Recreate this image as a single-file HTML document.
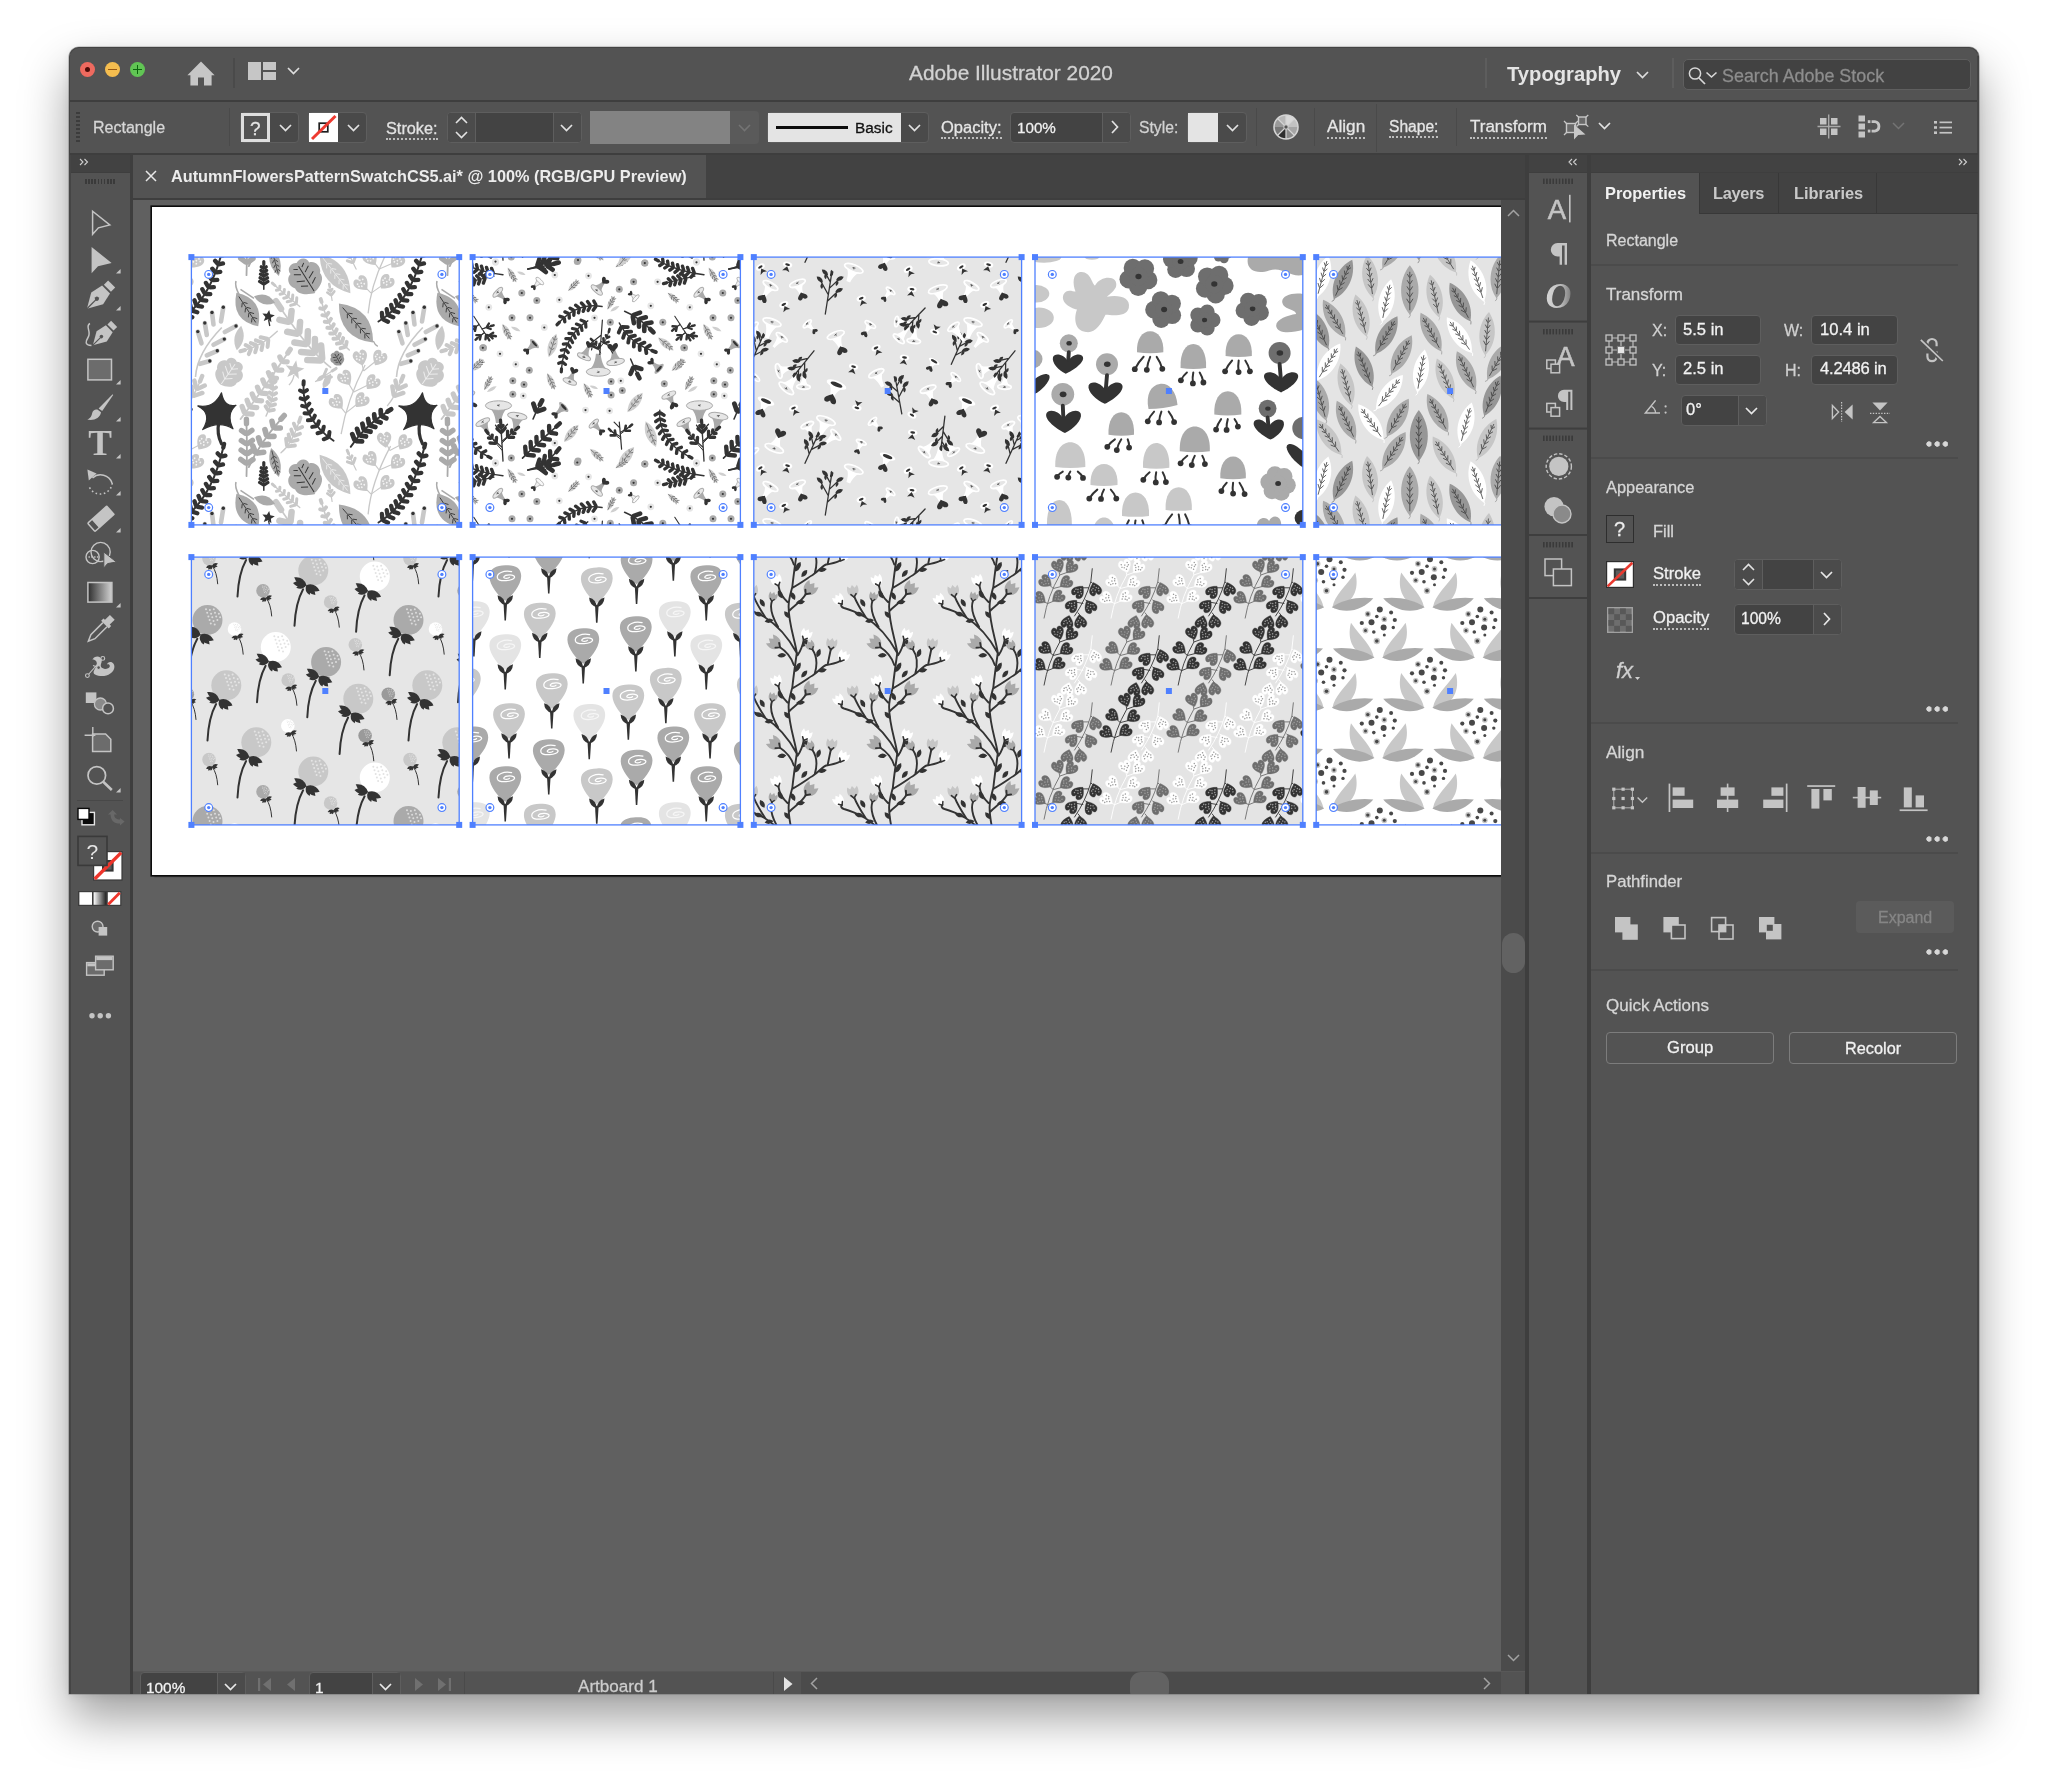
<!DOCTYPE html>
<html lang="en"><head><meta charset="utf-8"><title>Adobe Illustrator 2020</title>
<style>
*{box-sizing:border-box;margin:0;padding:0}
html,body{width:2048px;height:1786px;background:#fff;overflow:hidden}
body{position:relative;font-family:"Liberation Sans",Arial,sans-serif;color:#dcdcdc;font-size:16px}
.a{position:absolute}
.t{position:absolute;white-space:nowrap;line-height:1;will-change:transform}
#win{left:69px;top:47px;width:1910px;height:1647px;background:#535353;border-radius:10px 10px 0 0;border:1.6px solid #434343;border-bottom:0;
 box-shadow:0 0 0 .6px rgba(0,0,0,.3),0 24px 48px rgba(0,0,0,.38),0 2px 8px rgba(0,0,0,.08)}
.t{-webkit-text-stroke:.28px currentColor}
.t[style*="font-weight:700"]{-webkit-text-stroke:0}
.dk{background:#3e3e3e}
.f{position:absolute;background:#434343;border:1px solid #5e5e5e;border-radius:4px}
.dv{position:absolute;width:1px;background:#5e5e5e}
.u{border-bottom:2px dotted #bdbdbd;padding-bottom:1px}
.hl{position:absolute;height:2px;background:#4b4b4b}
svg{position:absolute;overflow:visible;will-change:transform}
.more{width:22px;height:6px;background:radial-gradient(circle at 3px 3px,#d8d8d8 0 2.4px,transparent 3px) 0 0/8.2px 6px repeat-x}
</style></head><body>
<div class="a" id="win"></div>
<!-- title bar -->
<div class="a" style="left:80px;top:62px;width:15px;height:15px;border-radius:50%;background:#ee6a5f"></div>
<div class="a" style="left:85px;top:67px;width:5px;height:5px;border-radius:50%;background:#4c0b07"></div>
<div class="a" style="left:105px;top:62px;width:15px;height:15px;border-radius:50%;background:#f5bd4f"></div>
<div class="a" style="left:108px;top:68.6px;width:9px;height:1.6px;background:#985712"></div>
<div class="a" style="left:130px;top:62px;width:15px;height:15px;border-radius:50%;background:#61c554"></div>
<div class="a" style="left:133px;top:68.7px;width:9px;height:1.6px;background:#0b650d"></div>
<div class="a" style="left:136.7px;top:65px;width:1.6px;height:9px;background:#0b650d"></div>
<svg style="left:187px;top:61px" width="28" height="26" viewBox="0 0 28 26"><path d="M14 0.6 L27.6 14.2 H24.6 V24.6 H17 V16.4 H11 V24.6 H3.4 V14.2 H0.4 Z" fill="#c6c6c6"/></svg>
<div class="a" style="left:233px;top:58px;width:2px;height:30px;background:#4a4a4a"></div>
<svg style="left:248px;top:62px" width="28" height="18" viewBox="0 0 28 18"><rect x="0" y="0" width="13" height="18" fill="#c6c6c6"/><rect x="15" y="0" width="13" height="8" fill="#c6c6c6"/><rect x="15" y="10" width="13" height="8" fill="#c6c6c6"/></svg>
<svg style="left:287px;top:67px" width="13" height="8" viewBox="0 0 13 8"><path d="M1 1 L6.5 6.5 L12 1" fill="none" stroke="#dedede" stroke-width="1.7"/></svg>
<div class="t" style="left:909px;top:62.5px;font-size:20.85px;color:#d2d2d2">Adobe Illustrator 2020</div>
<div class="a" style="left:1485px;top:58px;width:2px;height:30px;background:#5d5d5d"></div>
<div class="t" style="left:1507px;top:63.5px;font-size:20.2px;font-weight:700;color:#e4e4e4">Typography</div>
<svg style="left:1636px;top:71px" width="13" height="8" viewBox="0 0 13 8"><path d="M1 1 L6.5 6.5 L12 1" fill="none" stroke="#dedede" stroke-width="1.7"/></svg>
<div class="a" style="left:1672px;top:58px;width:2px;height:30px;background:#5d5d5d"></div>
<div class="a" style="left:1683px;top:59px;width:288px;height:31px;background:#424242;border:1.5px solid #5f5f5f;border-radius:5px"></div>
<svg style="left:1688px;top:66px" width="32" height="20" viewBox="0 0 32 20"><circle cx="7" cy="7.5" r="5.6" fill="none" stroke="#d8d8d8" stroke-width="1.5"/><path d="M11 12 L17 18" stroke="#d8d8d8" stroke-width="1.7"/><path d="M18.5 6.5 L23.5 11 L28.5 6.5" fill="none" stroke="#d8d8d8" stroke-width="1.6"/></svg>
<div class="t" style="left:1722px;top:67.6px;font-size:17.9px;color:#8d8d8d">Search Adobe Stock</div>
<div class="a dk" style="left:70px;top:100px;width:1908px;height:2px"></div>
<div class="a" style="left:1976.5px;top:56px;width:2.5px;height:1638px;background:#444"></div>
<!-- control bar -->
<div class="a" style="left:76px;top:112px;width:3.5px;height:31px;background:repeating-linear-gradient(#3c3c3c 0 2px,transparent 2px 4px)"></div>
<div class="t" style="left:93px;top:120px;font-size:16px;color:#d6d6d6">Rectangle</div>
<div class="dv" style="left:229px;top:108px;height:38px;background:#4a4a4a"></div>
<!-- fill -->
<div class="f" style="left:240px;top:112px;width:59px;height:31px;background:#494949"></div>
<div class="a" style="left:241px;top:113px;width:29px;height:29px;background:#535353;border:3px solid #dedede"></div>
<div class="t" style="left:250px;top:119px;font-size:19px;color:#e6e6e6">?</div>
<svg style="left:279px;top:124px" width="13" height="8" viewBox="0 0 13 8"><path d="M1 1 L6.5 6.5 L12 1" fill="none" stroke="#e2e2e2" stroke-width="1.7"/></svg>
<!-- stroke -->
<div class="f" style="left:308px;top:112px;width:59px;height:31px;background:#494949"></div>
<svg style="left:309px;top:113px" width="29" height="29" viewBox="0 0 29 29"><rect width="29" height="29" fill="#fff"/><rect x="10.2" y="10.2" width="8.6" height="8.6" fill="none" stroke="#1e1e1e" stroke-width="1.7"/><path d="M3 26 L26.5 3" stroke="#ee3a30" stroke-width="3"/></svg>
<svg style="left:347px;top:124px" width="13" height="8" viewBox="0 0 13 8"><path d="M1 1 L6.5 6.5 L12 1" fill="none" stroke="#e2e2e2" stroke-width="1.7"/></svg>
<div class="t" style="left:386px;top:119.5px;font-size:16.3px;color:#e2e2e2"><span class="u">Stroke:</span></div>
<div class="f" style="left:447px;top:112px;width:135px;height:31px;background:#434343"></div>
<div class="a" style="left:448px;top:113px;width:27px;height:29px;background:#4b4b4b;border-radius:3px 0 0 3px"></div>
<div class="a" style="left:554px;top:113px;width:27px;height:29px;background:#4b4b4b;border-radius:0 3px 3px 0"></div>
<div class="dv" style="left:475px;top:113px;height:29px"></div><div class="dv" style="left:553px;top:113px;height:29px"></div>
<svg style="left:455px;top:116px" width="13" height="23" viewBox="0 0 13 23"><path d="M1 7 L6.5 1.5 L12 7 M1 16 L6.5 21.5 L12 16" fill="none" stroke="#e2e2e2" stroke-width="1.6"/></svg>
<svg style="left:560px;top:124px" width="13" height="8" viewBox="0 0 13 8"><path d="M1 1 L6.5 6.5 L12 1" fill="none" stroke="#e2e2e2" stroke-width="1.7"/></svg>
<!-- variable width profile (disabled) -->
<div class="a" style="left:590px;top:111px;width:169px;height:33px;background:#5a5a5a;border-radius:4px"></div>
<div class="a" style="left:590px;top:111px;width:140px;height:33px;background:#838383"></div>
<svg style="left:738px;top:124px" width="13" height="8" viewBox="0 0 13 8"><path d="M1 1 L6.5 6.5 L12 1" fill="none" stroke="#747474" stroke-width="1.6"/></svg>
<!-- brush -->
<div class="f" style="left:767px;top:112px;width:162px;height:31px;background:#4a4a4a"></div>
<div class="a" style="left:768px;top:113px;width:133px;height:29px;background:#e4e4e4"></div>
<div class="a" style="left:776px;top:126px;width:72px;height:3.4px;background:#0c0c0c"></div>
<div class="t" style="left:855px;top:120px;font-size:15.4px;color:#111">Basic</div>
<svg style="left:908px;top:124px" width="13" height="8" viewBox="0 0 13 8"><path d="M1 1 L6.5 6.5 L12 1" fill="none" stroke="#e2e2e2" stroke-width="1.7"/></svg>
<div class="t" style="left:941px;top:118.5px;font-size:16.5px;color:#e6e6e6"><span class="u">Opacity:</span></div>
<div class="f" style="left:1010px;top:112px;width:121px;height:31px"></div>
<div class="a" style="left:1103px;top:113px;width:27px;height:29px;background:#4b4b4b;border-radius:0 3px 3px 0"></div>
<div class="dv" style="left:1102px;top:113px;height:29px"></div>
<div class="t" style="left:1017px;top:119.5px;font-size:15.2px;color:#f0f0f0">100%</div>
<svg style="left:1111px;top:120px" width="8" height="14" viewBox="0 0 8 14"><path d="M1 1 L6.5 7 L1 13" fill="none" stroke="#e2e2e2" stroke-width="1.7"/></svg>
<div class="t" style="left:1138.5px;top:120px;font-size:15.7px;color:#d2d2d2">Style:</div>
<div class="f" style="left:1187px;top:112px;width:60px;height:31px;background:#4a4a4a"></div>
<div class="a" style="left:1188px;top:113px;width:30px;height:29px;background:#e4e4e4"></div>
<svg style="left:1226px;top:124px" width="13" height="8" viewBox="0 0 13 8"><path d="M1 1 L6.5 6.5 L12 1" fill="none" stroke="#e2e2e2" stroke-width="1.7"/></svg>
<div class="dv" style="left:1256px;top:108px;height:38px;background:#4a4a4a"></div>
<!-- recolor wheel -->
<svg style="left:1273px;top:114px" width="26" height="26" viewBox="-13 -13 26 26">
<circle r="12" fill="#8e8e8e"/>
<path d="M0 0 L0 -12 A12 12 0 0 1 8.5 -8.5 Z" fill="#d9d9d9"/><path d="M0 0 L8.5 -8.5 A12 12 0 0 1 12 0 Z" fill="#c2c2c2"/>
<path d="M0 0 L12 0 A12 12 0 0 1 8.5 8.5 Z" fill="#a5a5a5"/><path d="M0 0 L8.5 8.5 A12 12 0 0 1 0 12 Z" fill="#8a8a8a"/>
<path d="M0 0 L0 12 A12 12 0 0 1 -8.5 8.5 Z" fill="#2d2d2d"/><path d="M0 0 L-8.5 8.5 A12 12 0 0 1 -12 0 Z" fill="#777"/>
<path d="M0 0 L-12 0 A12 12 0 0 1 -8.5 -8.5 Z" fill="#9a9a9a"/><path d="M0 0 L-8.5 -8.5 A12 12 0 0 1 0 -12 Z" fill="#b8b8b8"/>
<g stroke="#d4d4d4" stroke-width="1.2"><path d="M0 0L0 -12M0 0L8.5 -8.5M0 0L8.5 8.5M0 0L-8.5 8.5M0 0L0 12M0 0L-8.5 -8.5"/></g>
<circle r="12" fill="none" stroke="#d4d4d4" stroke-width="1.6"/><circle r="2.2" fill="#555" stroke="#d4d4d4" stroke-width="1"/></svg>
<div class="dv" style="left:1314px;top:108px;height:38px;background:#4a4a4a"></div>
<div class="t" style="left:1327px;top:117.5px;font-size:17.2px;color:#e6e6e6"><span class="u">Align</span></div>
<div class="dv" style="left:1376px;top:104px;height:48px;background:#4a4a4a"></div>
<div class="t" style="left:1389px;top:118.5px;font-size:15.6px;color:#e6e6e6"><span class="u">Shape:</span></div>
<div class="dv" style="left:1456px;top:108px;height:38px;background:#4a4a4a"></div>
<div class="t" style="left:1469.5px;top:117.5px;font-size:17px;color:#e6e6e6"><span class="u">Transform</span></div>
<svg style="left:1563px;top:114px" width="27" height="27" viewBox="0 0 27 27"><rect x="3.5" y="9.5" width="9" height="9" fill="#6a6a6a" stroke="#c8c8c8" stroke-width="1.4"/><path d="M1 7 L3.5 9.5 M1 21 L3.5 18.5 M15 7 L12.5 9.5" stroke="#c8c8c8" stroke-width="1.3"/><rect x="15.5" y="3" width="7.5" height="7.5" fill="#6a6a6a" stroke="#c8c8c8" stroke-width="1.4"/><path d="M13.3 1 L15.5 3 M25.3 1 L23 3 M25.3 12.6 L23 10.5 M13.5 12.5 L15.5 10.5" stroke="#c8c8c8" stroke-width="1.2"/><path d="M11 10.5 L11 25.5 L15.2 21 L22.5 20.6 Z" fill="#c8c8c8"/></svg>
<svg style="left:1598px;top:122px" width="13" height="8" viewBox="0 0 13 8"><path d="M1 1 L6.5 6.5 L12 1" fill="none" stroke="#e2e2e2" stroke-width="1.7"/></svg>
<!-- right icons -->
<svg style="left:1817px;top:114px" width="24" height="25" viewBox="0 0 24 25"><g fill="#c4c4c4"><rect x="3" y="4" width="6.5" height="6.5"/><rect x="14" y="4" width="6.5" height="6.5"/><rect x="3" y="14.5" width="6.5" height="6.5"/><rect x="14" y="14.5" width="6.5" height="6.5"/></g><path d="M11.7 0.5 V24.5 M0.5 12.5 H23.5" stroke="#a9a9a9" stroke-width="1.4"/></svg>
<svg style="left:1858px;top:115px" width="24" height="24" viewBox="0 0 24 24"><g fill="#c4c4c4"><rect x="0.5" y="0.5" width="6.5" height="6"/><rect x="0.5" y="8.5" width="6.5" height="6"/><rect x="0.5" y="16.5" width="6.5" height="6"/><rect x="9.8" y="5.2" width="2.6" height="2.9"/><rect x="9.8" y="14.6" width="2.6" height="2.9"/></g><path d="M13.6 6.6 H16.8 A4.8 4.8 0 0 1 16.8 16.1 H13.6" fill="none" stroke="#c4c4c4" stroke-width="2.9"/></svg>
<svg style="left:1892px;top:122px" width="13" height="8" viewBox="0 0 13 8"><path d="M1 1 L6.5 6.5 L12 1" fill="none" stroke="#747474" stroke-width="1.5"/></svg>
<svg style="left:1934px;top:120px" width="18" height="15" viewBox="0 0 18 15"><g fill="#c4c4c4"><rect x="0" y="1" width="3" height="2.6"/><rect x="0" y="6.2" width="3" height="2.6"/><rect x="0" y="11.4" width="3" height="2.6"/><rect x="5.5" y="1.5" width="12.5" height="1.7"/><rect x="5.5" y="6.7" width="12.5" height="1.7"/><rect x="5.5" y="11.9" width="12.5" height="1.7"/></g></svg>
<div class="a dk" style="left:70px;top:153px;width:1908px;height:2px"></div>
<!-- document tab strip -->
<div class="a" style="left:133px;top:155px;width:1393px;height:43px;background:#424242"></div>
<div class="a" style="left:133px;top:155px;width:573px;height:43px;background:#535353"></div>
<div class="a dk" style="left:133px;top:198px;width:1393px;height:2px"></div>
<svg style="left:145px;top:170px" width="12" height="12" viewBox="0 0 12 12"><path d="M1 1 L11 11 M11 1 L1 11" stroke="#e8e8e8" stroke-width="1.5"/></svg>
<div class="t" style="left:171px;top:168px;font-size:16.27px;font-weight:700;color:#ececec">AutumnFlowersPatternSwatchCS5.ai* @ 100% (RGB/GPU Preview)</div>
<!-- canvas -->
<div class="a" id="canvas" style="left:133px;top:200px;width:1368px;height:1472px;background:#606060;overflow:hidden">
 <div class="a" style="left:18.6px;top:6.8px;width:1400px;height:668px;background:#fff;box-shadow:0 0 0 1.6px #0c0c0c,1.5px 2px 1.5px rgba(0,0,0,.4)"></div>
</div>
<!-- v scrollbar -->
<div class="a" style="left:1501px;top:200px;width:24px;height:1472px;background:#4b4b4b"></div>
<svg style="left:1507px;top:209px" width="13" height="8" viewBox="0 0 13 8"><path d="M1 7 L6.5 1.5 L12 7" fill="none" stroke="#a2a2a2" stroke-width="1.5"/></svg>
<svg style="left:1507px;top:1654px" width="13" height="8" viewBox="0 0 13 8"><path d="M1 1 L6.5 6.5 L12 1" fill="none" stroke="#a2a2a2" stroke-width="1.5"/></svg>
<div class="a" style="left:1502px;top:933px;width:23px;height:40px;border-radius:11.5px;background:#626262"></div>
<!-- status bar -->
<div class="a" style="left:133px;top:1671px;width:1393px;height:23px;background:#535353;overflow:hidden">
 <div class="a" style="left:0;top:0;width:1393px;height:1px;background:#585858"></div>
 <div class="f" style="left:7px;top:1px;width:106px;height:30px;background:#434343"></div>
 <div class="a" style="left:85px;top:2px;width:27px;height:28px;background:#4b4b4b"></div><div class="dv" style="left:84px;top:2px;height:28px"></div>
 <div class="t" style="left:12.5px;top:9px;font-size:15.4px;color:#f2f2f2">100%</div>
 <svg style="left:91px;top:12px" width="13" height="8" viewBox="0 0 13 8"><path d="M1 1 L6.5 6.5 L12 1" fill="none" stroke="#e8e8e8" stroke-width="1.7"/></svg>
 <svg style="left:125px;top:7px" width="14" height="13" viewBox="0 0 14 13"><rect x="0" y="0" width="2.2" height="13" fill="#707070"/><path d="M13 0 L13 13 L5 6.5 Z" fill="#707070"/></svg>
 <svg style="left:153px;top:7px" width="10" height="13" viewBox="0 0 10 13"><path d="M9 0 L9 13 L1 6.5 Z" fill="#707070"/></svg>
 <div class="f" style="left:176px;top:1px;width:92px;height:30px;background:#434343"></div>
 <div class="a" style="left:240px;top:2px;width:27px;height:28px;background:#4b4b4b"></div><div class="dv" style="left:239px;top:2px;height:28px"></div>
 <div class="t" style="left:182px;top:9px;font-size:15.4px;color:#f2f2f2">1</div>
 <svg style="left:246px;top:12px" width="13" height="8" viewBox="0 0 13 8"><path d="M1 1 L6.5 6.5 L12 1" fill="none" stroke="#e8e8e8" stroke-width="1.7"/></svg>
 <svg style="left:281px;top:7px" width="10" height="13" viewBox="0 0 10 13"><path d="M1 0 L1 13 L9 6.5 Z" fill="#707070"/></svg>
 <svg style="left:304px;top:7px" width="14" height="13" viewBox="0 0 14 13"><rect x="11.8" y="0" width="2.2" height="13" fill="#707070"/><path d="M1 0 L1 13 L9 6.5 Z" fill="#707070"/></svg>
 <div class="dv" style="left:331px;top:1px;height:22px;background:#4a4a4a"></div>
 <div class="t" style="left:444.5px;top:7px;font-size:17.1px;color:#cdcdcd">Artboard 1</div>
 <div class="dv" style="left:640px;top:1px;height:22px;background:#4a4a4a"></div>
 <svg style="left:650px;top:6px" width="10" height="14" viewBox="0 0 10 14"><path d="M1 0 L1 14 L9.5 7 Z" fill="#e4e4e4"/></svg>
 <!-- h scrollbar -->
 <div class="a" style="left:668px;top:1px;width:700px;height:22px;background:#4b4b4b"></div>
 <svg style="left:677px;top:6px" width="8" height="13" viewBox="0 0 8 13"><path d="M7 1 L1.5 6.5 L7 12" fill="none" stroke="#a2a2a2" stroke-width="1.5"/></svg>
 <div class="a" style="left:997px;top:1px;width:39px;height:30px;border-radius:11px;background:#626262"></div>
 <svg style="left:1350px;top:6px" width="8" height="13" viewBox="0 0 8 13"><path d="M1 1 L6.5 6.5 L1 12" fill="none" stroke="#a2a2a2" stroke-width="1.5"/></svg>
</div>
<!-- vertical separators -->
<div class="a dk" style="left:130px;top:155px;width:3px;height:1539px"></div>
<div class="a dk" style="left:1525px;top:155px;width:4px;height:1539px"></div>
<div class="a dk" style="left:1587px;top:155px;width:4px;height:1539px"></div>
<!-- left toolbar -->
<div class="a" style="left:70px;top:155px;width:60px;height:17px;background:#424242"></div>
<div class="a" style="left:70px;top:172px;width:60px;height:1px;background:#3e3e3e"></div>
<div class="a" style="left:69px;top:155px;width:2px;height:1539px;background:#454545"></div>
<svg style="left:79px;top:158px" width="10" height="8" viewBox="0 0 10 8"><path d="M1 1 L4 4 L1 7 M5.5 1 L8.5 4 L5.5 7" fill="none" stroke="#cfcfcf" stroke-width="1.1"/></svg>
<div class="a" style="left:84.5px;top:178.5px;width:30px;height:5.5px;background:repeating-linear-gradient(90deg,#3a3a3a 0 1.6px,transparent 1.6px 3.15px)"></div>
<svg style="left:70px;top:200px" width="60" height="830" viewBox="70 200 60 830">
<defs>
<linearGradient id="tg" x1="0" x2="1" y1="0" y2="0"><stop offset="0" stop-color="#2e2e2e"/><stop offset="1" stop-color="#d2d2d2"/></linearGradient>
<path id="fly" d="M4.6 0 V4.6 H0 Z" fill="#c4c4c4"/>
<g id="nib"><rect x="-5" y="-17.5" width="10" height="6" fill="#c4c4c4"/><path d="M-5.6 -9.5 H5.6 L8.4 3 L0 17.5 L-8.4 3 Z" fill="#c4c4c4"/><path d="M0 17.5 V5" stroke="#535353" stroke-width="1.3"/><circle cx="0" cy="3.4" r="2.1" fill="#535353"/></g>
</defs>
<g fill="#c4c4c4" stroke="none">
<!-- selection -->
<path d="M92.6 211.2 V234.2 L98.4 227.8 L109.8 224.9 Z" fill="none" stroke="#c4c4c4" stroke-width="1.5" stroke-linejoin="miter"/>
<!-- direct selection -->
<path d="M91.6 247 V273.2 L98 266.3 L111.6 262.9 Z"/>
<use href="#fly" x="116" y="269"/>
<!-- pen -->
<use href="#nib" transform="translate(99.3 296.3) rotate(45)"/>
<use href="#fly" x="116" y="306"/>
<!-- curvature -->
<use href="#nib" transform="translate(103.5 334.5) rotate(45) scale(.86)"/>
<path d="M90 323.5 C84.5 326 92 331.5 88 337.5 C85.5 341.5 84.5 345.3 91.5 345.6" fill="none" stroke="#c4c4c4" stroke-width="1.5"/>
<!-- rectangle -->
<rect x="87.9" y="359.3" width="23.6" height="20.6" fill="#6c6c6c" stroke="#c4c4c4" stroke-width="1.5"/>
<use href="#fly" x="116" y="380"/>
<!-- paintbrush -->
<path d="M112.6 394.2 L113.2 395 L102.2 411 L98.6 408.6 Z"/>
<path d="M97.4 409.6 L101 412.2 C100.2 418 94 421 87.2 419.6 C91 418 91.6 415.6 92.2 413 C92.8 410.6 95 409 97.4 409.6 Z"/>
<use href="#fly" x="116" y="417"/>
<!-- type -->
<text x="100" y="455.2" text-anchor="middle" font-family="Liberation Serif,serif" font-weight="700" font-size="35.5">T</text>
<use href="#fly" x="116" y="454"/>
<!-- rotate -->
<path d="M92.5 478 A12 12 0 0 1 112 483" fill="none" stroke="#c4c4c4" stroke-width="1.6"/>
<path d="M112.2 483 A12 12 0 0 1 88.6 485" fill="none" stroke="#c4c4c4" stroke-width="1.6" stroke-dasharray="1.6 2.6"/>
<path d="M87.4 469.5 L96.6 473.4 L88.8 480.6 Z"/>
<use href="#fly" x="116" y="491"/>
<!-- eraser -->
<g transform="translate(100 517) rotate(-42)"><rect x="-8" y="-4.4" width="21" height="12.6" rx="1"/><rect x="-13.4" y="-3.6" width="6.6" height="11" rx="1" fill="none" stroke="#c4c4c4" stroke-width="1.5"/></g>
<use href="#fly" x="116" y="528"/>
<!-- shape builder -->
<circle cx="92.6" cy="557" r="6.6" fill="none" stroke="#c4c4c4" stroke-width="1.4"/>
<circle cx="100.6" cy="552" r="9.6" fill="none" stroke="#c4c4c4" stroke-width="1.4"/>
<path d="M88.5 557 H99" stroke="#c4c4c4" stroke-width="1.3" stroke-dasharray="1.4 1.4" fill="none"/>
<path d="M103.8 552 V568 L107.6 563.6 L116.4 562 Z" stroke="#535353" stroke-width="1"/>
<!-- gradient -->
<rect x="87.9" y="582.5" width="24" height="19.6" fill="url(#tg)" stroke="#c4c4c4" stroke-width="1.5"/>
<use href="#fly" x="116" y="603"/>
<!-- eyedropper -->
<g transform="translate(100 629.6) rotate(45)"><path d="M-3.4 -17.4 H3.4 V-9.4 H-3.4 Z"/><rect x="-5.4" y="-10.4" width="10.8" height="3.4"/><path d="M-2.9 -7 V10 L0 16.5 L2.9 10 V-7" fill="none" stroke="#c4c4c4" stroke-width="1.5"/></g>
<!-- puppet warp -->
<path d="M94 657.5 C100 654.5 103.4 659.4 101 664 C99.6 667.6 104 670.6 108.6 668 C111 666.6 109.5 663 107 664.6 C107.6 660.6 114.6 661 114.4 667 C114 674.6 102.6 678.6 95 674.4 C91.6 672.4 95.4 668.6 96.6 665.4 C97.6 661.6 95.6 659.4 92.4 659.4 Z"/>
<path d="M87.5 675.5 L102.6 658.6 M93 665.6 L108 671" stroke="#c4c4c4" stroke-width="1.1" fill="none"/>
<g fill="#535353" stroke="#c4c4c4" stroke-width="1.1"><circle cx="87.4" cy="675.6" r="1.9"/><circle cx="102.8" cy="658.4" r="1.9"/><circle cx="98.6" cy="667.6" r="1.9"/></g>
<!-- blend -->
<rect x="85.8" y="692.4" width="10.6" height="10.6"/>
<circle cx="100.4" cy="704" r="6" fill="#8a8a8a" stroke="#c4c4c4" stroke-width="1.3"/>
<circle cx="108" cy="708.4" r="5.4" fill="#535353" stroke="#c4c4c4" stroke-width="1.5"/>
<!-- artboard -->
<path d="M92.6 734 H105.6 L110.8 739.2 V751.4 H92.6 Z" fill="#6c6c6c" stroke="#c4c4c4" stroke-width="1.5"/>
<path d="M92.8 727 V737 M84.6 735.2 H95.4" stroke="#c4c4c4" stroke-width="1.4" fill="none"/>
<!-- zoom -->
<circle cx="96.8" cy="775.4" r="8.8" fill="none" stroke="#c4c4c4" stroke-width="1.7"/>
<path d="M103.2 781.8 L111.8 790" stroke="#c4c4c4" stroke-width="2.6" fill="none"/>
<use href="#fly" x="116" y="788"/>
<!-- separator -->
<rect x="77" y="800" width="46" height="1" fill="#484848"/>
<!-- default fill/stroke -->
<rect x="82" y="812.4" width="12.4" height="12.4" fill="#0a0a0a" stroke="#e6e6e6" stroke-width="1.4"/>
<rect x="78" y="808.4" width="11" height="11" fill="#fff" stroke="#0a0a0a" stroke-width="1.4"/>
<path d="M112.6 810 L117 814.4 H114.2 C114.2 818 116.6 819.4 120 819.4 V818 L124.6 821.6 L120 825.6 V823.6 C113.6 823.6 110.6 820 110.6 814.4 H108 Z" fill="#686868"/>
<!-- stroke box (behind) -->
<rect x="93.6" y="851.6" width="28.4" height="28.4" fill="#fff" stroke="#3a3a3a" stroke-width="1.2"/>
<rect x="103" y="861" width="9.6" height="9.6" fill="#5c5c5c" stroke="#363636" stroke-width="2"/>
<path d="M94.6 879 L121.2 852.6" stroke="#ee352b" stroke-width="3.4" fill="none"/>
<!-- fill box -->
<rect x="78" y="836.4" width="29" height="29" fill="#535353" stroke="#3a3a3a" stroke-width="1.6"/>
<text x="92.4" y="859" text-anchor="middle" font-family="Liberation Sans,sans-serif" font-size="21" fill="#e6e6e6">?</text>
<!-- colour / gradient / none -->
<rect x="78" y="891" width="43.4" height="15" fill="#3c3c3c"/>
<rect x="79.4" y="892.2" width="12.6" height="12.6" fill="#fff"/>
<rect x="93.6" y="892.2" width="12.6" height="12.6" fill="url(#tg2)"/>
<rect x="107.8" y="892.2" width="12.4" height="12.6" fill="#fff"/>
<path d="M108.2 904.4 L119.8 892.8" stroke="#ee352b" stroke-width="2.8" fill="none"/>
<!-- draw mode -->
<circle cx="97.6" cy="926.6" r="5.4" fill="#6a6a6a" stroke="#c4c4c4" stroke-width="1.4"/>
<rect x="98.6" y="927" width="8.6" height="8.6"/>
<!-- screen mode -->
<rect x="86.6" y="962.6" width="17.6" height="12.6" fill="#6c6c6c" stroke="#c4c4c4" stroke-width="1.4"/>
<rect x="87.3" y="963.3" width="16.2" height="3" fill="#c4c4c4"/>
<rect x="95.6" y="956.2" width="17.6" height="13.6" fill="#6c6c6c" stroke="#c4c4c4" stroke-width="1.4"/>
<rect x="96.3" y="956.9" width="16.2" height="3.2" fill="#c4c4c4"/>
<!-- more -->
<circle cx="92" cy="1015.8" r="2.7"/><circle cx="100.2" cy="1015.8" r="2.7"/><circle cx="108.4" cy="1015.8" r="2.7"/>
</g>
<defs><linearGradient id="tg2" x1="0" x2="1" y1="0" y2="0"><stop offset="0" stop-color="#fff"/><stop offset="1" stop-color="#222"/></linearGradient></defs>
</svg>
<!-- right icon dock -->
<div class="a" style="left:1529px;top:155px;width:58px;height:17px;background:#424242"></div>
<div class="a" style="left:1529px;top:172px;width:58px;height:1px;background:#3e3e3e"></div>
<svg style="left:1568px;top:158px" width="10" height="8" viewBox="0 0 10 8"><path d="M4 1 L1 4 L4 7 M8.5 1 L5.5 4 L8.5 7" fill="none" stroke="#cfcfcf" stroke-width="1.1"/></svg>
<svg style="left:1529px;top:172px" width="58" height="440" viewBox="1529 172 58 440">
<defs><linearGradient id="og" x1="0" x2="1"><stop offset="0" stop-color="#d6d6d6"/><stop offset=".55" stop-color="#c2c2c2"/><stop offset="1" stop-color="#7a7a7a"/></linearGradient>
<pattern id="grp" width="3.15" height="6" patternUnits="userSpaceOnUse" x="1543"><rect width="1.6" height="6" fill="#3a3a3a"/></pattern></defs>
<g fill="#c4c4c4">
<rect x="1543" y="178.6" width="30" height="5.4" fill="url(#grp)"/>
<text x="1557" y="218.6" text-anchor="middle" font-family="Liberation Sans,sans-serif" font-size="27.5" stroke="#c4c4c4" stroke-width=".6">A</text>
<rect x="1569" y="194.8" width="1.6" height="27.6"/>
<path d="M1557.6 243 H1567 V264.8 H1564.6 V245.4 H1562 V264.8 H1559.6 V256.6 H1557.6 A6.8 6.8 0 0 1 1557.6 243 Z"/>
<text x="1558.6" y="308" text-anchor="middle" font-family="Liberation Serif,serif" font-style="italic" font-weight="700" font-size="36" fill="url(#og)">O</text>
<rect x="1529" y="320.6" width="58" height="2" fill="#3e3e3e"/>
<rect x="1543" y="329" width="30" height="5.4" fill="url(#grp)"/>
<text x="1565.4" y="365.6" text-anchor="middle" font-family="Liberation Sans,sans-serif" font-size="27" stroke="#c4c4c4" stroke-width=".6">A</text>
<rect x="1546.8" y="360" width="8.6" height="8.6" fill="#535353" stroke="#c4c4c4" stroke-width="1.5"/><rect x="1551" y="364.2" width="8.6" height="8.6" fill="#535353" stroke="#c4c4c4" stroke-width="1.5"/>
<path d="M1564 389.8 H1572.4 V410 H1570.4 V391.8 H1568.2 V410 H1566.2 V402 H1564 A6.1 6.1 0 0 1 1564 389.8 Z"/>
<rect x="1546.8" y="403.4" width="8.6" height="8.6" fill="#535353" stroke="#c4c4c4" stroke-width="1.5"/><rect x="1551" y="407.6" width="8.6" height="8.6" fill="#535353" stroke="#c4c4c4" stroke-width="1.5"/>
<rect x="1529" y="427.6" width="58" height="2" fill="#3e3e3e"/>
<rect x="1543" y="435.6" width="30" height="5.4" fill="url(#grp)"/>
<circle cx="1558.8" cy="466.4" r="9.6"/><circle cx="1558.8" cy="466.4" r="12.6" fill="none" stroke="#c4c4c4" stroke-width="1.4" stroke-dasharray="3.4 2"/>
<circle cx="1554" cy="506.6" r="9.6"/><circle cx="1562" cy="514" r="9" fill="#8a8a8a" stroke="#c4c4c4" stroke-width="1.4"/>
<rect x="1529" y="534" width="58" height="2" fill="#3e3e3e"/>
<rect x="1543" y="542" width="30" height="5.4" fill="url(#grp)"/>
<rect x="1545" y="559" width="16.6" height="16.6" fill="#535353" stroke="#c4c4c4" stroke-width="1.5"/><rect x="1553.4" y="569" width="18" height="16.6" fill="#535353" stroke="#c4c4c4" stroke-width="1.5"/>
<rect x="1529" y="597" width="58" height="2" fill="#3e3e3e"/>
</g></svg>
<!-- properties panel -->
<div class="a" style="left:1591px;top:155px;width:387px;height:17px;background:#424242"></div>
<div class="a" style="left:1591px;top:172px;width:387px;height:1px;background:#3e3e3e"></div>
<svg style="left:1958px;top:158px" width="10" height="8" viewBox="0 0 10 8"><path d="M1 1 L4 4 L1 7 M5.5 1 L8.5 4 L5.5 7" fill="none" stroke="#cfcfcf" stroke-width="1.1"/></svg>
<div class="a" style="left:1591px;top:173px;width:387px;height:41px;background:#424242"></div>
<div class="a" style="left:1699px;top:212.5px;width:279px;height:1.5px;background:#383838"></div>
<div class="a" style="left:1591px;top:173px;width:108px;height:42px;background:#535353"></div>
<div class="dv" style="left:1699px;top:173px;height:41px;background:#383838"></div>
<div class="dv" style="left:1778px;top:173px;height:41px;background:#383838"></div>
<div class="dv" style="left:1876px;top:173px;height:41px;background:#383838"></div>
<div class="t" style="left:1605px;top:184.5px;font-size:16.4px;font-weight:700;color:#f2f2f2">Properties</div>
<div class="t" style="left:1713px;top:184.5px;font-size:16.4px;letter-spacing:-.3px;font-weight:700;color:#c9c9c9">Layers</div>
<div class="t" style="left:1793.5px;top:184.5px;font-size:16.4px;font-weight:700;color:#c9c9c9">Libraries</div>
<div class="t" style="left:1606px;top:233px;font-size:16px;color:#d6d6d6">Rectangle</div>
<div class="hl" style="left:1591px;top:264px;width:367px"></div>
<div class="t" style="left:1606px;top:285.5px;font-size:17px;color:#d6d6d6">Transform</div>
<!-- ref point -->
<svg style="left:1605px;top:334px" width="32" height="32" viewBox="0 0 32 32"><path d="M4 4 H28 V28 H4 Z M4 16 H28 M16 4 V28" fill="none" stroke="#bdbdbd" stroke-width="1.2"/><g fill="#535353" stroke="#c4c4c4" stroke-width="1.3"><rect x="1" y="1" width="6" height="6"/><rect x="13" y="1" width="6" height="6"/><rect x="25" y="1" width="6" height="6"/><rect x="1" y="13" width="6" height="6"/><rect x="25" y="13" width="6" height="6"/><rect x="1" y="25" width="6" height="6"/><rect x="13" y="25" width="6" height="6"/><rect x="25" y="25" width="6" height="6"/></g><rect x="12.4" y="12.4" width="7.2" height="7.2" fill="#e8e8e8" stroke="#7a7a7a" stroke-width="1"/></svg>
<div class="t" style="left:1652px;top:323px;font-size:16px;color:#d0d0d0">X:</div>
<div class="f" style="left:1675px;top:315px;width:86px;height:30px"></div><div class="t" style="left:1683px;top:321.5px;font-size:16.6px;color:#f2f2f2">5.5 in</div>
<div class="t" style="left:1784px;top:323px;font-size:16px;color:#d0d0d0">W:</div>
<div class="f" style="left:1811px;top:315px;width:87px;height:30px"></div><div class="t" style="left:1819.5px;top:321.5px;font-size:16.6px;color:#f2f2f2">10.4 in</div>
<div class="t" style="left:1652px;top:363px;font-size:16px;color:#d0d0d0">Y:</div>
<div class="f" style="left:1675px;top:355px;width:86px;height:30px"></div><div class="t" style="left:1683px;top:361px;font-size:16.6px;color:#f2f2f2">2.5 in</div>
<div class="t" style="left:1785px;top:363px;font-size:16px;color:#d0d0d0">H:</div>
<div class="f" style="left:1811px;top:355px;width:87px;height:30px"></div><div class="t" style="left:1819.5px;top:361px;font-size:16.6px;color:#f2f2f2;letter-spacing:-.2px">4.2486 in</div>
<!-- chain broken -->
<svg style="left:1918px;top:336px" width="28" height="30" viewBox="0 0 28 30"><g fill="none" stroke="#c4c4c4" stroke-width="2.2"><path d="M9.4 12.8 V7.6 A4.6 4.6 0 0 1 18.6 7.6 V10.2"/><path d="M18.6 15.4 V20.6 A4.6 4.6 0 0 1 9.4 20.6 V17.6"/></g><path d="M2.8 3.8 L24.8 25" stroke="#535353" stroke-width="4.6"/><path d="M2.8 3.8 L24.8 25" stroke="#c4c4c4" stroke-width="1.7"/></svg>
<!-- angle -->
<svg style="left:1644px;top:399px" width="26" height="18" viewBox="0 0 26 18"><path d="M11.6 1.4 L1.4 14 H16" fill="none" stroke="#c4c4c4" stroke-width="1.5"/><path d="M7.4 7.4 A8 8 0 0 1 11.6 14" fill="none" stroke="#c4c4c4" stroke-width="1.2"/><circle cx="21.6" cy="7.4" r="1.1" fill="#c4c4c4"/><circle cx="21.6" cy="13.6" r="1.1" fill="#c4c4c4"/></svg>
<div class="f" style="left:1681px;top:395px;width:86px;height:31px"></div>
<div class="a" style="left:1739px;top:396px;width:27px;height:29px;background:#4b4b4b;border-radius:0 3px 3px 0"></div><div class="dv" style="left:1738px;top:396px;height:29px"></div>
<div class="t" style="left:1686px;top:401.5px;font-size:16.6px;color:#f2f2f2">0°</div>
<svg style="left:1745px;top:407px" width="13" height="8" viewBox="0 0 13 8"><path d="M1 1 L6.5 6.5 L12 1" fill="none" stroke="#e8e8e8" stroke-width="1.7"/></svg>
<!-- flips -->
<svg style="left:1831px;top:402px" width="23" height="20" viewBox="0 0 23 20"><path d="M1.4 3.6 V16.4 L7.6 10 Z" fill="none" stroke="#c4c4c4" stroke-width="1.4"/><path d="M21.6 2.4 V17.6 L13.6 10 Z" fill="#c4c4c4"/><path d="M10.6 0 V20" stroke="#c4c4c4" stroke-width="1.2" stroke-dasharray="1.4 1.4"/></svg>
<svg style="left:1870px;top:401px" width="20" height="23" viewBox="0 0 20 23"><path d="M2.4 1.4 H17.6 L10 9.4 Z" fill="#c4c4c4"/><path d="M3.6 21.6 H16.4 L10 15.4 Z" fill="none" stroke="#c4c4c4" stroke-width="1.4"/><path d="M0 12.4 H20" stroke="#c4c4c4" stroke-width="1.2" stroke-dasharray="1.4 1.4"/></svg>
<div class="a more" style="left:1926px;top:440.5px"></div>
<div class="hl" style="left:1591px;top:457px;width:367px"></div>
<div class="t" style="left:1606px;top:479px;font-size:16.4px;color:#d6d6d6">Appearance</div>
<!-- fill -->
<div class="a" style="left:1606px;top:515px;width:28px;height:28px;background:#535353;border:1.5px solid #2e2e2e"></div>
<div class="t" style="left:1614px;top:519px;font-size:20px;color:#ececec">?</div>
<div class="t" style="left:1652.5px;top:523px;font-size:16.4px;color:#d6d6d6">Fill</div>
<!-- stroke -->
<svg style="left:1606px;top:561px" width="28" height="27" viewBox="0 0 28 27"><rect x=".6" y=".6" width="26.8" height="25.8" fill="#fff" stroke="#2e2e2e" stroke-width="1.2"/><rect x="8.8" y="8.4" width="10.4" height="10.2" fill="#5c5c5c" stroke="#363636" stroke-width="2"/><path d="M1.6 25.4 L26.4 1.8" stroke="#ea3a30" stroke-width="2.6"/></svg>
<div class="t" style="left:1652.5px;top:565.5px;font-size:16.6px;color:#f0f0f0"><span class="u">Stroke</span></div>
<div class="f" style="left:1734px;top:559px;width:108px;height:31px"></div>
<div class="a" style="left:1735px;top:560px;width:27px;height:29px;background:#4b4b4b;border-radius:3px 0 0 3px"></div><div class="a" style="left:1814px;top:560px;width:27px;height:29px;background:#4b4b4b;border-radius:0 3px 3px 0"></div>
<div class="dv" style="left:1762px;top:560px;height:29px"></div><div class="dv" style="left:1813px;top:560px;height:29px"></div>
<svg style="left:1742px;top:563px" width="13" height="23" viewBox="0 0 13 23"><path d="M1 7 L6.5 1.5 L12 7 M1 16 L6.5 21.5 L12 16" fill="none" stroke="#e2e2e2" stroke-width="1.6"/></svg>
<svg style="left:1820px;top:571px" width="13" height="8" viewBox="0 0 13 8"><path d="M1 1 L6.5 6.5 L12 1" fill="none" stroke="#e8e8e8" stroke-width="1.7"/></svg>
<!-- opacity -->
<svg style="left:1607px;top:607px" width="26" height="26" viewBox="0 0 26 26"><rect x=".7" y=".7" width="24.6" height="24.6" fill="#6e6e6e" stroke="#a0a0a0" stroke-width="1.4"/><g fill="#585858"><rect x="1.4" y="1.4" width="5.8" height="5.8"/><rect x="13" y="1.4" width="5.8" height="5.8"/><rect x="7.2" y="7.2" width="5.8" height="5.8"/><rect x="18.8" y="7.2" width="5.8" height="5.8"/><rect x="1.4" y="13" width="5.8" height="5.8"/><rect x="13" y="13" width="5.8" height="5.8"/><rect x="7.2" y="18.8" width="5.8" height="5.8"/><rect x="18.8" y="18.8" width="5.8" height="5.8"/></g></svg>
<div class="t" style="left:1652.5px;top:610px;font-size:16.6px;color:#f0f0f0"><span class="u">Opacity</span></div>
<div class="f" style="left:1734px;top:604px;width:108px;height:31px"></div>
<div class="a" style="left:1814px;top:605px;width:27px;height:29px;background:#4b4b4b;border-radius:0 3px 3px 0"></div><div class="dv" style="left:1813px;top:605px;height:29px"></div>
<div class="t" style="left:1741px;top:610.5px;font-size:15.6px;color:#f2f2f2">100%</div>
<svg style="left:1823px;top:612px" width="8" height="14" viewBox="0 0 8 14"><path d="M1 1 L6.5 7 L1 13" fill="none" stroke="#e8e8e8" stroke-width="1.7"/></svg>
<div class="t" style="left:1616px;top:660px;font-size:22px;font-style:italic;color:#d0d0d0;font-family:'Liberation Sans',sans-serif">fx</div>
<svg style="left:1635px;top:677px" width="5" height="3" viewBox="0 0 5 3"><path d="M0 0 H5 L2.5 3 Z" fill="#d0d0d0"/></svg>
<div class="a more" style="left:1926px;top:705.5px"></div>
<div class="hl" style="left:1591px;top:722px;width:367px"></div>
<div class="t" style="left:1606px;top:743.5px;font-size:17.3px;color:#d6d6d6">Align</div>
<!-- align icons -->
<svg style="left:1600px;top:780px" width="340" height="36" viewBox="1600 780 340 36"><g fill="#c4c4c4">
<rect x="1613.8" y="789.2" width="18.6" height="18.6" fill="none" stroke="#b4b4b4" stroke-width="1"/>
<g><rect x="1612.2" y="787.6" width="3.2" height="3.2"/><rect x="1621.5" y="787.6" width="3.2" height="3.2"/><rect x="1630.8" y="787.6" width="3.2" height="3.2"/><rect x="1612.2" y="796.9" width="3.2" height="3.2"/><rect x="1621.5" y="796.9" width="3.2" height="3.2"/><rect x="1630.8" y="796.9" width="3.2" height="3.2"/><rect x="1612.2" y="806.2" width="3.2" height="3.2"/><rect x="1621.5" y="806.2" width="3.2" height="3.2"/><rect x="1630.8" y="806.2" width="3.2" height="3.2"/></g>
<path d="M1637.6 797.4 L1642.4 802.2 L1647.2 797.4" fill="none" stroke="#c4c4c4" stroke-width="1.4"/>
<!-- left -->
<rect x="1668.6" y="783.6" width="1.7" height="28.4"/><rect x="1672.6" y="787.4" width="12" height="8.4"/><rect x="1672.6" y="799.6" width="20.6" height="8.4"/>
<!-- hcenter -->
<rect x="1726.8" y="783.6" width="1.6" height="28.4"/><rect x="1720.6" y="787.4" width="14" height="8.4"/><rect x="1717" y="799.6" width="21.2" height="8.4"/>
<!-- right -->
<rect x="1785.8" y="783.6" width="1.7" height="28.4"/><rect x="1771.4" y="787.4" width="12" height="8.4"/><rect x="1763.2" y="799.6" width="20.2" height="8.4"/>
<!-- top -->
<rect x="1807.2" y="785.2" width="28" height="1.7"/><rect x="1811.4" y="789" width="8" height="19.6"/><rect x="1823.4" y="789" width="8.4" height="11.4"/>
<!-- vcenter -->
<rect x="1852.8" y="796.8" width="28.4" height="1.6"/><rect x="1857.6" y="787" width="8" height="20.8"/><rect x="1869.8" y="790.4" width="8" height="14.6"/>
<!-- bottom -->
<rect x="1899.6" y="809.4" width="28" height="1.7"/><rect x="1903.8" y="787.4" width="8" height="20"/><rect x="1915.6" y="795.4" width="8.4" height="12"/>
</g></svg>
<div class="a more" style="left:1926px;top:835.5px"></div>
<div class="hl" style="left:1591px;top:852px;width:367px"></div>
<div class="t" style="left:1606px;top:873.5px;font-size:16.7px;color:#d6d6d6">Pathfinder</div>
<svg style="left:1610px;top:912px" width="180" height="32" viewBox="1610 912 180 32"><g fill="#c4c4c4">
<rect x="1615" y="917" width="15.4" height="15.4"/><rect x="1622.4" y="924.4" width="15.4" height="15.4"/>
<rect x="1663.4" y="917" width="15.4" height="15.4"/><rect x="1671.4" y="925" width="13.6" height="13.6" fill="#535353" stroke="#c4c4c4" stroke-width="1.6"/>
<rect x="1711.6" y="917.6" width="14" height="14" fill="none" stroke="#c4c4c4" stroke-width="1.6"/><rect x="1719" y="925" width="14" height="14" fill="none" stroke="#c4c4c4" stroke-width="1.6"/><rect x="1719" y="925" width="6.6" height="6.6"/>
<rect x="1759" y="917" width="15.4" height="15.4"/><rect x="1766" y="924" width="15.4" height="15.4"/><rect x="1766.8" y="924.8" width="6" height="6" fill="#535353"/>
</g></svg>
<div class="a" style="left:1856px;top:901px;width:98px;height:32px;background:#5b5b5b;border-radius:4px"></div>
<div class="t" style="left:1877.5px;top:909.5px;font-size:16px;color:#868686">Expand</div>
<div class="a more" style="left:1926px;top:948.5px"></div>
<div class="hl" style="left:1591px;top:968.5px;width:367px"></div>
<div class="t" style="left:1606px;top:997px;font-size:17px;color:#d6d6d6">Quick Actions</div>
<div class="a" style="left:1606px;top:1032px;width:168px;height:32px;border:1.5px solid #7c7c7c;border-radius:4px;background:#535353"></div>
<div class="t" style="left:1666.5px;top:1040px;font-size:16.6px;color:#f2f2f2">Group</div>
<div class="a" style="left:1789px;top:1032px;width:168px;height:32px;border:1.5px solid #7c7c7c;border-radius:4px;background:#535353"></div>
<div class="t" style="left:1845px;top:1040px;font-size:16.3px;color:#f2f2f2">Recolor</div>
<!-- swatches -->
<div class="a" id="art" style="left:133px;top:200px;width:1368px;height:1472px;overflow:hidden"><div class="a" style="left:-133px;top:-200px;width:2048px;height:1786px">
<svg style="left:191.4px;top:257.1px;overflow:hidden" width="267.8" height="267.8" viewBox="0 0 267.8 267.8"><rect width="268" height="268" fill="#fff"/><g id="t1"><path d="M128.6 -3.2 Q129 28.2 159.4 36.2 Q159 4.8 128.6 -3.2 Z" fill="#c8c8c8"/><path d="M131.7 0.7 L156.3 32.3M135.7 7.5 l-0.1 3.5M137.3 6.3 l3.4 0.7M139.8 12.7 l-0.1 3.5M141.4 11.6 l3.4 0.7M143.9 18 l-0.1 3.5M145.5 16.8 l3.4 0.7M148.1 23.3 l-0.1 3.5M149.6 22.1 l3.4 0.7M152.2 28.5 l-0.1 3.5M153.7 27.3 l3.4 0.7" stroke="#e9e9e9" stroke-width="1" fill="none" stroke-linecap="round"/><path d="M139.6 110.3 Q120 96 90 51.8" stroke="#c8c8c8" stroke-width="1.6" fill="none" stroke-linecap="round"/><path d="M131.2 101.4 L130.1 88.4M129.4 103.4 L116.3 103.1M124.1 94.2 L123.9 82.1M122.2 96 L110.1 94.9M116.5 85.4 L116.9 74.2M114.5 87.1 L103.4 85.5M108.3 75.1 L109.1 64.9M106.3 76.7 L96.2 74.8M99.6 63.2 L100.6 54M97.5 64.8 L88.4 62.8M90 51.8 L85 44.3" stroke="#c8c8c8" stroke-width="6.5" fill="none" stroke-linecap="round"/><path d="M49.5 162.1 Q70.5 135.1 96.8 96" stroke="#c8c8c8" stroke-width="1.8" fill="none" stroke-linecap="round"/><path d="M55.3 156.7 L61.2 157.2M53.2 155.1 L51.1 149.5M60.2 150.2 L65.8 150.6M58.1 148.6 L56.1 143.3M65.3 143.4 L70.6 143.8M63.2 141.8 L61.2 136.9M70.5 136.2 L75.4 136.6M68.3 134.7 L66.4 130.1M75.8 128.8 L80.4 129.1M73.6 127.3 L71.8 123M81.2 121.1 L85.5 121.3M79.1 119.6 L77.4 115.6M86.8 113.1 L90.8 113.2M84.6 111.6 L83 107.9M92.5 104.7 L96.2 104.9M90.3 103.2 L88.8 99.9M96.8 96 L99.3 92.3" stroke="#c8c8c8" stroke-width="5.2" fill="none" stroke-linecap="round"/><path d="M75 159.1 Q84 142.6 81.8 120" stroke="#c8c8c8" stroke-width="1.4" fill="none" stroke-linecap="round"/><path d="M78.6 153.7 L82.9 152.8M76.9 153 L74.5 149.3M80.4 148.6 L84.1 147.4M78.6 148 L76.3 145M81.8 143.2 L84.9 141.9M79.9 142.8 L77.7 140.3M82.7 137.6 L85.2 136.2M80.8 137.3 L78.7 135.4M83.1 131.7 L85.1 130.4M81.3 131.6 L79.4 130.2M83.1 125.6 L84.6 124.5M81.2 125.7 L79.7 124.6M81.8 120 L81.5 116.8" stroke="#c8c8c8" stroke-width="3.8" fill="none" stroke-linecap="round"/><path d="M108.8 49.5 Q97.5 40.5 84 28.5" stroke="#c8c8c8" stroke-width="1.3" fill="none" stroke-linecap="round"/><path d="M105.4 45.9 L105.8 40.8M104.5 47 L99.6 48.4M101.4 42.6 L101.8 38.1M100.5 43.7 L96.2 44.8M97.3 39.1 L97.7 35.3M96.4 40.2 L92.7 41.2M93 35.4 L93.4 32.4M92.1 36.5 L89.1 37.3M88.7 31.6 L88.9 29.2M87.7 32.7 L85.4 33.3M84 28.5 L81.3 26.1" stroke="#c8c8c8" stroke-width="3" fill="none" stroke-linecap="round"/><path d="M158.3 93 Q139.6 78 130.6 45" stroke="#c8c8c8" stroke-width="1.5" fill="none" stroke-linecap="round"/><path d="M154.9 88.7 L155.7 84.8M153.5 90.2 L149.6 91.2M151.1 84.7 L152.2 81.1M149.6 86 L145.9 86.7M147.6 80.3 L148.9 76.9M146 81.5 L142.4 81.8M144.3 75.4 L145.7 72.4M142.6 76.5 L139.2 76.5M141.2 70.1 L142.8 67.3M139.5 71 L136.3 70.8M138.4 64.3 L140 61.8M136.6 65.1 L133.7 64.7M135.8 58 L137.4 55.9M133.9 58.7 L131.3 58.2M133.5 51.3 L135 49.4M131.6 51.9 L129.2 51.3M130.6 45 L129.7 42" stroke="#c8c8c8" stroke-width="3.9" fill="none" stroke-linecap="round"/><path d="M86.3 74.3 Q72 88.5 54 93" stroke="#c8c8c8" stroke-width="1.4" fill="none" stroke-linecap="round"/><path d="M76.2 81.7 L69.6 80.3M77.3 83.1 L76.6 89.9M70.7 85.3 L64.8 83.4M71.7 86.8 L70.5 93M65.1 88.2 L59.8 86M65.8 89.8 L64.2 95.3M59.2 90.6 L54.6 88.1M59.8 92.3 L57.8 97.1M54 93 L49.4 94.2" stroke="#c8c8c8" stroke-width="4" fill="none" stroke-linecap="round"/><path d="M90 195.8 Q100.5 187.6 108 165.1" stroke="#c8c8c8" stroke-width="1.4" fill="none" stroke-linecap="round"/><path d="M97.2 189.4 L104 188.5M95.9 188.5 L95 181.7M100.4 184.5 L106.6 183M99.1 183.7 L97.5 177.5M103.5 178.7 L109 176.8M102.1 178 L100.2 172.5M106.4 172.1 L111.2 170M104.9 171.5 L102.8 166.6M108 165.1 L109.6 160.5" stroke="#c8c8c8" stroke-width="3.8" fill="none" stroke-linecap="round"/><path d="M141.1 43.5 Q140.3 37.5 138.8 30" stroke="#c8c8c8" stroke-width="1.2" fill="none" stroke-linecap="round"/><path d="M140.8 37.8 L143.3 34.4M139.7 38 L136.3 35.5M140.1 33.7 L141.2 32.1M139 33.9 L137.4 32.8M138.8 30 L138.2 27.1" stroke="#c8c8c8" stroke-width="2.6" fill="none" stroke-linecap="round"/><path d="M165.1 213.1 Q161.3 205.6 157.6 196.6" stroke="#c8c8c8" stroke-width="1.2" fill="none" stroke-linecap="round"/><path d="M162.4 206 L164.1 201.2M161.2 206.5 L156.4 204.8M160.1 201 L161 198.8M159 201.5 L156.7 200.6M157.6 196.6 L156.2 193.3" stroke="#c8c8c8" stroke-width="3" fill="none" stroke-linecap="round"/><path d="M-4.5 148.6 Q3 139.6 9 124.5" stroke="#c8c8c8" stroke-width="1.4" fill="none" stroke-linecap="round"/><path d="M3.2 138.8 L11.4 135.9M1.7 137.9 L0.3 129.4M6.8 131.8 L13.8 128.6M5.3 131.1 L3.4 123.6M9 124.5 L11.2 119" stroke="#c8c8c8" stroke-width="4.4" fill="none" stroke-linecap="round"/><path d="M124.5 124.5 Q132.1 120 141.1 114" stroke="#c8c8c8" stroke-width="1.2" fill="none" stroke-linecap="round"/><path d="M133.3 119.7 L140.4 120M132.8 118.8 L135.5 112.3M141.1 114 L145.1 111.4" stroke="#c8c8c8" stroke-width="3" fill="none" stroke-linecap="round"/><path d="M4.5 120 Q6 96 30.8 70.5" stroke="#c8c8c8" stroke-width="1.6" fill="none"/><path d="M30 64.5 L32.3 50.3M22.5 67.5 L21 55.5M15.8 78 L13.8 66M33.8 75 L45 69M10.5 86.3 L6.8 74.6M22.5 87.8 L33.3 82.1M15.8 98.3 L26.3 93.8M9 106.8 L18.8 104" stroke="#c8c8c8" stroke-width="4.6" fill="none" stroke-linecap="round"/><g fill="#333"><circle cx="32.3" cy="50.3" r="1.7"/><circle cx="21" cy="55.5" r="1.7"/><circle cx="13.8" cy="66" r="1.7"/><circle cx="45" cy="69" r="1.7"/><circle cx="6.8" cy="74.6" r="1.7"/><circle cx="33.3" cy="82.1" r="1.7"/><circle cx="26.3" cy="93.8" r="1.7"/><circle cx="18.8" cy="104" r="1.7"/></g><path d="M50.2 68.7 Q39.1 79.4 45.8 93.3 Q56.9 82.6 50.2 68.7 Z" fill="#c8c8c8"/><g transform="translate(38.3 115.5) rotate(35)"><path d="M0 15 C-6 14 -13 10 -12 4 C-16 0 -14 -7 -9 -8 C-10 -13 -4 -16 0 -13 C4 -16 10 -13 9 -8 C14 -7 16 0 12 4 C13 10 6 14 0 15Z" fill="#c8c8c8"/><path d="M0 14V-10M0 8l-6-5M0 8l6-5M0 2l-7-5M0 2l7-5M0-4l-5-4M0-4l5-4" stroke="#ececec" stroke-width="1" fill="none"/></g><polygon points="105.2 103.2 106.5 110.1 113.4 111.6 107.2 115 107.9 122 102.8 117.1 96.3 119.9 99.3 113.6 94.7 108.3 101.7 109.2" fill="#c8c8c8"/><path d="M103 118 Q102 124 98 128" stroke="#c8c8c8" stroke-width="1.4" fill="none"/><path d="M132 131.5 Q142.2 127.3 140 116.5 Q129.8 120.7 132 131.5 Z" fill="#c8c8c8"/><path d="M125.1 124.4 Q132.6 124.8 134.9 117.6 Q127.4 117.2 125.1 124.4 Z" fill="#c8c8c8"/><path d="M150.1 177.1 Q156.1 142.6 174.1 108" stroke="#c8c8c8" stroke-width="1.3" fill="none"/><path d="M172.6 114 L169.6 101" stroke="#c8c8c8" stroke-width="1.1" fill="none"/><g transform="translate(169.6 101) rotate(-15)"><path d="M0 7.8 C-7 2.3 -9.7 -4.3 -4.6 -7.4 C-1.9 -8.9 0 -5.8 0 -3.9 C0 -5.8 1.9 -8.9 4.6 -7.4 C9.7 -4.3 7 2.3 0 7.8 Z" fill="#c8c8c8"/><g fill="#f4f4f4"><circle cx="-3.5" cy="-2.7" r="0.9"/><circle cx="0" cy="-1.2" r="0.9"/><circle cx="3.5" cy="-3.1" r="0.9"/><circle cx="-1.6" cy="1.6" r="0.9"/><circle cx="1.9" cy="1.2" r="0.9"/><circle cx="-3.9" cy="0" r="0.9"/><circle cx="0.8" cy="-4.3" r="0.9"/></g></g><path d="M172.6 114 L188 101.5" stroke="#c8c8c8" stroke-width="1.1" fill="none"/><g transform="translate(188 101.5) rotate(30)"><path d="M0 7.8 C-7 2.3 -9.7 -4.3 -4.6 -7.4 C-1.9 -8.9 0 -5.8 0 -3.9 C0 -5.8 1.9 -8.9 4.6 -7.4 C9.7 -4.3 7 2.3 0 7.8 Z" fill="#c8c8c8"/><g fill="#f4f4f4"><circle cx="-3.5" cy="-2.7" r="0.9"/><circle cx="0" cy="-1.2" r="0.9"/><circle cx="3.5" cy="-3.1" r="0.9"/><circle cx="-1.6" cy="1.6" r="0.9"/><circle cx="1.9" cy="1.2" r="0.9"/><circle cx="-3.9" cy="0" r="0.9"/><circle cx="0.8" cy="-4.3" r="0.9"/></g></g><path d="M162.8 135.1 L154.6 121.5" stroke="#c8c8c8" stroke-width="1.1" fill="none"/><g transform="translate(154.6 121.5) rotate(-35)"><path d="M0 7.8 C-7 2.3 -9.7 -4.3 -4.6 -7.4 C-1.9 -8.9 0 -5.8 0 -3.9 C0 -5.8 1.9 -8.9 4.6 -7.4 C9.7 -4.3 7 2.3 0 7.8 Z" fill="#c8c8c8"/><g fill="#f4f4f4"><circle cx="-3.5" cy="-2.7" r="0.9"/><circle cx="0" cy="-1.2" r="0.9"/><circle cx="3.5" cy="-3.1" r="0.9"/><circle cx="-1.6" cy="1.6" r="0.9"/><circle cx="1.9" cy="1.2" r="0.9"/><circle cx="-3.9" cy="0" r="0.9"/><circle cx="0.8" cy="-4.3" r="0.9"/></g></g><path d="M162.8 135.1 L181 126" stroke="#c8c8c8" stroke-width="1.1" fill="none"/><g transform="translate(181 126) rotate(40)"><path d="M0 7.8 C-7 2.3 -9.7 -4.3 -4.6 -7.4 C-1.9 -8.9 0 -5.8 0 -3.9 C0 -5.8 1.9 -8.9 4.6 -7.4 C9.7 -4.3 7 2.3 0 7.8 Z" fill="#c8c8c8"/><g fill="#f4f4f4"><circle cx="-3.5" cy="-2.7" r="0.9"/><circle cx="0" cy="-1.2" r="0.9"/><circle cx="3.5" cy="-3.1" r="0.9"/><circle cx="-1.6" cy="1.6" r="0.9"/><circle cx="1.9" cy="1.2" r="0.9"/><circle cx="-3.9" cy="0" r="0.9"/><circle cx="0.8" cy="-4.3" r="0.9"/></g></g><path d="M154.6 156.1 L146.3 145.6" stroke="#c8c8c8" stroke-width="1.1" fill="none"/><g transform="translate(146.3 145.6) rotate(-40)"><path d="M0 7.8 C-7 2.3 -9.7 -4.3 -4.6 -7.4 C-1.9 -8.9 0 -5.8 0 -3.9 C0 -5.8 1.9 -8.9 4.6 -7.4 C9.7 -4.3 7 2.3 0 7.8 Z" fill="#c8c8c8"/><g fill="#f4f4f4"><circle cx="-3.5" cy="-2.7" r="0.9"/><circle cx="0" cy="-1.2" r="0.9"/><circle cx="3.5" cy="-3.1" r="0.9"/><circle cx="-1.6" cy="1.6" r="0.9"/><circle cx="1.9" cy="1.2" r="0.9"/><circle cx="-3.9" cy="0" r="0.9"/><circle cx="0.8" cy="-4.3" r="0.9"/></g></g><path d="M154.6 156.1 L170 144" stroke="#c8c8c8" stroke-width="1.1" fill="none"/><g transform="translate(170 144) rotate(40)"><path d="M0 7.8 C-7 2.3 -9.7 -4.3 -4.6 -7.4 C-1.9 -8.9 0 -5.8 0 -3.9 C0 -5.8 1.9 -8.9 4.6 -7.4 C9.7 -4.3 7 2.3 0 7.8 Z" fill="#c8c8c8"/><g fill="#f4f4f4"><circle cx="-3.5" cy="-2.7" r="0.9"/><circle cx="0" cy="-1.2" r="0.9"/><circle cx="3.5" cy="-3.1" r="0.9"/><circle cx="-1.6" cy="1.6" r="0.9"/><circle cx="1.9" cy="1.2" r="0.9"/><circle cx="-3.9" cy="0" r="0.9"/><circle cx="0.8" cy="-4.3" r="0.9"/></g></g><path d="M177.1 257.4 Q180.1 225.1 199.6 189.1" stroke="#c8c8c8" stroke-width="1.3" fill="none"/><path d="M198.8 193.6 L193.6 183" stroke="#c8c8c8" stroke-width="1.1" fill="none"/><g transform="translate(193.6 183) rotate(-10)"><path d="M0 7.8 C-7 2.3 -9.7 -4.3 -4.6 -7.4 C-1.9 -8.9 0 -5.8 0 -3.9 C0 -5.8 1.9 -8.9 4.6 -7.4 C9.7 -4.3 7 2.3 0 7.8 Z" fill="#c8c8c8"/><g fill="#f4f4f4"><circle cx="-3.5" cy="-2.7" r="0.9"/><circle cx="0" cy="-1.2" r="0.9"/><circle cx="3.5" cy="-3.1" r="0.9"/><circle cx="-1.6" cy="1.6" r="0.9"/><circle cx="1.9" cy="1.2" r="0.9"/><circle cx="-3.9" cy="0" r="0.9"/><circle cx="0.8" cy="-4.3" r="0.9"/></g></g><path d="M198.8 193.6 L213 186" stroke="#c8c8c8" stroke-width="1.1" fill="none"/><g transform="translate(213 186) rotate(35)"><path d="M0 7.8 C-7 2.3 -9.7 -4.3 -4.6 -7.4 C-1.9 -8.9 0 -5.8 0 -3.9 C0 -5.8 1.9 -8.9 4.6 -7.4 C9.7 -4.3 7 2.3 0 7.8 Z" fill="#c8c8c8"/><g fill="#f4f4f4"><circle cx="-3.5" cy="-2.7" r="0.9"/><circle cx="0" cy="-1.2" r="0.9"/><circle cx="3.5" cy="-3.1" r="0.9"/><circle cx="-1.6" cy="1.6" r="0.9"/><circle cx="1.9" cy="1.2" r="0.9"/><circle cx="-3.9" cy="0" r="0.9"/><circle cx="0.8" cy="-4.3" r="0.9"/></g></g><path d="M188.3 213.1 L180 202.6" stroke="#c8c8c8" stroke-width="1.1" fill="none"/><g transform="translate(180 202.6) rotate(-35)"><path d="M0 7.8 C-7 2.3 -9.7 -4.3 -4.6 -7.4 C-1.9 -8.9 0 -5.8 0 -3.9 C0 -5.8 1.9 -8.9 4.6 -7.4 C9.7 -4.3 7 2.3 0 7.8 Z" fill="#c8c8c8"/><g fill="#f4f4f4"><circle cx="-3.5" cy="-2.7" r="0.9"/><circle cx="0" cy="-1.2" r="0.9"/><circle cx="3.5" cy="-3.1" r="0.9"/><circle cx="-1.6" cy="1.6" r="0.9"/><circle cx="1.9" cy="1.2" r="0.9"/><circle cx="-3.9" cy="0" r="0.9"/><circle cx="0.8" cy="-4.3" r="0.9"/></g></g><path d="M188.3 213.1 L205.6 205.6" stroke="#c8c8c8" stroke-width="1.1" fill="none"/><g transform="translate(205.6 205.6) rotate(40)"><path d="M0 7.8 C-7 2.3 -9.7 -4.3 -4.6 -7.4 C-1.9 -8.9 0 -5.8 0 -3.9 C0 -5.8 1.9 -8.9 4.6 -7.4 C9.7 -4.3 7 2.3 0 7.8 Z" fill="#c8c8c8"/><g fill="#f4f4f4"><circle cx="-3.5" cy="-2.7" r="0.9"/><circle cx="0" cy="-1.2" r="0.9"/><circle cx="3.5" cy="-3.1" r="0.9"/><circle cx="-1.6" cy="1.6" r="0.9"/><circle cx="1.9" cy="1.2" r="0.9"/><circle cx="-3.9" cy="0" r="0.9"/><circle cx="0.8" cy="-4.3" r="0.9"/></g></g><path d="M180.1 237.1 L171 228" stroke="#c8c8c8" stroke-width="1.1" fill="none"/><g transform="translate(171 228) rotate(-40)"><path d="M0 7.8 C-7 2.3 -9.7 -4.3 -4.6 -7.4 C-1.9 -8.9 0 -5.8 0 -3.9 C0 -5.8 1.9 -8.9 4.6 -7.4 C9.7 -4.3 7 2.3 0 7.8 Z" fill="#c8c8c8"/><g fill="#f4f4f4"><circle cx="-3.5" cy="-2.7" r="0.9"/><circle cx="0" cy="-1.2" r="0.9"/><circle cx="3.5" cy="-3.1" r="0.9"/><circle cx="-1.6" cy="1.6" r="0.9"/><circle cx="1.9" cy="1.2" r="0.9"/><circle cx="-3.9" cy="0" r="0.9"/><circle cx="0.8" cy="-4.3" r="0.9"/></g></g><path d="M180.1 237.1 L195 226.6" stroke="#c8c8c8" stroke-width="1.1" fill="none"/><g transform="translate(195 226.6) rotate(40)"><path d="M0 7.8 C-7 2.3 -9.7 -4.3 -4.6 -7.4 C-1.9 -8.9 0 -5.8 0 -3.9 C0 -5.8 1.9 -8.9 4.6 -7.4 C9.7 -4.3 7 2.3 0 7.8 Z" fill="#c8c8c8"/><g fill="#f4f4f4"><circle cx="-3.5" cy="-2.7" r="0.9"/><circle cx="0" cy="-1.2" r="0.9"/><circle cx="3.5" cy="-3.1" r="0.9"/><circle cx="-1.6" cy="1.6" r="0.9"/><circle cx="1.9" cy="1.2" r="0.9"/><circle cx="-3.9" cy="0" r="0.9"/><circle cx="0.8" cy="-4.3" r="0.9"/></g></g><path d="M45.4 35.7 Q39.5 63.4 67.2 69.3 Q73.1 41.6 45.4 35.7 Z" fill="#aaa"/><path d="M48.1 39.9 L64.5 65.1M51.2 46.4 l-0.4 3.5M52.8 45.4 l3.3 1M54.5 51.5 l-0.4 3.5M56.1 50.4 l3.3 1M57.8 56.5 l-0.4 3.5M59.4 55.5 l3.3 1M61 61.5 l-0.4 3.5M62.6 60.5 l3.3 1" stroke="#333" stroke-width="0.9" fill="none" stroke-linecap="round"/><path d="M48 37.5 Q43.5 28.5 45 24" stroke="#aaa" stroke-width="1.6" fill="none"/><path d="M63 39.3 Q70.7 51.6 84 45.7 Q76.3 33.4 63 39.3 Z" fill="#aaa"/><path d="M49.5 32.3 L63 41.3" stroke="#aaa" stroke-width="1.5"/><g transform="translate(114 19.5) rotate(-32) scale(1.22)"><path d="M0 16 C-6 14 -13 10 -12 4 C-16 0 -14 -7 -9 -8 C-10 -13 -4 -16 0 -13 C4 -16 10 -13 9 -8 C14 -7 16 0 12 4 C13 10 6 14 0 15Z" fill="#aaa"/><path d="M0 14V-10M-2 8l-5-3M2 8l5-3M-2 3l-6-3M2 3l6-3M-2-3l-5-3M2-3l5-3M-2-8l-3-2M2-8l3-2" stroke="#333" stroke-width=".8" fill="none"/></g><path d="M147.9 46.4 Q147.6 81.1 182.1 85.6 Q182.4 50.9 147.9 46.4 Z" fill="#aaa"/><path d="M151.9 50.9 L178.1 81.1M156.3 57.4 l0.1 3.5M157.7 56.2 l3.5 0.5M160.7 62.5 l0.1 3.5M162.1 61.2 l3.5 0.5M165 67.5 l0.1 3.5M166.5 66.2 l3.5 0.5M169.4 72.5 l0.1 3.5M170.9 71.3 l3.5 0.5M173.8 77.6 l0.1 3.5M175.2 76.3 l3.5 0.5" stroke="#333" stroke-width="0.9" fill="none" stroke-linecap="round"/><path d="M182.3 84 Q183.8 87.8 186.8 89.3" stroke="#aaa" stroke-width="1.3" fill="none"/><g transform="translate(146.3 101.3) rotate(-30) scale(.5)"><path d="M0 16 C-6 14 -13 10 -12 4 C-16 0 -14 -7 -9 -8 C-10 -13 -4 -16 0 -13 C4 -16 10 -13 9 -8 C14 -7 16 0 12 4 C13 10 6 14 0 15Z" fill="#999"/><path d="M0 14V-10M-2 8l-5-3M2 8l5-3M-2 3l-6-3M2 3l6-3M-2-3l-5-3M2-3l5-3" stroke="#333" stroke-width="1.4" fill="none"/></g><path d="M55.5 219.1 Q56.3 195.1 55.5 166.6" stroke="#aaa" stroke-width="1.8" fill="none" stroke-linecap="round"/><path d="M57.1 205.9 L62 202.6M54.5 205.9 L49.7 202.4M57.2 196.3 L61.7 193.2M54.6 196.3 L50.1 193.1M57.2 186.4 L61.4 183.4M54.5 186.4 L50.3 183.5M57.1 176.1 L60.9 173.4M54.4 176.2 L50.5 173.5M55.5 166.6 L55.4 162.1" stroke="#aaa" stroke-width="5.4" fill="none" stroke-linecap="round"/><path d="M57.8 210.1 Q67.5 187.6 90 162.1" stroke="#aaa" stroke-width="1.8" fill="none" stroke-linecap="round"/><path d="M66.4 196.1 L72.7 195.2M64.1 194.7 L61.8 188.9M71.6 187.9 L77.5 187.4M69.4 186.4 L67.5 180.8M77.5 179.5 L83 179.4M75.4 177.9 L73.9 172.6M84.2 170.9 L89.3 171M82.2 169.3 L81 164.3M90 162.1 L93.2 158.5" stroke="#aaa" stroke-width="5.6" fill="none" stroke-linecap="round"/><path d="M80.1 191.1 Q73.9 208.3 87.9 220.1 Q94.1 202.9 80.1 191.1 Z" fill="#aaa"/><path d="M80.9 194 L87.1 217.2M81.5 200 l-1.1 2.3M83.4 199.5 l2 1.4M82.7 204.6 l-1.1 2.3M84.6 204.1 l2 1.4M84 209.3 l-1.1 2.3M85.8 208.8 l2 1.4M85.2 213.9 l-1.1 2.3M87.1 213.4 l2 1.4" stroke="#333" stroke-width="0.8" fill="none" stroke-linecap="round"/><path d="M-13.5 64.5 Q19.5 45 32.3 -10.5" stroke="#333" stroke-width="2" fill="none" stroke-linecap="round"/><path d="M-8.5 62.6 L-4 64.7M-9.7 60.8 L-10.1 55.9M-3.1 58.5 L1.3 60.2M-4.5 56.8 L-5.3 52.1M1.9 53.9 L6.3 55.2M0.3 52.3 L-0.8 47.9M6.6 48.8 L11 49.6M4.9 47.4 L3.5 43.2M11 43.2 L15.3 43.6M9.2 41.9 L7.5 37.9M15.1 37 L19.3 37.2M13.3 35.8 L11.3 32.2M19 30.3 L22.9 30.2M17 29.3 L14.9 25.9M22.5 23.1 L26.3 22.8M20.4 22.2 L18.2 19.1M25.7 15.4 L29.3 14.8M23.6 14.6 L21.3 11.7M28.6 7.2 L32 6.4M26.5 6.5 L24.1 3.8M31.2 -1.6 L34.4 -2.4M29 -2.2 L26.7 -4.6M32.3 -10.5 L33.1 -14.1" stroke="#333" stroke-width="4.3" fill="none" stroke-linecap="round"/><path d="M72.8 32.3 Q72.8 19.5 72.8 7.5" stroke="#333" stroke-width="1.5" fill="none" stroke-linecap="round"/><path d="M73.6 26.7 L77 24.5M72 26.7 L68.5 24.5M73.6 22.7 L76.6 20.8M72 22.7 L69 20.8M73.6 18.7 L76.2 17.1M72 18.7 L69.4 17.1M73.6 14.8 L75.7 13.4M72 14.8 L69.8 13.4M73.6 10.9 L75.3 9.8M72 10.9 L70.2 9.8M72.8 7.5 L72.8 4.5" stroke="#333" stroke-width="3.2" fill="none" stroke-linecap="round"/><polygon points="78.2 52.9 79.3 57.3 83.8 58.3 79.9 60.7 80.4 65.2 76.9 62.3 72.7 64.1 74.4 59.9 71.4 56.5 75.9 56.8" fill="#333"/><path d="M77.6 63 l1.2 6" stroke="#333" stroke-width="1.3"/><path d="M30.5 135.8 Q33.2 151 45 148.3 Q34.7 156.7 42 171.8 Q28.3 163 11.7 172.6 Q21.7 156.3 6.8 148.9 Q22.8 152 30.5 135.8 Z" fill="#333" stroke="#333" stroke-width="1.2" stroke-linejoin="round"/><path d="M27.8 165.1 Q25.5 177.1 30.5 186.8" stroke="#333" stroke-width="3.2" fill="none" stroke-linecap="round"/><path d="M142.6 183.8 Q111 162.1 112.5 127.6" stroke="#333" stroke-width="1.9" fill="none" stroke-linecap="round"/><path d="M137.9 179.1 L138.5 174.9M136.6 180.7 L132.7 182.3M131.8 173.7 L132.8 169.8M130.4 175.2 L126.5 176.3M126.6 168 L127.9 164.4M125 169.3 L121.2 169.9M122.3 162 L123.9 158.7M120.5 163.1 L116.9 163.3M118.8 155.6 L120.8 152.8M117 156.5 L113.5 156.2M116.2 149 L118.4 146.5M114.3 149.6 L111.1 148.9M114.5 142 L116.8 140M112.5 142.4 L109.6 141.4M113.6 134.6 L116 133.1M111.6 134.8 L109 133.5M112.5 127.6 L112.7 124.3" stroke="#333" stroke-width="4" fill="none" stroke-linecap="round"/><path d="M159.8 189.8 Q172.6 169.6 196.6 154.6" stroke="#333" stroke-width="2" fill="none" stroke-linecap="round"/><path d="M165.3 184 L171.1 184.4M163.4 182.5 L161.3 177.2M169.6 178.7 L175 179.5M167.8 177.1 L166.1 171.9M174.4 173.6 L179.5 174.7M172.6 171.9 L171.4 166.8M179.6 168.7 L184.3 170M178 166.8 L177.1 162M185.2 164 L189.6 165.5M183.7 162.1 L183.2 157.5M191.3 159.5 L195.3 161.2M189.9 157.5 L189.7 153.2M196.6 154.6 L200.2 152.3" stroke="#333" stroke-width="4.8" fill="none" stroke-linecap="round"/></g><use href="#t1" x="-201" y="-201"/><use href="#t1" x="0" y="-201"/><use href="#t1" x="201" y="-201"/><use href="#t1" x="-201" y="0"/><use href="#t1" x="201" y="0"/><use href="#t1" x="-201" y="201"/><use href="#t1" x="0" y="201"/><use href="#t1" x="201" y="201"/></svg>
<svg style="left:472.6px;top:257.1px;overflow:hidden" width="267.8" height="267.8" viewBox="0 0 267.8 267.8"><rect width="268" height="268" fill="#fff"/><g id="t2"><path d="M34.7 10.5 Q33.6 21.1 43.3 25.5 Q44.4 14.9 34.7 10.5 Z" fill="#cfcfcf"/><path d="M35.6 12 L42.5 24M37 16.5 l-0.3 2M38.7 15.5 l1.9 0.7M38.8 19.5 l-0.3 2M40.4 18.5 l1.9 0.7M40.5 22.5 l-0.3 2M42.2 21.5 l1.9 0.7" stroke="#444" stroke-width="0.6" fill="none" stroke-linecap="round"/><path d="M44.1 14.7 Q47.4 18.7 52.5 17.7 Q49.2 13.7 44.1 14.7 Z" fill="#cfcfcf"/><path d="M95 34.1 Q104.6 32.5 106.1 22.9 Q96.5 24.5 95 34.1 Z" fill="#cfcfcf"/><path d="M96.1 33 L105 24.1M99.8 30.6 l2 -0.2M98.4 29.2 l0.2 -2M102 28.4 l2 -0.2M100.7 27 l0.2 -2M104.3 26.2 l2 -0.2M102.9 24.8 l0.2 -2" stroke="#444" stroke-width="0.6" fill="none" stroke-linecap="round"/><path d="M142.4 10.3 Q151.7 10.4 154.7 1.7 Q145.5 1.6 142.4 10.3 Z" fill="#cfcfcf"/><path d="M143.6 9.4 L153.5 2.6M147.6 7.9 l2 0.2M146.5 6.3 l0.5 -1.9M150.1 6.1 l2 0.2M148.9 4.6 l0.5 -1.9M152.5 4.4 l2 0.2M151.4 2.8 l0.5 -1.9" stroke="#444" stroke-width="0.6" fill="none" stroke-linecap="round"/><path d="M134.4 52.7 Q143.1 48.4 141.8 38.8 Q133 43.1 134.4 52.7 Z" fill="#cfcfcf"/><path d="M135.1 51.3 L141 40.2M138 48 l1.9 -0.7M136.3 47.1 l-0.4 -2M139.4 45.2 l1.9 -0.7M137.7 44.3 l-0.4 -2M140.9 42.4 l1.9 -0.7M139.2 41.5 l-0.4 -2" stroke="#444" stroke-width="0.6" fill="none" stroke-linecap="round"/><path d="M137.3 54.4 Q143.4 54.5 146.4 49.1 Q140.2 49 137.3 54.4 Z" fill="#cfcfcf"/><path d="M29.4 66.7 Q27.8 78.2 38.2 83.3 Q39.7 71.9 29.4 66.7 Z" fill="#cfcfcf"/><path d="M30.2 68.4 L37.3 81.7M31.7 73.2 l-0.4 2M33.4 72.3 l1.9 0.7M33.5 76.5 l-0.4 2M35.2 75.6 l1.9 0.7M35.2 79.8 l-0.4 2M36.9 78.9 l1.9 0.7" stroke="#444" stroke-width="0.6" fill="none" stroke-linecap="round"/><path d="M38 69.8 Q41.4 74.9 47.5 74.2 Q44.1 69.2 38 69.8 Z" fill="#cfcfcf"/><path d="M75.7 100.3 Q88 91.3 83.4 76.8 Q71.1 85.8 75.7 100.3 Z" fill="#cfcfcf"/><path d="M76.5 98 L82.6 79.1M79.3 92.5 l1.7 -1.1M77.4 91.9 l-0.7 -1.9M80.8 87.7 l1.7 -1.1M79 87.1 l-0.7 -1.9M82.3 83 l1.7 -1.1M80.5 82.4 l-0.7 -1.9" stroke="#444" stroke-width="0.6" fill="none" stroke-linecap="round"/><path d="M1.2 113.8 Q10.1 111.5 10.8 102.3 Q1.9 104.6 1.2 113.8 Z" fill="#cfcfcf"/><path d="M2.1 112.6 L9.9 103.4M5.6 110.1 l2 -0.3M4.1 108.8 l0 -2M7.5 107.8 l2 -0.3M6 106.5 l0 -2M9.4 105.5 l2 -0.3M7.9 104.2 l0 -2" stroke="#444" stroke-width="0.6" fill="none" stroke-linecap="round"/><path d="M11.1 133.3 Q20.3 128.8 18.9 118.8 Q9.8 123.3 11.1 133.3 Z" fill="#cfcfcf"/><path d="M11.9 131.9 L18.1 120.2M14.8 128.4 l1.9 -0.7M13.1 127.5 l-0.4 -2M16.4 125.5 l1.9 -0.7M14.7 124.6 l-0.4 -2M17.9 122.6 l1.9 -0.7M16.2 121.7 l-0.4 -2" stroke="#444" stroke-width="0.6" fill="none" stroke-linecap="round"/><path d="M13.9 134.9 Q20.4 135 23.6 129.2 Q17.1 129.1 13.9 134.9 Z" fill="#cfcfcf"/><path d="M74.1 116 Q71.9 127.4 82 133 Q84.2 121.7 74.1 116 Z" fill="#cfcfcf"/><path d="M74.9 117.7 L81.2 131.3M76.1 122.6 l-0.5 1.9M77.8 121.8 l1.8 0.8M77.6 126 l-0.5 1.9M79.4 125.2 l1.8 0.8M79.2 129.4 l-0.5 1.9M81 128.6 l1.8 0.8" stroke="#444" stroke-width="0.6" fill="none" stroke-linecap="round"/><path d="M110.7 125.9 Q109.3 136.5 118.8 141.2 Q120.3 130.6 110.7 125.9 Z" fill="#cfcfcf"/><path d="M111.6 127.5 L118 139.6M112.9 132 l-0.4 2M114.6 131.1 l1.9 0.7M114.5 135 l-0.4 2M116.2 134.1 l1.9 0.7M116.1 138.1 l-0.4 2M117.8 137.2 l1.9 0.7" stroke="#444" stroke-width="0.6" fill="none" stroke-linecap="round"/><path d="M116.6 128.7 Q119.9 132.8 125 131.8 Q121.7 127.7 116.6 128.7 Z" fill="#cfcfcf"/><path d="M154.4 155.3 Q169.1 151 169.7 135.8 Q155 140.1 154.4 155.3 Z" fill="#cfcfcf"/><path d="M156 153.4 L168.2 137.8M160.5 149.1 l2 -0.4M159 148 l-0.1 -2M163.5 145.2 l2 -0.4M162 144.1 l-0.1 -2M166.6 141.3 l2 -0.4M165.1 140.2 l-0.1 -2" stroke="#444" stroke-width="0.6" fill="none" stroke-linecap="round"/><path d="M185.1 80.5 Q188.1 92.6 200.6 93.5 Q197.5 81.4 185.1 80.5 Z" fill="#cfcfcf"/><path d="M186.6 81.8 L199 92.2M190 85.9 l0.3 2M191.2 84.4 l2 0M193.1 88.5 l0.3 2M194.3 87 l2 0M196.2 91.1 l0.3 2M197.4 89.6 l2 0" stroke="#444" stroke-width="0.6" fill="none" stroke-linecap="round"/><path d="M198.7 114.1 Q209.2 112.4 210.9 101.9 Q200.4 103.7 198.7 114.1 Z" fill="#cfcfcf"/><path d="M200 112.9 L209.7 103.2M203.9 110.4 l2 -0.2M202.5 109 l0.2 -2M206.3 107.9 l2 -0.2M205 106.5 l0.2 -2M208.8 105.5 l2 -0.2M207.4 104.1 l0.2 -2" stroke="#444" stroke-width="0.6" fill="none" stroke-linecap="round"/><path d="M194.6 35.7 Q196.9 44.7 206.1 45.3 Q203.8 36.4 194.6 35.7 Z" fill="#cfcfcf"/><path d="M195.7 36.7 L204.9 44.4M198.3 40.1 l0.3 2M199.5 38.6 l2 0M200.6 42 l0.3 2M201.8 40.5 l2 0M202.9 43.9 l0.3 2M204.1 42.4 l2 0" stroke="#444" stroke-width="0.6" fill="none" stroke-linecap="round"/><path d="M91.1 184.9 Q104.5 181.5 105.5 167.7 Q92.1 171.1 91.1 184.9 Z" fill="#cfcfcf"/><path d="M92.5 183.2 L104.1 169.4M96.9 179.5 l2 -0.3M95.4 178.3 l0 -2M99.8 176.1 l2 -0.3M98.3 174.8 l0 -2M102.7 172.6 l2 -0.3M101.2 171.4 l0 -2" stroke="#444" stroke-width="0.6" fill="none" stroke-linecap="round"/><path d="M172.6 164.2 Q168.6 180.8 183 189.9 Q187.1 173.3 172.6 164.2 Z" fill="#cfcfcf"/><path d="M173.7 166.8 L182 187.4M175.3 173.3 l-0.6 1.9M177.1 172.6 l1.8 0.9M177.4 178.5 l-0.6 1.9M179.1 177.8 l1.8 0.9M179.4 183.6 l-0.6 1.9M181.2 182.9 l1.8 0.9" stroke="#444" stroke-width="0.6" fill="none" stroke-linecap="round"/><path d="M116.8 191.8 Q119.3 203.1 130.8 204.4 Q128.3 193.1 116.8 191.8 Z" fill="#cfcfcf"/><path d="M118.2 193.1 L129.4 203.1M121.2 197.1 l0.3 2M122.5 195.6 l2 0.1M124 199.6 l0.3 2M125.3 198.1 l2 0.1M126.8 202.1 l0.3 2M128.1 200.6 l2 0.1" stroke="#444" stroke-width="0.6" fill="none" stroke-linecap="round"/><path d="M145 210.7 Q160.5 206.2 161.1 190 Q145.6 194.5 145 210.7 Z" fill="#cfcfcf"/><path d="M146.6 208.6 L159.5 192.1M151.3 204.2 l2 -0.4M149.8 203 l-0.1 -2M154.5 200 l2 -0.4M153 198.8 l-0.1 -2M157.8 195.9 l2 -0.4M156.2 194.7 l-0.1 -2" stroke="#444" stroke-width="0.6" fill="none" stroke-linecap="round"/><circle cx="48.8" cy="36" r="3.5" fill="#aaa"/><circle cx="48.8" cy="36" r="1.1" fill="#333"/><circle cx="63.8" cy="43.5" r="3.5" fill="#aaa"/><circle cx="63.8" cy="43.5" r="1.1" fill="#333"/><circle cx="39" cy="60.8" r="3.5" fill="#aaa"/><circle cx="39" cy="60.8" r="1.1" fill="#333"/><circle cx="57" cy="60.8" r="3.5" fill="#aaa"/><circle cx="57" cy="60.8" r="1.1" fill="#333"/><circle cx="10.5" cy="90.8" r="3.5" fill="#aaa"/><circle cx="10.5" cy="90.8" r="1.1" fill="#333"/><circle cx="56.3" cy="113.3" r="3.5" fill="#aaa"/><circle cx="56.3" cy="113.3" r="1.1" fill="#333"/><circle cx="39.8" cy="123.8" r="3.5" fill="#aaa"/><circle cx="39.8" cy="123.8" r="1.1" fill="#333"/><circle cx="51" cy="127.6" r="3.5" fill="#aaa"/><circle cx="51" cy="127.6" r="1.1" fill="#333"/><circle cx="39.8" cy="137.3" r="3.5" fill="#aaa"/><circle cx="39.8" cy="137.3" r="1.1" fill="#333"/><circle cx="104.3" cy="4.5" r="3.5" fill="#aaa"/><circle cx="104.3" cy="4.5" r="1.1" fill="#333"/><circle cx="171.8" cy="6" r="3.5" fill="#aaa"/><circle cx="171.8" cy="6" r="1.1" fill="#333"/><circle cx="160.6" cy="24.8" r="3.5" fill="#aaa"/><circle cx="160.6" cy="24.8" r="1.1" fill="#333"/><circle cx="146.3" cy="32.3" r="3.5" fill="#aaa"/><circle cx="146.3" cy="32.3" r="1.1" fill="#333"/><circle cx="189.8" cy="65.3" r="3.5" fill="#aaa"/><circle cx="189.8" cy="65.3" r="1.1" fill="#333"/><circle cx="137.3" cy="65.3" r="3.5" fill="#aaa"/><circle cx="137.3" cy="65.3" r="1.1" fill="#333"/><circle cx="210.8" cy="90.8" r="3.5" fill="#aaa"/><circle cx="210.8" cy="90.8" r="1.1" fill="#333"/><circle cx="191.3" cy="126.8" r="3.5" fill="#aaa"/><circle cx="191.3" cy="126.8" r="1.1" fill="#333"/><circle cx="138.1" cy="124.5" r="3.5" fill="#aaa"/><circle cx="138.1" cy="124.5" r="1.1" fill="#333"/><circle cx="149.3" cy="133.6" r="3.5" fill="#aaa"/><circle cx="149.3" cy="133.6" r="1.1" fill="#333"/><circle cx="138.1" cy="138.1" r="3.5" fill="#aaa"/><circle cx="138.1" cy="138.1" r="1.1" fill="#333"/><circle cx="105" cy="204.1" r="3.5" fill="#aaa"/><circle cx="105" cy="204.1" r="1.1" fill="#333"/><circle cx="171.8" cy="207.1" r="3.5" fill="#aaa"/><circle cx="171.8" cy="207.1" r="1.1" fill="#333"/><circle cx="38.3" cy="201.1" r="3.5" fill="#aaa"/><circle cx="38.3" cy="201.1" r="1.1" fill="#333"/><circle cx="81.8" cy="18" r="3.4" fill="#e6e6e6"/><circle cx="81.8" cy="18" r="1.1" fill="#333"/><circle cx="115.5" cy="18.8" r="3.4" fill="#e6e6e6"/><circle cx="115.5" cy="18.8" r="1.1" fill="#333"/><circle cx="15.8" cy="50.3" r="3.4" fill="#e6e6e6"/><circle cx="15.8" cy="50.3" r="1.1" fill="#333"/><circle cx="86.3" cy="42.8" r="3.4" fill="#e6e6e6"/><circle cx="86.3" cy="42.8" r="1.1" fill="#333"/><circle cx="71.3" cy="70.5" r="3.4" fill="#e6e6e6"/><circle cx="71.3" cy="70.5" r="1.1" fill="#333"/><circle cx="27" cy="96.8" r="3.4" fill="#e6e6e6"/><circle cx="27" cy="96.8" r="1.1" fill="#333"/><circle cx="42.8" cy="107.3" r="3.4" fill="#e6e6e6"/><circle cx="42.8" cy="107.3" r="1.1" fill="#333"/><circle cx="50.3" cy="138.8" r="3.4" fill="#e6e6e6"/><circle cx="50.3" cy="138.8" r="1.1" fill="#333"/><circle cx="121.5" cy="60.8" r="3.4" fill="#e6e6e6"/><circle cx="121.5" cy="60.8" r="1.1" fill="#333"/><circle cx="147.8" cy="123.8" r="3.4" fill="#e6e6e6"/><circle cx="147.8" cy="123.8" r="1.1" fill="#333"/><circle cx="177.8" cy="48.8" r="3.4" fill="#e6e6e6"/><circle cx="177.8" cy="48.8" r="1.1" fill="#333"/><circle cx="184.6" cy="24.8" r="3.4" fill="#e6e6e6"/><circle cx="184.6" cy="24.8" r="1.1" fill="#333"/><circle cx="112.5" cy="153.1" r="3.4" fill="#e6e6e6"/><circle cx="112.5" cy="153.1" r="1.1" fill="#333"/><circle cx="136.6" cy="153.8" r="3.4" fill="#e6e6e6"/><circle cx="136.6" cy="153.8" r="1.1" fill="#333"/><circle cx="22.5" cy="5.3" r="3.4" fill="#e6e6e6"/><circle cx="22.5" cy="5.3" r="1.1" fill="#333"/><circle cx="22.5" cy="205.6" r="3.4" fill="#e6e6e6"/><circle cx="22.5" cy="205.6" r="1.1" fill="#333"/><circle cx="81.8" cy="186.1" r="3.4" fill="#e6e6e6"/><circle cx="81.8" cy="186.1" r="1.1" fill="#333"/><g transform="translate(111 99.8) rotate(-155.4)"><path d="M-7.1 0 C-3.9 1.7 -1.9 5.2 -1.4 11.5 L1.4 11.5 C1.9 5.2 3.9 1.7 7.1 0 Z" fill="#aaa"/><ellipse rx="7.1" ry="2.6" fill="#e6e6e6" stroke="#aaa" stroke-width="1"/><path d="M-1.5 0l3 -.8M-.5 -1l1 2" stroke="#333" stroke-width=".6"/><path d="M0 9.6 C-1.5 11.1 -4.8 12.8 -4.1 14.9 C-3.6 16.6 -1 16.4 0 14.5 C1 16.4 3.6 16.6 4.1 14.9 C4.8 12.8 1.5 11.1 0 9.6 Z" fill="#333"/></g><g transform="translate(142.6 105) rotate(170)"><path d="M-9 0 C-5 1.9 -2.3 5.8 -1.8 13 L1.8 13 C2.3 5.8 5 1.9 9 0 Z" fill="#aaa"/><ellipse rx="9" ry="3.3" fill="#e6e6e6" stroke="#aaa" stroke-width="1"/><path d="M-1.5 0l3 -.8M-.5 -1l1 2" stroke="#333" stroke-width=".6"/><path d="M0 10.5 C-1.8 12.3 -6.1 14.5 -5.2 17.2 C-4.6 19.4 -1.2 19.1 0 16.6 C1.2 19.1 4.6 19.4 5.2 17.2 C6.1 14.5 1.8 12.3 0 10.5 Z" fill="#333"/></g><g transform="translate(125.3 114.8) rotate(180)"><path d="M-12 0 C-6.6 2.7 -3.1 8.1 -2.4 18 L2.4 18 C3.1 8.1 6.6 2.7 12 0 Z" fill="#aaa"/><ellipse rx="12" ry="4.4" fill="#e6e6e6" stroke="#aaa" stroke-width="1"/><path d="M-1.5 0l3 -.8M-.5 -1l1 2" stroke="#333" stroke-width=".6"/></g><g transform="translate(25.5 148.6) rotate(0)"><path d="M-13.1 0 C-7.2 2.6 -3.4 7.8 -2.6 17.3 L2.6 17.3 C3.4 7.8 7.2 2.6 13.1 0 Z" fill="#aaa"/><ellipse rx="13.1" ry="4.8" fill="#e6e6e6" stroke="#aaa" stroke-width="1"/><path d="M-1.5 0l3 -.8M-.5 -1l1 2" stroke="#333" stroke-width=".6"/></g><g transform="translate(44.3 159.1) rotate(9)"><path d="M-9.8 0 C-5.4 2.2 -2.5 6.5 -2 14.4 L2 14.4 C2.5 6.5 5.4 2.2 9.8 0 Z" fill="#aaa"/><ellipse rx="9.8" ry="3.5" fill="#e6e6e6" stroke="#aaa" stroke-width="1"/><path d="M-1.5 0l3 -.8M-.5 -1l1 2" stroke="#333" stroke-width=".6"/></g><g transform="translate(9.8 165.1) rotate(-26.3)"><path d="M-7.5 0 C-4.1 1.9 -2 5.6 -1.5 12.5 L1.5 12.5 C2 5.6 4.1 1.9 7.5 0 Z" fill="#aaa"/><ellipse rx="7.5" ry="2.7" fill="#e6e6e6" stroke="#aaa" stroke-width="1"/><path d="M-1.5 0l3 -.8M-.5 -1l1 2" stroke="#333" stroke-width=".6"/></g><g transform="translate(24.8 35.3) rotate(-45)"><path d="M-6.4 0 C-3.5 1.5 -1.7 4.5 -1.3 10 L1.3 10 C1.7 4.5 3.5 1.5 6.4 0 Z" fill="#aaa"/><ellipse rx="6.4" ry="2.3" fill="#e6e6e6" stroke="#aaa" stroke-width="1"/><path d="M-1.5 0l3 -.8M-.5 -1l1 2" stroke="#333" stroke-width=".6"/><path d="M0 8.2 C-1.3 9.5 -4.3 11.1 -3.7 13 C-3.3 14.5 -0.9 14.3 0 12.6 C0.9 14.3 3.3 14.5 3.7 13 C4.3 11.1 1.3 9.5 0 8.2 Z" fill="#333"/></g><g transform="translate(66.8 24) rotate(44.2)"><path d="M-4.9 0 C-2.7 1.1 -1.3 3.4 -1 7.5 L1 7.5 C1.3 3.4 2.7 1.1 4.9 0 Z" fill="#efefef" stroke="#aaa" stroke-width=".8"/><ellipse rx="4.9" ry="1.8" fill="#f8f8f8" stroke="#aaa" stroke-width=".8"/><path d="M0 6.2 C-1 7.2 -3.3 8.4 -2.8 9.9 C-2.5 11 -0.7 10.9 0 9.5 C0.7 10.9 2.5 11 2.8 9.9 C3.3 8.4 1 7.2 0 6.2 Z" fill="#333"/></g><g transform="translate(123.8 33) rotate(-137.9)"><path d="M-7.1 0 C-3.9 1.6 -1.9 4.7 -1.4 10.5 L1.4 10.5 C1.9 4.7 3.9 1.6 7.1 0 Z" fill="#aaa"/><ellipse rx="7.1" ry="2.6" fill="#e6e6e6" stroke="#aaa" stroke-width="1"/><path d="M-1.5 0l3 -.8M-.5 -1l1 2" stroke="#333" stroke-width=".6"/><path d="M0 8.6 C-1.5 10 -4.8 11.7 -4.1 13.9 C-3.6 15.6 -1 15.4 0 13.4 C1 15.4 3.6 15.6 4.1 13.9 C4.8 11.7 1.5 10 0 8.6 Z" fill="#333"/></g><g transform="translate(162.8 41.3) rotate(132)"><path d="M-4.5 0 C-2.5 0.9 -1.2 2.7 -0.9 6.1 L0.9 6.1 C1.2 2.7 2.5 0.9 4.5 0 Z" fill="#efefef" stroke="#aaa" stroke-width=".8"/><ellipse rx="4.5" ry="1.6" fill="#f8f8f8" stroke="#aaa" stroke-width=".8"/><path d="M0 4.8 C-0.9 5.8 -3.1 6.8 -2.6 8.2 C-2.3 9.3 -0.6 9.1 0 7.9 C0.6 9.1 2.3 9.3 2.6 8.2 C3.1 6.8 0.9 5.8 0 4.8 Z" fill="#333"/></g><g transform="translate(61.5 86.7) rotate(47)"><path d="M-6 0 C-3.3 1.4 -1.6 4.2 -1.2 9.2 L1.2 9.2 C1.6 4.2 3.3 1.4 6 0 Z" fill="#aaa"/><ellipse rx="6" ry="2.2" fill="#aaa"/><ellipse rx="3.6" ry="1.2" fill="#333"/><path d="M0 7.6 C-1.2 8.8 -4.1 10.3 -3.5 12.1 C-3.1 13.5 -0.8 13.3 0 11.7 C0.8 13.3 3.1 13.5 3.5 12.1 C4.1 10.3 1.2 8.8 0 7.6 Z" fill="#333"/></g><g transform="translate(186.1 111.8) rotate(131.6)"><path d="M-6.4 0 C-3.5 1.4 -1.7 4.1 -1.3 9 L1.3 9 C1.7 4.1 3.5 1.4 6.4 0 Z" fill="#aaa"/><ellipse rx="6.4" ry="2.3" fill="#aaa"/><ellipse rx="3.8" ry="1.3" fill="#333"/><path d="M0 7.3 C-1.3 8.6 -4.3 10.1 -3.7 12.1 C-3.3 13.6 -0.9 13.4 0 11.6 C0.9 13.4 3.3 13.6 3.7 12.1 C4.3 10.1 1.3 8.6 0 7.3 Z" fill="#333"/></g><g transform="translate(96.8 124.5) rotate(-159.6)"><path d="M-7.1 0 C-3.9 1.5 -1.9 4.5 -1.4 9.9 L1.4 9.9 C1.9 4.5 3.9 1.5 7.1 0 Z" fill="#aaa"/><ellipse rx="7.1" ry="2.6" fill="#e6e6e6" stroke="#aaa" stroke-width="1"/><path d="M-1.5 0l3 -.8M-.5 -1l1 2" stroke="#333" stroke-width=".6"/><path d="M0 8 C-1.5 9.4 -4.8 11.1 -4.1 13.3 C-3.6 15 -1 14.8 0 12.8 C1 14.8 3.6 15 4.1 13.3 C4.8 11.1 1.5 9.4 0 8 Z" fill="#333"/></g><g transform="translate(90.8 150.1) rotate(48)"><path d="M-6.4 0 C-3.5 1.5 -1.7 4.5 -1.3 10.1 L1.3 10.1 C1.7 4.5 3.5 1.5 6.4 0 Z" fill="#aaa"/><ellipse rx="6.4" ry="2.3" fill="#aaa"/><ellipse rx="3.8" ry="1.3" fill="#333"/><path d="M0 8.4 C-1.3 9.7 -4.3 11.2 -3.7 13.1 C-3.3 14.6 -0.9 14.4 0 12.7 C0.9 14.4 3.3 14.6 3.7 13.1 C4.3 11.2 1.3 9.7 0 8.4 Z" fill="#333"/></g><g transform="translate(120.8 166.6) rotate(-43.2)"><path d="M-6 0 C-3.3 1.5 -1.6 4.4 -1.2 9.9 L1.2 9.9 C1.6 4.4 3.3 1.5 6 0 Z" fill="#aaa"/><ellipse rx="6" ry="2.2" fill="#e6e6e6" stroke="#aaa" stroke-width="1"/><path d="M-1.5 0l3 -.8M-.5 -1l1 2" stroke="#333" stroke-width=".6"/><path d="M0 8.2 C-1.2 9.5 -4.1 10.9 -3.5 12.7 C-3.1 14.2 -0.8 14 0 12.3 C0.8 14 3.1 14.2 3.5 12.7 C4.1 10.9 1.2 9.5 0 8.2 Z" fill="#333"/></g><g transform="translate(195.8 138.1) rotate(-25)"><path d="M-7.5 0 C-4.1 1.4 -2 4.3 -1.5 9.6 L1.5 9.6 C2 4.3 4.1 1.4 7.5 0 Z" fill="#aaa"/><ellipse rx="7.5" ry="2.7" fill="#e6e6e6" stroke="#aaa" stroke-width="1"/><path d="M-1.5 0l3 -.8M-.5 -1l1 2" stroke="#333" stroke-width=".6"/><path d="M0 7.6 C-1.5 9.1 -5.1 10.9 -4.3 13.2 C-3.8 15 -1 14.7 0 12.7 C1 14.7 3.8 15 4.3 13.2 C5.1 10.9 1.5 9.1 0 7.6 Z" fill="#333"/></g><path d="M30 17.7 Q6 15 -15.8 3.8" stroke="#333" stroke-width="1.4" fill="none" stroke-linecap="round"/><path d="M20.1 15.3 L18.6 11.4M19.8 17 L17 20.1M14.8 14.2 L13.5 10.4M14.4 15.9 L11.6 18.7M9.6 12.8 L8.5 9.2M9.1 14.5 L6.3 17.1M4.4 11.3 L3.5 7.7M3.8 12.9 L1 15.3M-0.8 9.5 L-1.5 6.1M-1.4 11.1 L-4.1 13.2M-5.9 7.4 L-6.4 4.2M-6.5 9 L-9.2 11M-10.9 5.2 L-11.3 2.1M-11.6 6.8 L-14.2 8.5M-15.8 3.8 L-18.5 2.3" stroke="#333" stroke-width="3.4" fill="none" stroke-linecap="round"/><path d="M21 19.2 Q6 22.5 -7.5 25.8" stroke="#333" stroke-width="1.3" fill="none" stroke-linecap="round"/><path d="M11.4 20.5 L8.5 17.5M11.8 22.2 L10.4 26.1M6.4 21.6 L3.7 18.9M6.8 23.3 L5.5 26.9M1.4 22.8 L-1.1 20.3M1.8 24.5 L0.7 27.8M-3.5 23.9 L-5.7 21.7M-3.1 25.6 L-4.1 28.6M-7.5 25.8 L-10.5 26.6" stroke="#333" stroke-width="3.4" fill="none" stroke-linecap="round"/><path d="M54.8 12 Q67.5 10.5 81 6.8" stroke="#333" stroke-width="1.5" fill="none" stroke-linecap="round"/><path d="M67.5 11 L72.8 15M67.1 9 L70.5 3.4M74.8 9.4 L79.6 12.7M74.3 7.4 L77.1 2.3M81 6.8 L85.7 5.5" stroke="#333" stroke-width="4.6" fill="none" stroke-linecap="round"/><path d="M129.1 49.5 Q105 45 86.3 65.3" stroke="#333" stroke-width="1.4" fill="none" stroke-linecap="round"/><path d="M122.9 47.9 L120.8 44M122.8 49.6 L120.2 53.2M117 48 L114.5 44.6M117.1 49.7 L115.1 53.4M111.2 48.9 L108.4 46M111.6 50.6 L110.2 54.3M105.7 50.5 L102.6 48.2M106.3 52.2 L105.5 55.9M100.3 53 L97.1 51.2M101.1 54.5 L100.8 58.2M95.1 56.3 L91.9 54.9M96.1 57.7 L96.3 61.1M90.1 60.3 L86.9 59.3M91.3 61.6 L91.8 64.8M86.3 65.3 L84.1 67.7" stroke="#333" stroke-width="3.4" fill="none" stroke-linecap="round"/><path d="M114.8 63.8 Q91.5 78 88.5 111.8" stroke="#333" stroke-width="1.4" fill="none" stroke-linecap="round"/><path d="M111.7 64.8 L108 63.1M112.6 66.2 L112.9 70.2M107.1 68.4 L103.4 67.1M108.2 69.6 L109 73.5M103.1 72.3 L99.4 71.5M104.3 73.5 L105.4 77.1M99.5 76.7 L95.9 76.3M100.8 77.7 L102.3 81.1M96.4 81.6 L92.8 81.6M97.8 82.4 L99.6 85.5M93.7 86.9 L90.3 87.2M95.2 87.5 L97.2 90.3M91.5 92.6 L88.3 93.2M93.1 93.1 L95.3 95.6M89.8 98.7 L86.7 99.6M91.4 99.1 L93.7 101.3M88.5 105.2 L85.7 106.3M90.1 105.5 L92.5 107.4M88.5 111.8 L88.3 114.8" stroke="#333" stroke-width="3.2" fill="none" stroke-linecap="round"/><path d="M151.6 54.3 Q165.1 60 177.1 72" stroke="#333" stroke-width="1.5" fill="none" stroke-linecap="round"/><path d="M159.8 59.7 L160.9 66.2M160.8 57.8 L167.1 55.6M165.6 63.6 L166.1 69.8M166.9 61.9 L172.9 60.3M171.4 68.1 L171.3 74M172.7 66.5 L178.5 65.6M177.1 72 L180.5 75.4" stroke="#333" stroke-width="4.6" fill="none" stroke-linecap="round"/><path d="M146.3 66 Q156.1 85.5 179.3 93.8" stroke="#333" stroke-width="1.5" fill="none" stroke-linecap="round"/><path d="M147.9 70.8 L145.7 75.6M149.5 69.9 L154.8 70.1M151.7 76.2 L150.1 80.9M153.2 75 L158.2 74.6M156.1 81 L155.2 85.6M157.4 79.6 L162 78.7M161 85.2 L160.8 89.7M162.2 83.7 L166.5 82.3M166.6 89 L166.8 93.2M167.6 87.3 L171.5 85.6M172.8 92.2 L173.4 96.1M173.6 90.5 L177 88.4M179.3 93.8 L182.9 95.1" stroke="#333" stroke-width="3.8" fill="none" stroke-linecap="round"/><path d="M157.6 102 Q160.6 109.5 164.3 117" stroke="#333" stroke-width="1.5" fill="none" stroke-linecap="round"/><path d="M160.2 110.8 L157.5 116.9M162.1 110 L168.4 112M164.3 117 L166.5 121.3" stroke="#333" stroke-width="4.6" fill="none" stroke-linecap="round"/><path d="M60 162.1 Q63 154.6 66.8 147.8" stroke="#333" stroke-width="1.5" fill="none" stroke-linecap="round"/><path d="M64.6 154.3 L71.1 151.9M62.7 153.4 L60.4 146.8M66.8 147.8 L69.2 143.4" stroke="#333" stroke-width="4.8" fill="none" stroke-linecap="round"/><path d="M49.5 201.1 Q63 187.6 83.3 169.6" stroke="#333" stroke-width="1.6" fill="none" stroke-linecap="round"/><path d="M54.2 197.9 L60.8 198.5M52.8 196.5 L52.2 189.8M59.4 192.8 L65.8 193.5M58 191.4 L57.6 185M65.1 187.5 L71.1 188.2M63.7 186 L63.4 179.9M71.2 181.9 L76.9 182.6M69.8 180.4 L69.5 174.6M77.7 175.9 L83.1 176.7M76.3 174.4 L76.1 169M83.3 169.6 L86.9 166.4" stroke="#333" stroke-width="4.4" fill="none" stroke-linecap="round"/><path d="M54.8 213.1 Q70.5 210.1 83.3 195.1" stroke="#333" stroke-width="1.6" fill="none" stroke-linecap="round"/><path d="M65.2 210.7 L71.3 213.5M64.4 208.9 L66.4 202.6M72 206.8 L78.1 208.4M70.9 205.2 L71.8 199M78.5 201.6 L84.3 202.2M77.2 200.1 L77.1 194.2M83.3 195.1 L86.4 191.4" stroke="#333" stroke-width="4.4" fill="none" stroke-linecap="round"/><path d="M186.8 153.1 Q184.6 183.1 216.1 199.6" stroke="#333" stroke-width="1.4" fill="none" stroke-linecap="round"/><path d="M185.8 155.9 L182.1 157.9M187.6 156 L191.1 158.2M186.1 162.2 L182.7 164.5M187.8 162 L191.5 163.7M187.1 168.1 L184.2 170.8M188.8 167.7 L192.6 168.8M188.9 173.7 L186.5 176.8M190.6 173.1 L194.4 173.6M191.6 179 L189.6 182.3M193.1 178.1 L196.9 178.2M195 184 L193.5 187.4M196.4 182.9 L200 182.4M199.1 188.6 L198.2 192.1M200.4 187.4 L203.8 186.5M204 192.9 L203.5 196.4M205.1 191.5 L208.4 190.3M209.7 196.9 L209.5 200.3M210.7 195.4 L213.7 193.9M216.1 199.6 L218.9 201" stroke="#333" stroke-width="3.4" fill="none" stroke-linecap="round"/><path d="M129.4 63L126.8 97.5M128.3 78L117 87M127.6 84L138.1 90M120 86.3L118.5 93M135.1 88.5L139.6 96" stroke="#333" stroke-width="1.2" fill="none" stroke-linecap="round"/><path d="M127.6 96 Q124.5 88.5 120 84" stroke="#333" stroke-width="1" fill="none" stroke-linecap="round"/><path d="M125.8 91 L126.7 86.9M124.9 91.5 L121 89.9M123.1 86.8 L123.2 84.8M122.3 87.4 L120.4 86.9M120 84 L117.9 81.9" stroke="#333" stroke-width="2.6" fill="none" stroke-linecap="round"/><path d="M127.6 90 Q133.6 84 135.8 75" stroke="#333" stroke-width="1" fill="none" stroke-linecap="round"/><path d="M131.6 86 L135.6 84.9M130.8 85.4 L130.4 81.2M134.5 80.6 L136.2 79.8M133.6 80.2 L133 78.3M135.8 75 L136.5 72.1" stroke="#333" stroke-width="2.6" fill="none" stroke-linecap="round"/><path d="M30 204.1L27.8 166.6M29.3 190.6L15 177.1M28.8 184.6L42.8 172.6M28.5 177.1L22.5 168.1M28.2 174.1L34.5 167.3" stroke="#333" stroke-width="1.3" fill="none" stroke-linecap="round"/><path d="M29.3 193.6 Q21 184.6 15 176.3" stroke="#333" stroke-width="1" fill="none" stroke-linecap="round"/><path d="M23.1 185.5 L23.5 180.5M22 186.4 L17 186M18.9 180.3 L19.2 178.1M17.8 181.2 L15.5 181M15 176.3 L12.9 173.4" stroke="#333" stroke-width="3.4" fill="none" stroke-linecap="round"/><path d="M29 186.1 Q36 178.6 42.8 172.6" stroke="#333" stroke-width="1" fill="none" stroke-linecap="round"/><path d="M35.6 180.3 L40.6 180.3M34.6 179.3 L34.6 174.3M39.7 176.3 L42 176.4M38.7 175.3 L38.8 173M42.8 172.6 L45.5 170.2" stroke="#333" stroke-width="3.4" fill="none" stroke-linecap="round"/><path d="M28.5 180.1 Q28.2 172.6 27.8 166.6" stroke="#333" stroke-width="1" fill="none" stroke-linecap="round"/><path d="M29 175 L32.3 171.3M27.6 175.1 L23.9 171.7M28.7 170.2 L30.2 168.5M27.3 170.3 L25.6 168.8M27.8 166.6 L27.5 163" stroke="#333" stroke-width="3.2" fill="none" stroke-linecap="round"/><path d="M148.6 192.1L146.3 165.1M147.8 180.1L138.1 174.1M147.4 175.6L156.8 169.6M147.1 171.1L141.1 165.1" stroke="#333" stroke-width="1.2" fill="none" stroke-linecap="round"/><path d="M147.8 182.3 Q142.6 178.6 138.1 174.1" stroke="#333" stroke-width="1" fill="none" stroke-linecap="round"/><path d="M142.6 177.6 L141.9 173.5M142 178.4 L137.7 178.4M138.1 174.1 L135.9 171.9" stroke="#333" stroke-width="2.6" fill="none" stroke-linecap="round"/><path d="M147.5 177.1 Q151.6 174.1 156.8 169.6" stroke="#333" stroke-width="1" fill="none" stroke-linecap="round"/><path d="M152.6 173.7 L156.9 173.8M152 172.9 L152.8 168.8M156.8 169.6 L159.1 167.6" stroke="#333" stroke-width="2.6" fill="none" stroke-linecap="round"/><path d="M0.8 59.3L15 81M6 67.5L0 72M9 72L18 69M11.3 75.8L4.5 81M12.8 78L20.3 78.8" stroke="#333" stroke-width="1.1" fill="none" stroke-linecap="round"/><path d="M6 67.5 Q3 69.3 0 72" stroke="#333" stroke-width="0.9" fill="none" stroke-linecap="round"/><path d="M2.3 69.5 L-1.5 69.3M2.8 70.3 L2 73.9M0 72 L-2 73.8" stroke="#333" stroke-width="2.4" fill="none" stroke-linecap="round"/><path d="M9 72 Q13.5 70.2 18 69" stroke="#333" stroke-width="0.9" fill="none" stroke-linecap="round"/><path d="M14.2 70.6 L17.7 72M13.9 69.8 L15.9 66.5M18 69 L20.6 68.3" stroke="#333" stroke-width="2.4" fill="none" stroke-linecap="round"/><path d="M11.3 75.8 Q7.8 78 4.5 81" stroke="#333" stroke-width="0.9" fill="none" stroke-linecap="round"/><path d="M7.1 78.2 L3.3 78.1M7.7 78.9 L6.9 82.6M4.5 81 L2.5 82.8" stroke="#333" stroke-width="2.4" fill="none" stroke-linecap="round"/><path d="M12.8 78 Q16.5 78 20.3 78.8" stroke="#333" stroke-width="0.9" fill="none" stroke-linecap="round"/><path d="M17 78.7 L19.6 81.4M17.1 77.8 L20.2 75.7M20.3 78.8 L22.9 79.3" stroke="#333" stroke-width="2.4" fill="none" stroke-linecap="round"/><path d="M10.5 74.3 Q13.2 78 15 81" stroke="#333" stroke-width="0.9" fill="none" stroke-linecap="round"/><path d="M12.9 78.6 L12.5 82.3M13.7 78 L17.3 79.1M15 81 L16.4 83.3" stroke="#333" stroke-width="2.4" fill="none" stroke-linecap="round"/></g><use href="#t2" x="-201" y="-201"/><use href="#t2" x="0" y="-201"/><use href="#t2" x="201" y="-201"/><use href="#t2" x="-201" y="0"/><use href="#t2" x="201" y="0"/><use href="#t2" x="-201" y="201"/><use href="#t2" x="0" y="201"/><use href="#t2" x="201" y="201"/></svg>
<svg style="left:753.8px;top:257.1px;overflow:hidden" width="267.8" height="267.8" viewBox="0 0 267.8 267.8"><rect width="268" height="268" fill="#e6e6e6"/><g id="t3"><g transform="translate(16.5 28.5) rotate(31)"><path d="M-8.3 0 C-4.5 2 -2.1 5.9 -1.7 13.1 L1.7 13.1 C2.1 5.9 4.5 2 8.3 0 Z" fill="#fff"/><ellipse rx="8.3" ry="3" fill="#e6e6e6" stroke="#fff" stroke-width="1.7"/><path d="M-1.5 0l3 -.8M-.5 -1l1 2" stroke="#333" stroke-width=".6"/><path d="M0 10.9 C-1.7 12.6 -5.6 14.5 -4.8 17.1 C-4.2 19 -1.1 18.7 0 16.5 C1.1 18.7 4.2 19 4.8 17.1 C5.6 14.5 1.7 12.6 0 10.9 Z" fill="#333"/></g><g transform="translate(43.5 26.3) rotate(-20.5)"><path d="M-8.3 0 C-4.5 1.8 -2.1 5.4 -1.7 12 L1.7 12 C2.1 5.4 4.5 1.8 8.3 0 Z" fill="#fff"/><ellipse rx="8.3" ry="3" fill="#e6e6e6" stroke="#fff" stroke-width="1.7"/><path d="M-1.5 0l3 -.8M-.5 -1l1 2" stroke="#333" stroke-width=".6"/><path d="M0 9.8 C-1.7 11.5 -5.6 13.4 -4.8 15.9 C-4.2 17.9 -1.1 17.6 0 15.4 C1.1 17.6 4.2 17.9 4.8 15.9 C5.6 13.4 1.7 11.5 0 9.8 Z" fill="#333"/></g><g transform="translate(99.8 11.3) rotate(22.3)"><path d="M-9.8 0 C-5.4 2.2 -2.5 6.6 -2 14.6 L2 14.6 C2.5 6.6 5.4 2.2 9.8 0 Z" fill="#fff"/><ellipse rx="9.8" ry="3.5" fill="#e6e6e6" stroke="#fff" stroke-width="1.7"/><path d="M-1.5 0l3 -.8M-.5 -1l1 2" stroke="#333" stroke-width=".6"/></g><g transform="translate(-1.5 69.8) rotate(-36.4)"><path d="M-6.8 0 C-3.7 2.7 -1.8 8 -1.4 17.7 L1.4 17.7 C1.8 8 3.7 2.7 6.8 0 Z" fill="#fff"/><ellipse rx="6.8" ry="2.5" fill="#e6e6e6" stroke="#fff" stroke-width="1.7"/><path d="M-1.5 0l3 -.8M-.5 -1l1 2" stroke="#333" stroke-width=".6"/></g><g transform="translate(18 65.3) rotate(18.4)"><path d="M-9.4 0 C-5.2 2.5 -2.4 7.5 -1.9 16.6 L1.9 16.6 C2.4 7.5 5.2 2.5 9.4 0 Z" fill="#fff"/><ellipse rx="9.4" ry="3.4" fill="#e6e6e6" stroke="#fff" stroke-width="1.7"/><path d="M-1.5 0l3 -.8M-.5 -1l1 2" stroke="#333" stroke-width=".6"/></g><g transform="translate(27.8 80.3) rotate(40.2)"><path d="M-6.8 0 C-3.7 1.9 -1.8 5.7 -1.4 12.8 L1.4 12.8 C1.8 5.7 3.7 1.9 6.8 0 Z" fill="#fff"/><ellipse rx="6.8" ry="2.5" fill="#e6e6e6" stroke="#fff" stroke-width="1.7"/><path d="M-1.5 0l3 -.8M-.5 -1l1 2" stroke="#333" stroke-width=".6"/></g><g transform="translate(53.3 66.8) rotate(-45)"><path d="M-5.3 0 C-2.9 1.4 -1.4 4.1 -1.1 9.1 L1.1 9.1 C1.4 4.1 2.9 1.4 5.3 0 Z" fill="#fff"/><ellipse rx="5.3" ry="1.9" fill="#e6e6e6" stroke="#fff" stroke-width="1.7"/><path d="M-1.5 0l3 -.8M-.5 -1l1 2" stroke="#333" stroke-width=".6"/><path d="M0 7.7 C-1.1 8.8 -3.6 10 -3 11.6 C-2.7 12.9 -0.7 12.7 0 11.3 C0.7 12.7 2.7 12.9 3 11.6 C3.6 10 1.1 8.8 0 7.7 Z" fill="#333"/></g><g transform="translate(81.8 78) rotate(-21.3)"><path d="M-9 0 C-5 2.2 -2.3 6.5 -1.8 14.5 L1.8 14.5 C2.3 6.5 5 2.2 9 0 Z" fill="#fff"/><ellipse rx="9" ry="3.3" fill="#e6e6e6" stroke="#fff" stroke-width="1.7"/><path d="M-1.5 0l3 -.8M-.5 -1l1 2" stroke="#333" stroke-width=".6"/><path d="M0 12 C-1.8 13.9 -6.1 16 -5.2 18.8 C-4.6 20.9 -1.2 20.6 0 18.2 C1.2 20.6 4.6 20.9 5.2 18.8 C6.1 16 1.8 13.9 0 12 Z" fill="#333"/></g><g transform="translate(116.3 67.5) rotate(31)"><path d="M-6 0 C-3.3 1.4 -1.6 4.3 -1.2 9.6 L1.2 9.6 C1.6 4.3 3.3 1.4 6 0 Z" fill="#fff"/><ellipse rx="6" ry="2.2" fill="#e6e6e6" stroke="#fff" stroke-width="1.7"/><path d="M-1.5 0l3 -.8M-.5 -1l1 2" stroke="#333" stroke-width=".6"/><path d="M0 8 C-1.2 9.2 -4.1 10.6 -3.5 12.5 C-3.1 13.9 -0.8 13.7 0 12.1 C0.8 13.7 3.1 13.9 3.5 12.5 C4.1 10.6 1.2 9.2 0 8 Z" fill="#333"/></g><g transform="translate(136.6 33.8) rotate(39)"><path d="M-5.3 0 C-2.9 1.4 -1.4 4.1 -1.1 9.1 L1.1 9.1 C1.4 4.1 2.9 1.4 5.3 0 Z" fill="#fff"/><ellipse rx="5.3" ry="1.9" fill="#e6e6e6" stroke="#fff" stroke-width="1.7"/><path d="M-1.5 0l3 -.8M-.5 -1l1 2" stroke="#333" stroke-width=".6"/><path d="M0 7.6 C-1.1 8.7 -3.6 10 -3 11.6 C-2.7 12.8 -0.7 12.6 0 11.2 C0.7 12.6 2.7 12.8 3 11.6 C3.6 10 1.1 8.7 0 7.6 Z" fill="#333"/></g><g transform="translate(183.8 32.3) rotate(-17.4)"><path d="M-9.8 0 C-5.4 1.9 -2.5 5.7 -2 12.6 L2 12.6 C2.5 5.7 5.4 1.9 9.8 0 Z" fill="#fff"/><ellipse rx="9.8" ry="3.5" fill="#e6e6e6" stroke="#fff" stroke-width="1.7"/><path d="M-1.5 0l3 -.8M-.5 -1l1 2" stroke="#333" stroke-width=".6"/><path d="M0 9.9 C-2 11.9 -6.6 14.2 -5.6 17.2 C-5 19.5 -1.3 19.2 0 16.6 C1.3 19.2 5 19.5 5.6 17.2 C6.6 14.2 2 11.9 0 9.9 Z" fill="#333"/></g><g transform="translate(142.6 64.5) rotate(-83.7)"><path d="M-5.3 0 C-2.9 2 -1.4 6.1 -1.1 13.6 L1.1 13.6 C1.4 6.1 2.9 2 5.3 0 Z" fill="#fff"/><ellipse rx="5.3" ry="1.9" fill="#e6e6e6" stroke="#fff" stroke-width="1.7"/><path d="M-1.5 0l3 -.8M-.5 -1l1 2" stroke="#333" stroke-width=".6"/></g><g transform="translate(144.8 81.8) rotate(-139.1)"><path d="M-6.8 0 C-3.7 2.2 -1.8 6.7 -1.4 14.9 L1.4 14.9 C1.8 6.7 3.7 2.2 6.8 0 Z" fill="#fff"/><ellipse rx="6.8" ry="2.5" fill="#e6e6e6" stroke="#fff" stroke-width="1.7"/><path d="M-1.5 0l3 -.8M-.5 -1l1 2" stroke="#333" stroke-width=".6"/></g><g transform="translate(159.8 84) rotate(-172.9)"><path d="M-6.8 0 C-3.7 1.8 -1.8 5.4 -1.4 12.1 L1.4 12.1 C1.8 5.4 3.7 1.8 6.8 0 Z" fill="#fff"/><ellipse rx="6.8" ry="2.5" fill="#e6e6e6" stroke="#fff" stroke-width="1.7"/><path d="M-1.5 0l3 -.8M-.5 -1l1 2" stroke="#333" stroke-width=".6"/></g><g transform="translate(24.8 114) rotate(-105.5)"><path d="M-7.5 0 C-4.1 2.1 -2 6.3 -1.5 14 L1.5 14 C2 6.3 4.1 2.1 7.5 0 Z" fill="#fff"/><ellipse rx="7.5" ry="2.7" fill="#e6e6e6" stroke="#fff" stroke-width="1.7"/><path d="M-1.5 0l3 -.8M-.5 -1l1 2" stroke="#333" stroke-width=".6"/></g><g transform="translate(32.3 131.3) rotate(-140.5)"><path d="M-9 0 C-5 2.5 -2.3 7.4 -1.8 16.5 L1.8 16.5 C2.3 7.4 5 2.5 9 0 Z" fill="#fff"/><ellipse rx="9" ry="3.3" fill="#e6e6e6" stroke="#fff" stroke-width="1.7"/><path d="M-1.5 0l3 -.8M-.5 -1l1 2" stroke="#333" stroke-width=".6"/></g><g transform="translate(49.5 129.8) rotate(-176.2)"><path d="M-6.8 0 C-3.7 1.7 -1.8 5.1 -1.4 11.3 L1.4 11.3 C1.8 5.1 3.7 1.7 6.8 0 Z" fill="#fff"/><ellipse rx="6.8" ry="2.5" fill="#e6e6e6" stroke="#fff" stroke-width="1.7"/><path d="M-1.5 0l3 -.8M-.5 -1l1 2" stroke="#333" stroke-width=".6"/></g><g transform="translate(82.5 127.6) rotate(21.8)"><path d="M-10.5 0 C-5.8 1.9 -2.7 5.8 -2.1 12.9 L2.1 12.9 C2.7 5.8 5.8 1.9 10.5 0 Z" fill="#fff"/><ellipse rx="10.5" ry="3.8" fill="#fff"/><ellipse rx="6.3" ry="2.1" fill="#333"/><path d="M0 10.1 C-2.1 12.2 -7.1 14.7 -6.1 17.9 C-5.4 20.4 -1.4 20.1 0 17.2 C1.4 20.1 5.4 20.4 6.1 17.9 C7.1 14.7 2.1 12.2 0 10.1 Z" fill="#333"/></g><g transform="translate(12 144.1) rotate(23.3)"><path d="M-9 0 C-5 1.6 -2.3 4.8 -1.8 10.6 L1.8 10.6 C2.3 4.8 5 1.6 9 0 Z" fill="#fff"/><ellipse rx="9" ry="3.3" fill="#fff"/><ellipse rx="5.4" ry="1.8" fill="#333"/><path d="M0 8.2 C-1.8 10 -6.1 12.2 -5.2 14.9 C-4.6 17 -1.2 16.7 0 14.3 C1.2 16.7 4.6 17 5.2 14.9 C6.1 12.2 1.8 10 0 8.2 Z" fill="#333"/></g><g transform="translate(122.3 116.3) rotate(-25.5)"><path d="M-8.3 0 C-4.5 2.2 -2.1 6.7 -1.7 15 L1.7 15 C2.1 6.7 4.5 2.2 8.3 0 Z" fill="#fff"/><ellipse rx="8.3" ry="3" fill="#e6e6e6" stroke="#fff" stroke-width="1.7"/><path d="M-1.5 0l3 -.8M-.5 -1l1 2" stroke="#333" stroke-width=".6"/></g><g transform="translate(174.1 132.1) rotate(-20.5)"><path d="M-8.3 0 C-4.5 1.8 -2.1 5.4 -1.7 12 L1.7 12 C2.1 5.4 4.5 1.8 8.3 0 Z" fill="#fff"/><ellipse rx="8.3" ry="3" fill="#e6e6e6" stroke="#fff" stroke-width="1.7"/><path d="M-1.5 0l3 -.8M-.5 -1l1 2" stroke="#333" stroke-width=".6"/><path d="M0 9.8 C-1.7 11.5 -5.6 13.4 -4.8 15.9 C-4.2 17.9 -1.1 17.6 0 15.4 C1.1 17.6 4.2 17.9 4.8 15.9 C5.6 13.4 1.7 11.5 0 9.8 Z" fill="#333"/></g><g transform="translate(180.1 104.3) rotate(31)"><path d="M-6 0 C-3.3 1 -1.6 3.1 -1.2 7 L1.2 7 C1.6 3.1 3.3 1 6 0 Z" fill="#fff"/><ellipse rx="6" ry="2.2" fill="#fff"/><ellipse rx="3.6" ry="1.2" fill="#333"/><path d="M0 5.4 C-1.2 6.6 -4.1 8 -3.5 9.9 C-3.1 11.3 -0.8 11.1 0 9.4 C0.8 11.1 3.1 11.3 3.5 9.9 C4.1 8 1.2 6.6 0 5.4 Z" fill="#333"/></g><g transform="translate(201.8 120) rotate(41.4)"><path d="M-6 0 C-3.3 1.3 -1.6 3.8 -1.2 8.4 L1.2 8.4 C1.6 3.8 3.3 1.3 6 0 Z" fill="#fff"/><ellipse rx="6" ry="2.2" fill="#e6e6e6" stroke="#fff" stroke-width="1.7"/><path d="M-1.5 0l3 -.8M-.5 -1l1 2" stroke="#333" stroke-width=".6"/><path d="M0 6.8 C-1.2 8 -4.1 9.4 -3.5 11.3 C-3.1 12.7 -0.8 12.5 0 10.8 C0.8 12.5 3.1 12.7 3.5 11.3 C4.1 9.4 1.2 8 0 6.8 Z" fill="#333"/></g><g transform="translate(53.3 168.1) rotate(-23.2)"><path d="M-6.8 0 C-3.7 1.7 -1.8 5.1 -1.4 11.4 L1.4 11.4 C1.8 5.1 3.7 1.7 6.8 0 Z" fill="#fff"/><ellipse rx="6.8" ry="2.5" fill="#e6e6e6" stroke="#fff" stroke-width="1.7"/><path d="M-1.5 0l3 -.8M-.5 -1l1 2" stroke="#333" stroke-width=".6"/></g><g transform="translate(72 163.6) rotate(21.8)"><path d="M-9.8 0 C-5.4 2.4 -2.5 7.3 -2 16.2 L2 16.2 C2.5 7.3 5.4 2.4 9.8 0 Z" fill="#fff"/><ellipse rx="9.8" ry="3.5" fill="#e6e6e6" stroke="#fff" stroke-width="1.7"/><path d="M-1.5 0l3 -.8M-.5 -1l1 2" stroke="#333" stroke-width=".6"/></g><g transform="translate(81.8 177.8) rotate(49.8)"><path d="M-6.8 0 C-3.7 1.9 -1.8 5.7 -1.4 12.8 L1.4 12.8 C1.8 5.7 3.7 1.9 6.8 0 Z" fill="#fff"/><ellipse rx="6.8" ry="2.5" fill="#e6e6e6" stroke="#fff" stroke-width="1.7"/><path d="M-1.5 0l3 -.8M-.5 -1l1 2" stroke="#333" stroke-width=".6"/></g><g transform="translate(20.3 191.3) rotate(-158.8)"><path d="M-9.8 0 C-5.4 2.1 -2.5 6.2 -2 13.7 L2 13.7 C2.5 6.2 5.4 2.1 9.8 0 Z" fill="#fff"/><ellipse rx="9.8" ry="3.5" fill="#e6e6e6" stroke="#fff" stroke-width="1.7"/><path d="M-1.5 0l3 -.8M-.5 -1l1 2" stroke="#333" stroke-width=".6"/><path d="M0 11 C-2 13 -6.6 15.3 -5.6 18.3 C-5 20.6 -1.3 20.3 0 17.7 C1.3 20.3 5 20.6 5.6 18.3 C6.6 15.3 2 13 0 11 Z" fill="#333"/></g><g transform="translate(118.5 164.3) rotate(-44.3)"><path d="M-5.3 0 C-2.9 1.4 -1.4 4.1 -1.1 9 L1.1 9 C1.4 4.1 2.9 1.4 5.3 0 Z" fill="#fff"/><ellipse rx="5.3" ry="1.9" fill="#e6e6e6" stroke="#fff" stroke-width="1.7"/><path d="M-1.5 0l3 -.8M-.5 -1l1 2" stroke="#333" stroke-width=".6"/><path d="M0 7.6 C-1.1 8.7 -3.6 9.9 -3 11.5 C-2.7 12.8 -0.7 12.6 0 11.2 C0.7 12.6 2.7 12.8 3 11.5 C3.6 9.9 1.1 8.7 0 7.6 Z" fill="#333"/></g><g transform="translate(107.3 185.3) rotate(23.5)"><path d="M-5.3 0 C-2.9 1.3 -1.4 3.9 -1.1 8.7 L1.1 8.7 C1.4 3.9 2.9 1.3 5.3 0 Z" fill="#fff"/><ellipse rx="5.3" ry="1.9" fill="#e6e6e6" stroke="#fff" stroke-width="1.7"/><path d="M-1.5 0l3 -.8M-.5 -1l1 2" stroke="#333" stroke-width=".6"/><path d="M0 7.2 C-1.1 8.3 -3.6 9.6 -3 11.2 C-2.7 12.4 -0.7 12.2 0 10.8 C0.7 12.2 2.7 12.4 3 11.2 C3.6 9.6 1.1 8.3 0 7.2 Z" fill="#333"/></g><g transform="translate(133.6 199.6) rotate(21.2)"><path d="M-8.3 0 C-4.5 1.5 -2.1 4.5 -1.7 10 L1.7 10 C2.1 4.5 4.5 1.5 8.3 0 Z" fill="#fff"/><ellipse rx="8.3" ry="3" fill="#fff"/><ellipse rx="5" ry="1.7" fill="#333"/><path d="M0 7.7 C-1.7 9.4 -5.6 11.4 -4.8 13.9 C-4.2 15.9 -1.1 15.6 0 13.3 C1.1 15.6 4.2 15.9 4.8 13.9 C5.6 11.4 1.7 9.4 0 7.7 Z" fill="#333"/></g><g transform="translate(170.3 195.1) rotate(-137.3)"><path d="M-7.5 0 C-4.1 2 -2 6 -1.5 13.3 L1.5 13.3 C2 6 4.1 2 7.5 0 Z" fill="#fff"/><ellipse rx="7.5" ry="2.7" fill="#e6e6e6" stroke="#fff" stroke-width="1.7"/><path d="M-1.5 0l3 -.8M-.5 -1l1 2" stroke="#333" stroke-width=".6"/></g><g transform="translate(184.6 206.3) rotate(-174.6)"><path d="M-9.8 0 C-5.4 2.4 -2.5 7.1 -2 15.8 L2 15.8 C2.5 7.1 5.4 2.4 9.8 0 Z" fill="#fff"/><ellipse rx="9.8" ry="3.5" fill="#e6e6e6" stroke="#fff" stroke-width="1.7"/><path d="M-1.5 0l3 -.8M-.5 -1l1 2" stroke="#333" stroke-width=".6"/></g><g transform="translate(199.6 195.1) rotate(148.4)"><path d="M-6.8 0 C-3.7 1.7 -1.8 5.2 -1.4 11.5 L1.4 11.5 C1.8 5.2 3.7 1.7 6.8 0 Z" fill="#fff"/><ellipse rx="6.8" ry="2.5" fill="#e6e6e6" stroke="#fff" stroke-width="1.7"/><path d="M-1.5 0l3 -.8M-.5 -1l1 2" stroke="#333" stroke-width=".6"/></g><g transform="translate(7.5 12) rotate(-30) scale(1.45)"><ellipse cx="0" cy="-1.6" rx="3.3" ry="2" fill="#fff"/><ellipse cx="0" cy="-1.6" rx="1.7" ry=".8" fill="#333"/><path d="M0 -.4 L-2.6 3.2 L0 2.4 L2.6 3.2 Z" fill="#333"/></g><g transform="translate(33 9.8) rotate(15) scale(1.45)"><ellipse cx="0" cy="-1.6" rx="3.3" ry="2" fill="#fff"/><ellipse cx="0" cy="-1.6" rx="1.7" ry=".8" fill="#333"/><path d="M0 -.4 L-2.6 3.2 L0 2.4 L2.6 3.2 Z" fill="#333"/></g><g transform="translate(30.8 49.5) rotate(-25) scale(1.45)"><ellipse cx="0" cy="-1.6" rx="3.3" ry="2" fill="#fff"/><ellipse cx="0" cy="-1.6" rx="1.7" ry=".8" fill="#333"/><path d="M0 -.4 L-2.6 3.2 L0 2.4 L2.6 3.2 Z" fill="#333"/></g><g transform="translate(108 43.5) rotate(-20) scale(1.45)"><ellipse cx="0" cy="-1.6" rx="3.3" ry="2" fill="#fff"/><ellipse cx="0" cy="-1.6" rx="1.7" ry=".8" fill="#333"/><path d="M0 -.4 L-2.6 3.2 L0 2.4 L2.6 3.2 Z" fill="#333"/></g><g transform="translate(155.3 14.3) rotate(-30) scale(1.45)"><ellipse cx="0" cy="-1.6" rx="3.3" ry="2" fill="#fff"/><ellipse cx="0" cy="-1.6" rx="1.7" ry=".8" fill="#333"/><path d="M0 -.4 L-2.6 3.2 L0 2.4 L2.6 3.2 Z" fill="#333"/></g><g transform="translate(157.6 34.5) rotate(10) scale(1.45)"><ellipse cx="0" cy="-1.6" rx="3.3" ry="2" fill="#fff"/><ellipse cx="0" cy="-1.6" rx="1.7" ry=".8" fill="#333"/><path d="M0 -.4 L-2.6 3.2 L0 2.4 L2.6 3.2 Z" fill="#333"/></g><g transform="translate(123 93) rotate(-25) scale(1.45)"><ellipse cx="0" cy="-1.6" rx="3.3" ry="2" fill="#fff"/><ellipse cx="0" cy="-1.6" rx="1.7" ry=".8" fill="#333"/><path d="M0 -.4 L-2.6 3.2 L0 2.4 L2.6 3.2 Z" fill="#333"/></g><g transform="translate(150.1 102.8) rotate(10) scale(1.45)"><ellipse cx="0" cy="-1.6" rx="3.3" ry="2" fill="#fff"/><ellipse cx="0" cy="-1.6" rx="1.7" ry=".8" fill="#333"/><path d="M0 -.4 L-2.6 3.2 L0 2.4 L2.6 3.2 Z" fill="#333"/></g><g transform="translate(181.6 72.8) rotate(-160) scale(1.45)"><ellipse cx="0" cy="-1.6" rx="3.3" ry="2" fill="#fff"/><ellipse cx="0" cy="-1.6" rx="1.7" ry=".8" fill="#333"/><path d="M0 -.4 L-2.6 3.2 L0 2.4 L2.6 3.2 Z" fill="#333"/></g><g transform="translate(99 111.8) rotate(15) scale(1.45)"><ellipse cx="0" cy="-1.6" rx="3.3" ry="2" fill="#fff"/><ellipse cx="0" cy="-1.6" rx="1.7" ry=".8" fill="#333"/><path d="M0 -.4 L-2.6 3.2 L0 2.4 L2.6 3.2 Z" fill="#333"/></g><g transform="translate(103.5 148.6) rotate(-165) scale(1.45)"><ellipse cx="0" cy="-1.6" rx="3.3" ry="2" fill="#fff"/><ellipse cx="0" cy="-1.6" rx="1.7" ry=".8" fill="#333"/><path d="M0 -.4 L-2.6 3.2 L0 2.4 L2.6 3.2 Z" fill="#333"/></g><g transform="translate(40.5 153.1) rotate(-25) scale(1.45)"><ellipse cx="0" cy="-1.6" rx="3.3" ry="2" fill="#fff"/><ellipse cx="0" cy="-1.6" rx="1.7" ry=".8" fill="#333"/><path d="M0 -.4 L-2.6 3.2 L0 2.4 L2.6 3.2 Z" fill="#333"/></g><g transform="translate(159.1 156.1) rotate(-150) scale(1.45)"><ellipse cx="0" cy="-1.6" rx="3.3" ry="2" fill="#fff"/><ellipse cx="0" cy="-1.6" rx="1.7" ry=".8" fill="#333"/><path d="M0 -.4 L-2.6 3.2 L0 2.4 L2.6 3.2 Z" fill="#333"/></g><g transform="translate(158.3 177.8) rotate(10) scale(1.45)"><ellipse cx="0" cy="-1.6" rx="3.3" ry="2" fill="#fff"/><ellipse cx="0" cy="-1.6" rx="1.7" ry=".8" fill="#333"/><path d="M0 -.4 L-2.6 3.2 L0 2.4 L2.6 3.2 Z" fill="#333"/></g><path d="M71.3 57 L78 14.3M73.3 44.2 L86.6 31.8M74.3 37.8 L64.9 20.7M75.3 31.4 L87.4 20.1M76.3 24.9 L70 13.6" stroke="#333" stroke-width="1.3" fill="none" stroke-linecap="round"/><path d="M81.3 34.9 Q86.8 36.8 89 31.4 Q83.4 29.5 81.3 34.9 Z" fill="#333"/><path d="M80.7 41.1 Q84.1 39.5 82.7 36 Q79.3 37.6 80.7 41.1 Z" fill="#333"/><path d="M68.9 25.4 Q68.6 19.6 62.7 19.6 Q63.1 25.4 68.9 25.4 Z" fill="#333"/><path d="M67.9 31.9 Q70.3 29 67.5 26.4 Q65.1 29.4 67.9 31.9 Z" fill="#333"/><path d="M82 23.3 Q87.6 25.1 89.7 19.7 Q84.2 17.9 82 23.3 Z" fill="#333"/><path d="M82 28.9 Q85.4 27.3 84.1 23.8 Q80.6 25.4 82 28.9 Z" fill="#333"/><path d="M74.1 18.2 Q73.7 12.4 67.9 12.4 Q68.3 18.3 74.1 18.2 Z" fill="#333"/><path d="M71.7 22.2 Q74.1 19.3 71.3 16.7 Q68.9 19.7 71.7 22.2 Z" fill="#333"/><path d="M78.4 18.7 Q80.3 15.2 77.2 12.8 Q75.2 16.2 78.4 18.7 Z" fill="#333"/><path d="M76 19.2 Q79.8 18.2 79.3 14.2 Q75.5 15.3 76 19.2 Z" fill="#333"/><path d="M171.1 51 L150.8 72M165 57.3 L163.7 69.5M162 60.5 L148.9 62.3M158.9 63.6 L157.8 74.7M155.9 66.8 L147.2 68" stroke="#333" stroke-width="1.3" fill="none" stroke-linecap="round"/><path d="M163 63.4 Q160 68.4 164.8 71.7 Q167.8 66.7 163 63.4 Z" fill="#333"/><path d="M167.3 61.8 Q163.7 62.9 164.5 66.6 Q168.1 65.5 167.3 61.8 Z" fill="#333"/><path d="M155.1 62.8 Q151.6 58.1 146.7 61.3 Q150.2 66 155.1 62.8 Z" fill="#333"/><path d="M156.9 58.4 Q153.2 57.7 152.3 61.4 Q156 62.1 156.9 58.4 Z" fill="#333"/><path d="M157.1 68.5 Q154.1 73.5 158.9 76.8 Q161.9 71.8 157.1 68.5 Z" fill="#333"/><path d="M161.3 67.5 Q157.6 68.5 158.5 72.2 Q162.1 71.2 161.3 67.5 Z" fill="#333"/><path d="M153.4 68.5 Q149.9 63.8 145 67 Q148.5 71.7 153.4 68.5 Z" fill="#333"/><path d="M153.2 64.4 Q149.5 63.7 148.6 67.4 Q152.3 68 153.2 64.4 Z" fill="#333"/><path d="M153.1 68.2 Q149.5 69.9 150.6 73.7 Q154.2 72 153.1 68.2 Z" fill="#333"/><path d="M155.3 69.2 Q151.6 67.8 149.7 71.3 Q153.5 72.7 155.3 69.2 Z" fill="#333"/><path d="M60 93.8 L39.3 119.3M53.8 101.4 L40.4 104.5M50.7 105.3 L50.4 120.1M47.6 109.1 L35.4 111.9M44.5 112.9 L44.3 122.8" stroke="#333" stroke-width="1.3" fill="none" stroke-linecap="round"/><path d="M46.5 104.5 Q42.7 100.1 38.1 103.7 Q42 108.1 46.5 104.5 Z" fill="#333"/><path d="M48.2 99.9 Q44.5 99.5 43.9 103.3 Q47.7 103.6 48.2 99.9 Z" fill="#333"/><path d="M49.2 114 Q46.6 119.2 51.7 122.1 Q54.3 116.9 49.2 114 Z" fill="#333"/><path d="M53.4 111 Q49.8 112.3 50.9 115.9 Q54.5 114.6 53.4 111 Z" fill="#333"/><path d="M41.6 111.8 Q37.7 107.5 33.1 111.1 Q37 115.4 41.6 111.8 Z" fill="#333"/><path d="M42.7 107.4 Q38.9 107 38.4 110.8 Q42.1 111.1 42.7 107.4 Z" fill="#333"/><path d="M43.1 116.7 Q40.5 121.9 45.6 124.8 Q48.2 119.6 43.1 116.7 Z" fill="#333"/><path d="M47.2 115.9 Q43.7 117.2 44.8 120.8 Q48.3 119.5 47.2 115.9 Z" fill="#333"/><path d="M41.2 115.3 Q37.8 117.3 39.3 121 Q42.7 119 41.2 115.3 Z" fill="#333"/><path d="M43.6 116 Q39.8 115 38.2 118.7 Q42 119.7 43.6 116 Z" fill="#333"/><path d="M147.8 156.8 L141.1 120M145.8 145.8 L134 135.4M144.8 140.3 L152.6 125.4M143.8 134.8 L133.1 125.3M142.7 129.2 L147.9 119.3" stroke="#333" stroke-width="1.3" fill="none" stroke-linecap="round"/><path d="M139.4 138.4 Q137.1 133 131.6 135 Q133.9 140.4 139.4 138.4 Z" fill="#333"/><path d="M139.4 143.8 Q140.6 140.2 137.2 138.7 Q135.9 142.3 139.4 143.8 Z" fill="#333"/><path d="M148.6 130.1 Q154.4 130 154.7 124.2 Q148.8 124.3 148.6 130.1 Z" fill="#333"/><path d="M150.3 135.6 Q153.1 132.9 150.6 130.1 Q147.9 132.7 150.3 135.6 Z" fill="#333"/><path d="M138.5 128.4 Q136.2 123 130.7 125 Q133 130.3 138.5 128.4 Z" fill="#333"/><path d="M137.9 133.3 Q139.2 129.7 135.8 128.2 Q134.5 131.8 137.9 133.3 Z" fill="#333"/><path d="M144 124 Q149.8 123.9 150 118.1 Q144.2 118.2 144 124 Z" fill="#333"/><path d="M146.9 127.3 Q149.6 124.6 147.1 121.8 Q144.4 124.4 146.9 127.3 Z" fill="#333"/><path d="M142.8 124.1 Q143.6 120.2 139.8 118.9 Q139.1 122.8 142.8 124.1 Z" fill="#333"/><path d="M140.8 125.4 Q144 123.2 142.3 119.6 Q139 121.9 140.8 125.4 Z" fill="#333"/><path d="M197.3 107.3 L210.8 77.3M201.4 98.3 L213.6 91.8M203.4 93.8 L199.9 79.4M205.4 89.3 L216.5 83.5M207.5 84.8 L205.1 75.2" stroke="#333" stroke-width="1.3" fill="none" stroke-linecap="round"/><path d="M207.7 93.5 Q212.5 96.7 216 92.1 Q211.2 88.8 207.7 93.5 Z" fill="#333"/><path d="M207.2 98.4 Q210.9 97.7 210.5 94 Q206.8 94.6 207.2 98.4 Z" fill="#333"/><path d="M202.6 85 Q203.8 79.2 198.1 77.7 Q197 83.5 202.6 85 Z" fill="#333"/><path d="M199.4 89 Q202.5 86.8 200.4 83.6 Q197.4 85.8 199.4 89 Z" fill="#333"/><path d="M210.5 85.1 Q215.4 88.3 218.9 83.7 Q214 80.4 210.5 85.1 Z" fill="#333"/><path d="M210.6 89.7 Q214.3 89.1 213.9 85.3 Q210.2 85.9 210.6 89.7 Z" fill="#333"/><path d="M207.8 80.8 Q209 75 203.3 73.5 Q202.2 79.2 207.8 80.8 Z" fill="#333"/><path d="M204.1 82.6 Q207.2 80.4 205.1 77.2 Q202.1 79.4 204.1 82.6 Z" fill="#333"/><path d="M210 81.6 Q212.8 78.8 210.4 75.7 Q207.6 78.5 210 81.6 Z" fill="#333"/><path d="M207.5 81.5 Q211.5 81.5 212.1 77.6 Q208.1 77.6 207.5 81.5 Z" fill="#333"/><path d="M51 206.3 L64.8 175.9M55.2 197.2 L51.9 183.5M57.2 192.6 L70.6 185.6M59.3 188.1 L56.3 175.7M61.4 183.5 L70.3 178.8" stroke="#333" stroke-width="1.3" fill="none" stroke-linecap="round"/><path d="M54.6 189.1 Q55.7 183.4 50.1 181.9 Q48.9 187.6 54.6 189.1 Z" fill="#333"/><path d="M51.2 192.8 Q54.3 190.6 52.3 187.4 Q49.2 189.5 51.2 192.8 Z" fill="#333"/><path d="M64.6 187.3 Q69.5 190.5 73 185.9 Q68.1 182.6 64.6 187.3 Z" fill="#333"/><path d="M63.6 192.4 Q67.4 191.8 67 188 Q63.2 188.6 63.6 192.4 Z" fill="#333"/><path d="M59 181.3 Q60.2 175.6 54.6 174 Q53.4 179.7 59 181.3 Z" fill="#333"/><path d="M55.6 184.3 Q58.7 182.2 56.6 178.9 Q53.6 181.1 55.6 184.3 Z" fill="#333"/><path d="M64.3 180.5 Q69.2 183.7 72.7 179.1 Q67.8 175.8 64.3 180.5 Z" fill="#333"/><path d="M65.3 184.5 Q69.1 183.9 68.7 180.2 Q64.9 180.8 65.3 184.5 Z" fill="#333"/><path d="M64 180.2 Q66.8 177.4 64.4 174.2 Q61.6 177 64 180.2 Z" fill="#333"/><path d="M61.5 180.1 Q65.5 180.1 66.1 176.2 Q62.1 176.2 61.5 180.1 Z" fill="#333"/><path d="M190.9 159.1 L186.8 192.8M189.7 169.2 L179.6 179.3M189.1 174.3 L197 187.4M188.4 179.3 L179.3 188.5M187.8 184.4 L193.1 193.1" stroke="#333" stroke-width="1.3" fill="none" stroke-linecap="round"/><path d="M184.8 176 Q179.2 174.3 177.2 179.8 Q182.8 181.5 184.8 176 Z" fill="#333"/><path d="M183.9 171 Q180.5 172.8 182.1 176.2 Q185.4 174.5 183.9 171 Z" fill="#333"/><path d="M192.7 182.9 Q193.3 188.7 199.2 188.4 Q198.6 182.6 192.7 182.9 Z" fill="#333"/><path d="M194.5 177.9 Q192.2 180.9 195.1 183.4 Q197.4 180.4 194.5 177.9 Z" fill="#333"/><path d="M184.5 185.1 Q178.9 183.5 177 189 Q182.6 190.6 184.5 185.1 Z" fill="#333"/><path d="M183.2 180.6 Q179.9 182.4 181.4 185.8 Q184.7 184.1 183.2 180.6 Z" fill="#333"/><path d="M188.9 188.6 Q189.5 194.4 195.3 194.2 Q194.7 188.4 188.9 188.6 Z" fill="#333"/><path d="M191.8 185.6 Q189.5 188.6 192.4 191.1 Q194.7 188.1 191.8 185.6 Z" fill="#333"/><path d="M186.3 188.4 Q184.5 191.9 187.7 194.3 Q189.5 190.7 186.3 188.4 Z" fill="#333"/><path d="M188.7 187.8 Q184.9 189 185.5 192.9 Q189.3 191.7 188.7 187.8 Z" fill="#333"/></g><use href="#t3" x="-201" y="-201"/><use href="#t3" x="0" y="-201"/><use href="#t3" x="201" y="-201"/><use href="#t3" x="-201" y="0"/><use href="#t3" x="201" y="0"/><use href="#t3" x="-201" y="201"/><use href="#t3" x="0" y="201"/><use href="#t3" x="201" y="201"/></svg>
<svg style="left:1035px;top:257.1px;overflow:hidden" width="267.8" height="267.8" viewBox="0 0 267.8 267.8"><rect width="268" height="268" fill="#fff"/><path d="M45 15 C55.5 13.5 57 27 60 28.5 C66 18 84 18 81 30 C78 36 72 39 72 39.8 C84 37.5 96 40.5 93.8 51 C91.5 60 78 58.5 70.5 57.8 C66 67.5 60 76.5 51 75 C39 73.5 39 60 42 52.5 C34.5 51 25.5 45 28.5 37.5 C31.5 31.5 37.5 34.5 40.5 34.5 C37.5 27 37.5 16.5 45 15 Z" fill="#c8c8c8"/><ellipse cx="1.5" cy="36.8" rx="12.8" ry="8.7" fill="#c8c8c8"/><ellipse cx="3.8" cy="60.8" rx="15" ry="10.2" fill="#c8c8c8"/><ellipse cx="9" cy="0" rx="17.3" ry="5.7" fill="#c8c8c8"/><ellipse cx="57" cy="0" rx="7.5" ry="2.7" fill="#c8c8c8"/><path d="M213.1 0 C210.1 12 220.6 18 234.1 13.5 C247.6 9 255.1 21 268 18 L270.1 0 L213.1 0 Z" fill="#aaa"/><path d="M270.1 37.5 C258.1 34.5 244.6 39 247.6 46.5 C249.1 52.5 261.1 52.5 261.1 57 C252.1 58.5 238.6 63 241.6 70.5 C244.6 78 261.1 75 270.1 72 L270.1 37.5 Z" fill="#aaa"/><g fill="#6e6e6e"><circle cx="113.2" cy="23" r="9.2"/><circle cx="103.2" cy="29.8" r="9.2"/><circle cx="93.7" cy="22.3" r="9.2"/><circle cx="97.8" cy="11" r="9.2"/><circle cx="109.9" cy="11.4" r="9.2"/><circle cx="103.5" cy="19.5" r="9.2"/></g><ellipse cx="103.5" cy="19.5" rx="3.1" ry="2.7" fill="#333"/><g fill="#6e6e6e"><circle cx="151.6" cy="11.7" r="8.4"/><circle cx="140.6" cy="12.5" r="8.4"/><circle cx="136.4" cy="2.2" r="8.4"/><circle cx="144.9" cy="-4.9" r="8.4"/><circle cx="154.3" cy="1" r="8.4"/><circle cx="145.6" cy="4.5" r="8.4"/></g><ellipse cx="145.6" cy="4.5" rx="2.9" ry="2.5" fill="#333"/><g fill="#6e6e6e"><circle cx="189.4" cy="28.8" r="9.2"/><circle cx="180.7" cy="37.2" r="9.2"/><circle cx="170.1" cy="31.5" r="9.2"/><circle cx="172.2" cy="19.6" r="9.2"/><circle cx="184.1" cy="18" r="9.2"/><circle cx="179.3" cy="27" r="9.2"/></g><ellipse cx="179.3" cy="27" rx="3.1" ry="2.7" fill="#333"/><g fill="#6e6e6e"><circle cx="137.2" cy="58.2" r="8.9"/><circle cx="126.2" cy="62" r="8.9"/><circle cx="119.1" cy="52.7" r="8.9"/><circle cx="125.8" cy="43.1" r="8.9"/><circle cx="137" cy="46.6" r="8.9"/><circle cx="129.1" cy="52.5" r="8.9"/></g><ellipse cx="129.1" cy="52.5" rx="3" ry="2.7" fill="#333"/><g fill="#6e6e6e"><circle cx="178" cy="63" r="7.5"/><circle cx="172.2" cy="71" r="7.5"/><circle cx="162.8" cy="68" r="7.5"/><circle cx="162.8" cy="58.1" r="7.5"/><circle cx="172.2" cy="55" r="7.5"/><circle cx="169.6" cy="63" r="7.5"/></g><ellipse cx="169.6" cy="63" rx="2.6" ry="2.3" fill="#333"/><g fill="#6e6e6e"><circle cx="225.8" cy="55.6" r="8.1"/><circle cx="216.5" cy="60.8" r="8.1"/><circle cx="208.7" cy="53.5" r="8.1"/><circle cx="213.2" cy="43.8" r="8.1"/><circle cx="223.8" cy="45.1" r="8.1"/><circle cx="217.6" cy="51.8" r="8.1"/></g><ellipse cx="217.6" cy="51.8" rx="2.8" ry="2.4" fill="#333"/><g fill="#6e6e6e"><circle cx="192.6" cy="-3" r="4.5"/><circle cx="189.1" cy="1.8" r="4.5"/><circle cx="183.5" cy="0" r="4.5"/><circle cx="183.5" cy="-6" r="4.5"/><circle cx="189.1" cy="-7.8" r="4.5"/><circle cx="187.6" cy="-3" r="4.5"/></g><ellipse cx="187.6" cy="-3" rx="1.5" ry="1.4" fill="#333"/><g fill="#aaa"><circle cx="252.4" cy="228.2" r="8.4"/><circle cx="246.3" cy="235.4" r="8.4"/><circle cx="237" cy="233.8" r="8.4"/><circle cx="233.8" cy="225" r="8.4"/><circle cx="239.9" cy="217.7" r="8.4"/><circle cx="249.1" cy="219.4" r="8.4"/><circle cx="243.1" cy="226.6" r="8.4"/></g><ellipse cx="243.1" cy="226.6" rx="2.9" ry="2.5" fill="#333"/><path d="M222.1 270.1 C220.6 261.1 231.1 258.1 234.1 264.1 C237.1 256.6 247.6 258.1 246.1 270.1 L222.1 270.1 Z" fill="#aaa"/><ellipse cx="268.6" cy="261.1" rx="9" ry="8.3" fill="#333"/><circle cx="33.8" cy="86.3" r="9" fill="#aaa"/><ellipse cx="34.1" cy="86.3" rx="2.7" ry="2.3" fill="#333"/><path d="M33.8 95.3 L33 107.3" stroke="#333" stroke-width="3.9" stroke-linecap="round"/><path d="M30.8 116.7 C23.3 113.4 16.5 105.5 18 100.2 C19.5 95.6 29.3 96.9 33 104.9 C36.8 96.9 46.5 95.6 48 100.2 C49.5 105.5 38.3 113.4 30.8 116.7 Z" fill="#333"/><circle cx="72" cy="107.3" r="11" fill="#aaa"/><ellipse cx="72.3" cy="107.3" rx="3.3" ry="2.7" fill="#333"/><path d="M72 118.2 L70.5 135.8" stroke="#333" stroke-width="3.9" stroke-linecap="round"/><path d="M69.8 146.8 C61.3 143.1 52 134.3 53.6 128.4 C55.3 123.2 66.3 124.7 70.5 133.5 C74.7 124.7 85.7 123.2 87.4 128.4 C89.1 134.3 78.2 143.1 69.8 146.8 Z" fill="#333"/><circle cx="27.8" cy="137.3" r="11.4" fill="#aaa"/><ellipse cx="28.1" cy="137.3" rx="3.4" ry="2.9" fill="#333"/><path d="M27.8 148.7 L28.5 164.3" stroke="#333" stroke-width="3.9" stroke-linecap="round"/><path d="M30 175.9 C21.4 172 9.5 162.9 11.3 156.7 C13 151.4 24.2 152.9 28.5 162.1 C32.8 152.9 44 151.4 45.8 156.7 C47.5 162.9 38.6 172 30 175.9 Z" fill="#333"/><circle cx="244.6" cy="96" r="11" fill="#6e6e6e"/><ellipse cx="244.9" cy="96" rx="3.3" ry="2.7" fill="#333"/><path d="M244.6 107 L246.1 125.3" stroke="#333" stroke-width="3.9" stroke-linecap="round"/><path d="M246.1 135.4 C237.7 131.9 227.5 123.6 229.2 118.1 C230.9 113.3 241.9 114.6 246.1 122.9 C250.3 114.6 261.3 113.3 263 118.1 C264.7 123.6 254.5 131.9 246.1 135.4 Z" fill="#333"/><circle cx="232.6" cy="151.6" r="8.9" fill="#6e6e6e"/><ellipse cx="232.9" cy="151.6" rx="2.7" ry="2.2" fill="#333"/><path d="M232.6 160.4 L233.8 172.6" stroke="#333" stroke-width="3.9" stroke-linecap="round"/><path d="M235.6 182.6 C228.1 179.2 217.3 170.9 218.8 165.4 C220.3 160.5 230 161.9 233.8 170.2 C237.5 161.9 247.3 160.5 248.8 165.4 C250.3 170.9 243.1 179.2 235.6 182.6 Z" fill="#333"/><circle cx="-1.5" cy="102" r="9" fill="#aaa"/><path d="M-3 138.1 C6 135.1 16.5 123 14.3 118.5 C10.5 114 1.5 120 -3 124.5 Z" fill="#333"/><circle cx="268.6" cy="171.1" r="11.3" fill="#6e6e6e"/><path d="M270.1 211.6 C261.1 207.1 249.1 193.6 252.1 188.3 C256.6 183.8 265.6 192.1 270.1 196.6 Z" fill="#333"/><path d="M102 95.3 C101.3 81.9 107.3 74.3 115.2 74.3 C123 74.3 129.1 81.9 128.3 95.3 Q115.2 97.2 102 95.3 Z" fill="#aaa"/><path d="M108.6 99.8 Q103.3 105.3 99.8 112.2M115.2 99.8 Q112.6 105.6 111.8 112.8M121.7 99.8 Q125.4 105 127.3 111.8" stroke="#333" stroke-width="2" fill="none" stroke-linecap="round"/><g fill="#333"><circle cx="99.8" cy="112.2" r="2.9"/><circle cx="111.8" cy="112.8" r="2.9"/><circle cx="127.3" cy="111.8" r="2.9"/></g><path d="M145.6 111 C144.8 95.7 150.7 87 158.3 87 C166 87 171.8 95.7 171.1 111 Q158.3 113 145.6 111 Z" fill="#aaa"/><path d="M151.9 115.5 Q148 118.7 145.9 123.3M158.3 115.5 Q157.2 120.2 157.9 126.4M164.7 115.5 Q167.4 119.7 168.4 125.5" stroke="#333" stroke-width="2" fill="none" stroke-linecap="round"/><g fill="#333"><circle cx="145.9" cy="123.3" r="2.9"/><circle cx="157.9" cy="126.4" r="2.9"/><circle cx="168.4" cy="125.5" r="2.9"/></g><path d="M190.6 99 C189.8 85.2 195.8 77.3 203.7 77.3 C211.6 77.3 217.6 85.2 216.8 99 Q203.7 101 190.6 99 Z" fill="#aaa"/><path d="M197.1 103.5 Q192.7 108.2 190.1 114.3M203.7 103.5 Q202.8 108.6 203.6 115.1M210.3 103.5 Q213.5 108.2 214.9 114.3" stroke="#333" stroke-width="2" fill="none" stroke-linecap="round"/><g fill="#333"><circle cx="190.1" cy="114.3" r="2.9"/><circle cx="203.6" cy="115.1" r="2.9"/><circle cx="214.9" cy="114.3" r="2.9"/></g><path d="M111.8 150.1 C111 135.2 117.6 126.8 126.4 126.8 C135.2 126.8 141.8 135.2 141.1 150.1 Q126.4 152 111.8 150.1 Z" fill="#aaa" transform="rotate(-8 126.4 138.8)"/><path d="M119.1 154.6 Q115.1 158.7 112.8 164.3M126.4 154.6 Q124.4 159.2 124.1 165.4M133.7 154.6 Q137.3 159.1 139.1 165.1" stroke="#333" stroke-width="2" fill="none" stroke-linecap="round"/><g fill="#333"><circle cx="112.8" cy="164.3" r="2.9"/><circle cx="124.1" cy="165.4" r="2.9"/><circle cx="139.1" cy="165.1" r="2.9"/></g><path d="M179.3 157.6 C178.6 142.7 184.7 134.3 192.8 134.3 C200.9 134.3 207.1 142.7 206.3 157.6 Q192.8 159.5 179.3 157.6 Z" fill="#aaa"/><path d="M186.1 162.1 Q182.7 166.6 181.1 172.6M192.8 162.1 Q191.3 166.7 191.6 172.9M199.6 162.1 Q202.1 165.1 202.9 169.6" stroke="#333" stroke-width="2" fill="none" stroke-linecap="round"/><g fill="#333"><circle cx="181.1" cy="172.6" r="2.9"/><circle cx="191.6" cy="172.9" r="2.9"/><circle cx="202.9" cy="169.6" r="2.9"/></g><path d="M73.5 177.8 C72.8 163.5 78.6 155.3 86.3 155.3 C93.9 155.3 99.8 163.5 99 177.8 Q86.3 179.8 73.5 177.8 Z" fill="#aaa"/><path d="M79.9 182.3 Q75.2 185.3 72.3 189.8M86.3 182.3 Q83.1 187 81.8 193.1M92.7 182.3 Q94.3 185.7 94.1 190.6" stroke="#333" stroke-width="2" fill="none" stroke-linecap="round"/><g fill="#333"><circle cx="72.3" cy="189.8" r="2.9"/><circle cx="81.8" cy="193.1" r="2.9"/><circle cx="94.1" cy="190.6" r="2.9"/></g><path d="M144.8 194.3 C144.1 178.5 150.8 169.6 159.8 169.6 C168.8 169.6 175.6 178.5 174.8 194.3 Q159.8 196.3 144.8 194.3 Z" fill="#aaa"/><path d="M152.3 198.8 Q148 201.8 145.6 206.3M159.8 198.8 Q157.4 202.7 156.8 208.1M167.3 198.8 Q169.5 202.2 169.9 207.1" stroke="#333" stroke-width="2" fill="none" stroke-linecap="round"/><g fill="#333"><circle cx="145.6" cy="206.3" r="2.9"/><circle cx="156.8" cy="208.1" r="2.9"/><circle cx="169.9" cy="207.1" r="2.9"/></g><path d="M20.3 210.1 C19.5 194.3 26.3 185.3 35.3 185.3 C44.3 185.3 51 194.3 50.3 210.1 Q35.3 212 20.3 210.1 Z" fill="#c8c8c8"/><path d="M27.8 214.6 Q24 216.5 22.1 219.8M35.3 214.6 Q33.4 216.8 33.3 220.6M42.8 214.6 Q46.3 217 48 220.9" stroke="#333" stroke-width="2" fill="none" stroke-linecap="round"/><g fill="#333"><circle cx="22.1" cy="219.8" r="2.9"/><circle cx="33.3" cy="220.6" r="2.9"/><circle cx="48" cy="220.9" r="2.9"/></g><path d="M108 210.8 C107.3 195 113.3 186.1 121.2 186.1 C129.1 186.1 135.1 195 134.3 210.8 Q121.2 212.8 108 210.8 Z" fill="#c8c8c8"/><path d="M114.6 215.3 Q110.6 218.3 108.3 222.8M121.2 215.3 Q120.1 219.6 120.8 225.4M127.7 215.3 Q130.2 219.5 130.9 225.1" stroke="#333" stroke-width="2" fill="none" stroke-linecap="round"/><g fill="#333"><circle cx="108.3" cy="222.8" r="2.9"/><circle cx="120.8" cy="225.4" r="2.9"/><circle cx="130.9" cy="225.1" r="2.9"/></g><path d="M55.5 228.1 C54.8 214.7 60.9 207.1 69 207.1 C77.1 207.1 83.3 214.7 82.5 228.1 Q69 230 55.5 228.1 Z" fill="#c8c8c8"/><path d="M62.3 232.6 Q57.4 236.3 54.3 241.6M69 232.6 Q66.6 236.5 66 241.9M75.8 232.6 Q79.5 236.3 81.3 241.6" stroke="#333" stroke-width="2" fill="none" stroke-linecap="round"/><g fill="#333"><circle cx="54.3" cy="241.6" r="2.9"/><circle cx="66" cy="241.9" r="2.9"/><circle cx="81.3" cy="241.6" r="2.9"/></g><path d="M185.3 221.3 C184.6 207.5 190.4 199.6 198.1 199.6 C205.7 199.6 211.6 207.5 210.8 221.3 Q198.1 223.3 185.3 221.3 Z" fill="#aaa"/><path d="M191.7 225.8 Q188.1 229.2 186.4 234.1M198.1 225.8 Q197.2 230.5 198.1 236.6M204.5 225.8 Q207.9 230.7 209.6 237.1" stroke="#333" stroke-width="2" fill="none" stroke-linecap="round"/><g fill="#333"><circle cx="186.4" cy="234.1" r="2.9"/><circle cx="198.1" cy="236.6" r="2.9"/><circle cx="209.6" cy="237.1" r="2.9"/></g><path d="M87 258.9 C86.3 244 92.4 235.6 100.5 235.6 C108.6 235.6 114.8 244 114 258.9 Q100.5 260.8 87 258.9 Z" fill="#c8c8c8"/><path d="M93.8 263.4 Q91 268.2 90 274.6M100.5 263.4 Q99.6 268.2 100.5 274.6M107.3 263.4 Q109.3 268.2 109.5 274.6" stroke="#333" stroke-width="2" fill="none" stroke-linecap="round"/><g fill="#333"><circle cx="90" cy="274.6" r="2.9"/><circle cx="100.5" cy="274.6" r="2.9"/><circle cx="109.5" cy="274.6" r="2.9"/></g><path d="M130.6 252.9 C129.8 238.5 135.8 230.3 143.7 230.3 C151.6 230.3 157.6 238.5 156.8 252.9 Q143.7 254.8 130.6 252.9 Z" fill="#c8c8c8"/><path d="M137.1 257.4 Q132.2 263 129.1 270.1M143.7 257.4 Q145.1 264.5 144.8 273.1M150.2 257.4 Q153.3 263 154.6 270.1" stroke="#333" stroke-width="2" fill="none" stroke-linecap="round"/><g fill="#333"><circle cx="129.1" cy="270.1" r="2.9"/><circle cx="144.8" cy="273.1" r="2.9"/><circle cx="154.6" cy="270.1" r="2.9"/></g><path d="M12 269.4 C11.3 252.6 17 243.1 24.4 243.1 C31.8 243.1 37.5 252.6 36.8 269.4 Q24.4 271.3 12 269.4 Z" fill="#c8c8c8"/><path d="" stroke="#333" stroke-width="2" fill="none" stroke-linecap="round"/><g fill="#333"></g><path d="M57 284.4 C56.3 269 61.8 260.4 69 260.4 C76.2 260.4 81.8 269 81 284.4 Q69 286.3 57 284.4 Z" fill="#c8c8c8"/><path d="" stroke="#333" stroke-width="2" fill="none" stroke-linecap="round"/><g fill="#333"></g></svg>
<svg style="left:1316.2px;top:257.1px;overflow:hidden" width="267.8" height="267.8" viewBox="0 0 267.8 267.8"><rect width="268" height="268" fill="#e4e4e4"/><g id="t5"><path d="M1.1 40.5 C14.1 31.4 18.9 13.7 12.4 -1.5 C-0.9 8.5 -5.6 26.1 1.1 40.5 Z" fill="#fff"/><path d="M1.6 38.6 q0.7 3.3 -2.3 4.6" stroke="#fff" stroke-width="1" fill="none"/><path d="M2.2 36.3 L10.8 4.4M4.5 30.5 l2.9 -2.7M3.2 30.1 l-1.1 -3.7M5.9 25 l2.6 -2.5M4.7 24.7 l-1.1 -3.4M7.4 19.5 l2.4 -2.2M6.2 19.2 l-1 -3.1M8.9 14.1 l2.2 -2M7.6 13.7 l-0.9 -2.8M10.3 8.6 l1.9 -1.8M9.1 8.3 l-0.8 -2.5" stroke="#3c3c3c" stroke-width=".8" fill="none" stroke-linecap="round"/><path d="M17.8 42.2 C32.2 35.5 39.9 18.9 36.2 2.8 C21.4 10.3 13.7 26.9 17.8 42.2 Z" fill="#969696"/><path d="M18.7 40.4 q0.1 3.4 -3 4.1" stroke="#969696" stroke-width="1" fill="none"/><path d="M19.7 38.3 L33.6 8.3M22.9 32.9 l3.3 -2.1M21.7 32.4 l-0.5 -3.9M25.3 27.8 l3 -2M24.1 27.2 l-0.4 -3.6M27.6 22.6 l2.8 -1.8M26.5 22.1 l-0.4 -3.3M30 17.5 l2.5 -1.6M28.9 17 l-0.4 -3M32.4 12.4 l2.2 -1.5M31.3 11.9 l-0.3 -2.6" stroke="#3c3c3c" stroke-width=".8" fill="none" stroke-linecap="round"/><path d="M57 41.1 C65.5 27.6 62.9 9.5 51 -2 C42.7 12.3 45.2 30.4 57 41.1 Z" fill="#c6c6c6"/><path d="M56.8 39.1 q1.9 2.8 -0.3 5.1" stroke="#c6c6c6" stroke-width="1" fill="none"/><path d="M56.4 36.7 L51.8 4M56.2 30.5 l1.6 -3.6M54.9 30.7 l-2.5 -3M55.4 24.9 l1.5 -3.3M54.2 25.1 l-2.3 -2.8M54.6 19.3 l1.3 -3M53.4 19.5 l-2.1 -2.5M53.8 13.7 l1.2 -2.7M52.6 13.8 l-1.9 -2.3M53.1 8.1 l1.1 -2.4M51.8 8.2 l-1.7 -2" stroke="#3c3c3c" stroke-width=".8" fill="none" stroke-linecap="round"/><path d="M66 64.8 C78.5 55 82.3 37.1 75.1 22.2 C62.4 32.9 58.6 50.8 66 64.8 Z" fill="#fff"/><path d="M66.4 62.8 q0.8 3.2 -2 4.7" stroke="#fff" stroke-width="1" fill="none"/><path d="M66.9 60.5 L73.8 28.2M68.8 54.6 l2.7 -2.8M67.6 54.3 l-1.3 -3.7M70 49 l2.5 -2.6M68.8 48.8 l-1.2 -3.4M71.2 43.5 l2.3 -2.4M69.9 43.2 l-1.1 -3.1M72.4 38 l2.1 -2.1M71.1 37.7 l-1 -2.8M73.5 32.4 l1.9 -1.9M72.3 32.2 l-0.9 -2.5" stroke="#3c3c3c" stroke-width=".8" fill="none" stroke-linecap="round"/><path d="M93.8 57.8 C105.4 43.9 105.4 23.1 93.8 8.3 C82.2 23.1 82.2 43.9 93.8 57.8 Z" fill="#aaa"/><path d="M93.8 55.8 q1.5 3 -1 5" stroke="#aaa" stroke-width="1" fill="none"/><path d="M93.8 52.8 L93.8 15.2M94.4 45.9 l2.4 -3.8M93.2 45.9 l-2.4 -3.8M94.4 39.4 l2.2 -3.5M93.2 39.4 l-2.2 -3.5M94.4 33 l2 -3.2M93.2 33 l-2 -3.2M94.4 26.5 l1.8 -2.9M93.2 26.5 l-1.8 -2.9M94.4 20.1 l1.6 -2.6M93.2 20.1 l-1.6 -2.6" stroke="#3c3c3c" stroke-width=".8" fill="none" stroke-linecap="round"/><path d="M123.1 60.3 C130.5 46.3 126.7 28.4 114 17.7 C106.8 32.6 110.6 50.5 123.1 60.3 Z" fill="#c6c6c6"/><path d="M122.7 58.3 q2.1 2.6 0.1 5.1" stroke="#c6c6c6" stroke-width="1" fill="none"/><path d="M122.2 56 L115.3 23.7M121.5 49.8 l1.3 -3.7M120.2 50.1 l-2.7 -2.8M120.3 44.3 l1.2 -3.4M119.1 44.5 l-2.5 -2.6M119.1 38.7 l1.1 -3.1M117.9 39 l-2.3 -2.4M118 33.2 l1 -2.8M116.7 33.5 l-2.1 -2.1M116.8 27.7 l0.9 -2.5M115.5 27.9 l-1.9 -1.9" stroke="#3c3c3c" stroke-width=".8" fill="none" stroke-linecap="round"/><path d="M154.3 64.2 C157.6 48.7 149 32.5 133.8 25.8 C131 42.1 139.5 58.3 154.3 64.2 Z" fill="#969696"/><path d="M153.3 62.5 q2.7 1.9 1.5 4.9" stroke="#969696" stroke-width="1" fill="none"/><path d="M152.2 60.4 L136.7 31.2M149.9 54.6 l0.3 -3.9M148.7 55.2 l-3.4 -2M147.2 49.6 l0.3 -3.6M146.1 50.2 l-3.1 -1.8M144.5 44.6 l0.2 -3.3M143.4 45.2 l-2.8 -1.6M141.9 39.6 l0.2 -3M140.8 40.2 l-2.6 -1.5M139.2 34.6 l0.2 -2.7M138.1 35.2 l-2.3 -1.3" stroke="#3c3c3c" stroke-width=".8" fill="none" stroke-linecap="round"/><path d="M168 44.7 C174 30 168.3 12.6 154.6 3.3 C148.9 18.9 154.6 36.3 168 44.7 Z" fill="#fff"/><path d="M167.4 42.8 q2.4 2.4 0.6 5.1" stroke="#fff" stroke-width="1" fill="none"/><path d="M166.7 40.6 L156.5 9.1M165.4 34.4 l0.9 -3.8M164.2 34.8 l-3 -2.5M163.6 29.1 l0.9 -3.5M162.4 29.4 l-2.8 -2.3M161.9 23.7 l0.8 -3.2M160.7 24.1 l-2.5 -2.1M160.1 18.3 l0.7 -2.9M158.9 18.7 l-2.3 -1.9M158.4 12.9 l0.6 -2.6M157.2 13.3 l-2 -1.7" stroke="#3c3c3c" stroke-width=".8" fill="none" stroke-linecap="round"/><path d="M180.4 41.2 C191.7 29.9 193.3 11.7 184.2 -2.2 C172.9 9.9 171.3 28.2 180.4 41.2 Z" fill="#aaa"/><path d="M180.6 39.2 q1.2 3.1 -1.4 4.9" stroke="#aaa" stroke-width="1" fill="none"/><path d="M180.8 36.8 L183.7 3.9M182 30.7 l2.4 -3.1M180.7 30.6 l-1.8 -3.5M182.5 25.1 l2.2 -2.9M181.2 24.9 l-1.6 -3.2M183 19.4 l2 -2.6M181.7 19.3 l-1.5 -2.9M183.5 13.8 l1.8 -2.4M182.2 13.7 l-1.4 -2.7M184 8.1 l1.6 -2.1M182.7 8 l-1.2 -2.4" stroke="#3c3c3c" stroke-width=".8" fill="none" stroke-linecap="round"/><path d="M28.9 80.4 C31.6 64.7 22.5 48.9 7.1 42.7 C4.8 59.1 14 74.9 28.9 80.4 Z" fill="#aaa"/><path d="M27.9 78.6 q2.8 1.8 1.6 4.8" stroke="#aaa" stroke-width="1" fill="none"/><path d="M26.7 76.6 L10.2 48M24.1 70.9 l0.1 -3.9M23 71.5 l-3.5 -1.8M21.3 66 l0.1 -3.6M20.2 66.6 l-3.2 -1.7M18.5 61.1 l0.1 -3.3M17.4 61.7 l-2.9 -1.5M15.7 56.2 l0.1 -3M14.6 56.8 l-2.6 -1.4M12.8 51.3 l0.1 -2.7M11.7 51.9 l-2.4 -1.3" stroke="#3c3c3c" stroke-width=".8" fill="none" stroke-linecap="round"/><path d="M50.6 79.5 C57.4 65.1 52.6 47.5 39.4 37.5 C32.9 52.8 37.6 70.4 50.6 79.5 Z" fill="#c6c6c6"/><path d="M50.1 77.6 q2.2 2.5 0.3 5.1" stroke="#c6c6c6" stroke-width="1" fill="none"/><path d="M49.5 75.3 L41 43.4M48.5 69.1 l1.1 -3.7M47.3 69.5 l-2.9 -2.7M47.1 63.7 l1.1 -3.4M45.8 64 l-2.6 -2.5M45.6 58.2 l1 -3.1M44.4 58.5 l-2.4 -2.2M44.1 52.8 l0.9 -2.8M42.9 53.1 l-2.2 -2M42.7 47.3 l0.8 -2.5M41.4 47.6 l-1.9 -1.8" stroke="#3c3c3c" stroke-width=".8" fill="none" stroke-linecap="round"/><path d="M12.2 91.7 C16.3 76.4 8.6 59.8 -6.2 52.3 C-9.9 68.5 -2.2 85 12.2 91.7 Z" fill="#969696"/><path d="M11.4 89.9 q2.6 2.1 1.2 5" stroke="#969696" stroke-width="1" fill="none"/><path d="M10.4 87.8 L-3.6 57.8M8.3 81.9 l0.5 -3.9M7.1 82.4 l-3.3 -2.1M5.9 76.8 l0.4 -3.6M4.8 77.3 l-3 -2M3.5 71.6 l0.4 -3.3M2.4 72.2 l-2.8 -1.8M1.1 66.5 l0.4 -3M0 67 l-2.5 -1.6M-1.3 61.4 l0.3 -2.6M-2.4 61.9 l-2.2 -1.5" stroke="#3c3c3c" stroke-width=".8" fill="none" stroke-linecap="round"/><path d="M59.6 96.9 C74.6 91.4 83.7 75.6 81.4 59.2 C66 65.4 56.9 81.2 59.6 96.9 Z" fill="#969696"/><path d="M60.6 95.1 q-0.2 3.3 -3.4 3.8" stroke="#969696" stroke-width="1" fill="none"/><path d="M61.8 93.1 L78.4 64.5M65.5 88 l3.5 -1.8M64.4 87.4 l-0.1 -3.9M68.3 83.1 l3.2 -1.7M67.2 82.5 l-0.1 -3.6M71.2 78.2 l2.9 -1.5M70.1 77.6 l-0.1 -3.3M74 73.3 l2.6 -1.4M72.9 72.7 l-0.1 -3M76.8 68.4 l2.4 -1.3M75.7 67.8 l-0.1 -2.7" stroke="#3c3c3c" stroke-width=".8" fill="none" stroke-linecap="round"/><path d="M75.3 116.8 C90.1 110.8 98.6 94.6 95.7 78.3 C80.6 85.1 72 101.2 75.3 116.8 Z" fill="#aaa"/><path d="M76.3 115 q-0.1 3.4 -3.2 3.9" stroke="#aaa" stroke-width="1" fill="none"/><path d="M77.4 112.9 L92.9 83.7M80.9 107.7 l3.4 -2M79.7 107.1 l-0.3 -3.9M83.5 102.7 l3.1 -1.8M82.4 102.1 l-0.3 -3.6M86.2 97.7 l2.8 -1.6M85 97.1 l-0.2 -3.3M88.8 92.7 l2.6 -1.5M87.7 92.1 l-0.2 -3M91.5 87.7 l2.3 -1.3M90.4 87.1 l-0.2 -2.7" stroke="#3c3c3c" stroke-width=".8" fill="none" stroke-linecap="round"/><path d="M125 94.2 C128.3 78.7 119.7 62.6 104.6 55.8 C101.7 72.1 110.3 88.3 125 94.2 Z" fill="#aaa"/><path d="M124.1 92.5 q2.7 1.9 1.5 4.9" stroke="#aaa" stroke-width="1" fill="none"/><path d="M123 90.4 L107.4 61.2M120.6 84.6 l0.3 -3.9M119.5 85.2 l-3.4 -2M117.9 79.6 l0.3 -3.6M116.8 80.2 l-3.1 -1.8M115.3 74.6 l0.2 -3.3M114.2 75.2 l-2.8 -1.6M112.6 69.6 l0.2 -3M111.5 70.2 l-2.6 -1.5M110 64.6 l0.2 -2.7M108.9 65.2 l-2.3 -1.3" stroke="#3c3c3c" stroke-width=".8" fill="none" stroke-linecap="round"/><path d="M155.8 95.9 C157.2 80 146.7 65 130.8 60.2 C130 76.8 140.4 91.7 155.8 95.9 Z" fill="#fff"/><path d="M154.6 94.2 q2.9 1.6 2 4.7" stroke="#fff" stroke-width="1" fill="none"/><path d="M153.3 92.3 L134.3 65.2M150.2 86.8 l-0.2 -3.9M149.2 87.5 l-3.6 -1.5M147 82.2 l-0.2 -3.6M145.9 82.9 l-3.3 -1.4M143.7 77.5 l-0.2 -3.3M142.7 78.3 l-3 -1.3M140.5 72.9 l-0.2 -3M139.5 73.6 l-2.7 -1.2M137.3 68.3 l-0.1 -2.7M136.2 69 l-2.5 -1" stroke="#3c3c3c" stroke-width=".8" fill="none" stroke-linecap="round"/><path d="M169.2 98.2 C180.4 87 182 68.8 173 54.9 C161.7 67 160.1 85.2 169.2 98.2 Z" fill="#c6c6c6"/><path d="M169.3 96.2 q1.2 3.1 -1.4 4.9" stroke="#c6c6c6" stroke-width="1" fill="none"/><path d="M169.6 93.9 L172.4 60.9M170.7 87.7 l2.4 -3.1M169.5 87.6 l-1.8 -3.5M171.2 82.1 l2.2 -2.9M170 82 l-1.6 -3.2M171.7 76.4 l2 -2.6M170.4 76.3 l-1.5 -2.9M172.2 70.8 l1.8 -2.4M170.9 70.7 l-1.4 -2.7M172.7 65.2 l1.6 -2.1M171.4 65.1 l-1.2 -2.4" stroke="#3c3c3c" stroke-width=".8" fill="none" stroke-linecap="round"/><path d="M1.2 123.5 C16.3 118.6 26 103.1 24.3 86.6 C8.7 92.3 -1 107.8 1.2 123.5 Z" fill="#fff"/><path d="M2.3 121.8 q-0.3 3.3 -3.5 3.7" stroke="#fff" stroke-width="1" fill="none"/><path d="M3.5 119.8 L21.1 91.8M7.4 114.8 l3.5 -1.7M6.3 114.2 l0 -3.9M10.4 110.1 l3.2 -1.6M9.3 109.4 l0 -3.6M13.4 105.3 l3 -1.4M12.3 104.6 l0 -3.3M16.4 100.5 l2.7 -1.3M15.3 99.8 l0 -3M19.4 95.7 l2.4 -1.2M18.3 95 l0 -2.7" stroke="#3c3c3c" stroke-width=".8" fill="none" stroke-linecap="round"/><path d="M56.2 129.7 C61.1 114.6 54.2 97.6 39.9 89.4 C35.3 105.3 42.1 122.2 56.2 129.7 Z" fill="#969696"/><path d="M55.4 127.9 q2.5 2.2 0.9 5" stroke="#969696" stroke-width="1" fill="none"/><path d="M54.5 125.7 L42.2 95M52.8 119.7 l0.7 -3.9M51.6 120.1 l-3.2 -2.3M50.7 114.4 l0.6 -3.5M49.5 114.9 l-2.9 -2.1M48.6 109.2 l0.6 -3.2M47.4 109.6 l-2.7 -1.9M46.4 103.9 l0.5 -2.9M45.3 104.4 l-2.4 -1.7M44.3 98.7 l0.5 -2.6M43.1 99.2 l-2.2 -1.6" stroke="#3c3c3c" stroke-width=".8" fill="none" stroke-linecap="round"/><path d="M35.6 148.6 C42.4 134.2 37.6 116.5 24.4 106.5 C17.9 121.8 22.6 139.4 35.6 148.6 Z" fill="#c6c6c6"/><path d="M35.1 146.6 q2.2 2.5 0.3 5.1" stroke="#c6c6c6" stroke-width="1" fill="none"/><path d="M34.5 144.4 L26 112.4M33.5 138.2 l1.1 -3.7M32.3 138.5 l-2.9 -2.7M32.1 132.7 l1.1 -3.4M30.8 133 l-2.6 -2.5M30.6 127.2 l1 -3.1M29.4 127.6 l-2.4 -2.2M29.1 121.8 l0.9 -2.8M27.9 122.1 l-2.2 -2M27.7 116.3 l0.8 -2.5M26.4 116.6 l-1.9 -1.8" stroke="#3c3c3c" stroke-width=".8" fill="none" stroke-linecap="round"/><path d="M60.1 152.2 C75.7 148.9 86.9 134.5 86.9 117.9 C70.8 121.9 59.6 136.3 60.1 152.2 Z" fill="#fff"/><path d="M61.4 150.6 q-0.7 3.3 -3.9 3.3" stroke="#fff" stroke-width="1" fill="none"/><path d="M62.8 148.8 L83.2 122.7M67.2 144.2 l3.7 -1.3M66.2 143.5 l0.4 -3.9M70.6 139.8 l3.4 -1.2M69.6 139 l0.4 -3.6M74.1 135.3 l3.1 -1.1M73.1 134.5 l0.3 -3.3M77.6 130.9 l2.8 -1M76.6 130.1 l0.3 -3M81.1 126.4 l2.5 -0.9M80.1 125.6 l0.3 -2.6" stroke="#3c3c3c" stroke-width=".8" fill="none" stroke-linecap="round"/><path d="M101.3 135.5 C113.4 125.2 116.6 107.2 108.8 92.6 C96.5 103.7 93.3 121.7 101.3 135.5 Z" fill="#fff"/><path d="M101.6 133.5 q1 3.2 -1.9 4.8" stroke="#fff" stroke-width="1" fill="none"/><path d="M102 131.2 L107.8 98.6M103.7 125.2 l2.6 -2.9M102.5 124.9 l-1.5 -3.6M104.7 119.6 l2.4 -2.7M103.5 119.4 l-1.3 -3.3M105.7 114 l2.2 -2.4M104.4 113.8 l-1.2 -3.1M106.7 108.4 l2 -2.2M105.4 108.2 l-1.1 -2.8M107.7 102.9 l1.8 -2M106.4 102.6 l-1 -2.5" stroke="#3c3c3c" stroke-width=".8" fill="none" stroke-linecap="round"/><path d="M137.2 141.7 C142.1 126.6 135.3 109.7 120.9 101.4 C116.3 117.3 123.2 134.2 137.2 141.7 Z" fill="#c6c6c6"/><path d="M136.5 139.9 q2.5 2.2 0.9 5" stroke="#c6c6c6" stroke-width="1" fill="none"/><path d="M135.6 137.7 L123.2 107M133.8 131.7 l0.7 -3.9M132.6 132.1 l-3.2 -2.3M131.7 126.4 l0.6 -3.5M130.5 126.9 l-2.9 -2.1M129.6 121.2 l0.6 -3.2M128.4 121.7 l-2.7 -1.9M127.5 115.9 l0.5 -2.9M126.3 116.4 l-2.4 -1.7M125.3 110.7 l0.5 -2.6M124.2 111.2 l-2.2 -1.6" stroke="#3c3c3c" stroke-width=".8" fill="none" stroke-linecap="round"/><path d="M159.3 133.8 C163.4 118.4 155.6 101.8 140.9 94.3 C137.1 110.5 144.9 127 159.3 133.8 Z" fill="#aaa"/><path d="M158.4 132 q2.6 2.1 1.2 5" stroke="#aaa" stroke-width="1" fill="none"/><path d="M157.4 129.8 L143.4 99.8M155.4 123.9 l0.5 -3.9M154.2 124.4 l-3.3 -2.1M153 118.8 l0.4 -3.6M151.8 119.3 l-3 -2M150.6 113.6 l0.4 -3.3M149.4 114.2 l-2.8 -1.8M148.2 108.5 l0.4 -3M147 109.1 l-2.5 -1.6M145.8 103.4 l0.3 -2.6M144.6 103.9 l-2.2 -1.5" stroke="#3c3c3c" stroke-width=".8" fill="none" stroke-linecap="round"/><path d="M168.2 159 C182.2 151.5 189 134.6 184.5 118.6 C170.1 126.9 163.3 143.9 168.2 159 Z" fill="#969696"/><path d="M168.9 157.1 q0.3 3.3 -2.8 4.3" stroke="#969696" stroke-width="1" fill="none"/><path d="M169.8 154.9 L182.2 124.3M172.7 149.4 l3.2 -2.3M171.5 148.9 l-0.7 -3.9M174.8 144.2 l2.9 -2.1M173.7 143.7 l-0.6 -3.5M177 138.9 l2.7 -1.9M175.8 138.4 l-0.6 -3.2M179.1 133.7 l2.4 -1.7M177.9 133.2 l-0.5 -2.9M181.2 128.4 l2.2 -1.6M180 127.9 l-0.5 -2.6" stroke="#3c3c3c" stroke-width=".8" fill="none" stroke-linecap="round"/><path d="M171.4 122.4 C186.4 116.9 195.5 101.1 193.2 84.7 C177.8 90.9 168.7 106.7 171.4 122.4 Z" fill="#aaa"/><path d="M172.4 120.7 q-0.2 3.3 -3.4 3.8" stroke="#aaa" stroke-width="1" fill="none"/><path d="M173.6 118.6 L190.2 90M177.3 113.5 l3.5 -1.8M176.2 112.9 l-0.1 -3.9M180.1 108.6 l3.2 -1.7M179 108 l-0.1 -3.6M182.9 103.7 l2.9 -1.5M181.8 103.1 l-0.1 -3.3M185.8 98.8 l2.6 -1.4M184.7 98.2 l-0.1 -3M188.6 93.9 l2.4 -1.3M187.5 93.3 l-0.1 -2.7" stroke="#3c3c3c" stroke-width=".8" fill="none" stroke-linecap="round"/><path d="M10.1 163.6 C16.8 149.2 12.1 131.5 -1.1 121.5 C-7.6 136.8 -2.9 154.4 10.1 163.6 Z" fill="#aaa"/><path d="M9.6 161.6 q2.2 2.5 0.3 5.1" stroke="#aaa" stroke-width="1" fill="none"/><path d="M9 159.4 L0.4 127.4M8 153.2 l1.1 -3.7M6.8 153.5 l-2.9 -2.7M6.5 147.7 l1.1 -3.4M5.3 148 l-2.6 -2.5M5.1 142.3 l1 -3.1M3.8 142.6 l-2.4 -2.2M3.6 136.8 l0.9 -2.8M2.4 137.1 l-2.2 -2M2.1 131.3 l0.8 -2.5M0.9 131.7 l-1.9 -1.8" stroke="#3c3c3c" stroke-width=".8" fill="none" stroke-linecap="round"/><path d="M39.2 183.3 C43.3 167.9 35.6 151.4 20.8 143.8 C17.1 160 24.8 176.6 39.2 183.3 Z" fill="#aaa"/><path d="M38.4 181.5 q2.6 2.1 1.2 5" stroke="#aaa" stroke-width="1" fill="none"/><path d="M37.4 179.3 L23.4 149.4M35.3 173.4 l0.5 -3.9M34.2 174 l-3.3 -2.1M32.9 168.3 l0.4 -3.6M31.8 168.8 l-3 -2M30.5 163.2 l0.4 -3.3M29.4 163.7 l-2.8 -1.8M28.1 158 l0.4 -3M27 158.6 l-2.5 -1.6M25.7 152.9 l0.3 -2.6M24.6 153.4 l-2.2 -1.5" stroke="#3c3c3c" stroke-width=".8" fill="none" stroke-linecap="round"/><path d="M67.3 182.9 C68.6 167.1 58.1 152.1 42.3 147.2 C41.4 163.8 51.9 178.8 67.3 182.9 Z" fill="#fff"/><path d="M66.1 181.3 q2.9 1.6 2 4.7" stroke="#fff" stroke-width="1" fill="none"/><path d="M64.8 179.3 L45.8 152.2M61.7 173.8 l-0.2 -3.9M60.7 174.6 l-3.6 -1.5M58.5 169.2 l-0.2 -3.6M57.4 169.9 l-3.3 -1.4M55.2 164.6 l-0.2 -3.3M54.2 165.3 l-3 -1.3M52 159.9 l-0.2 -3M50.9 160.7 l-2.7 -1.2M48.7 155.3 l-0.1 -2.7M47.7 156 l-2.5 -1" stroke="#3c3c3c" stroke-width=".8" fill="none" stroke-linecap="round"/><path d="M70.9 179.4 C85.8 174 95 158.1 92.7 141.7 C77.3 147.9 68.2 163.8 70.9 179.4 Z" fill="#aaa"/><path d="M71.9 177.7 q-0.2 3.3 -3.4 3.8" stroke="#aaa" stroke-width="1" fill="none"/><path d="M73.1 175.6 L89.6 147M76.7 170.6 l3.5 -1.8M75.6 169.9 l-0.1 -3.9M79.6 165.7 l3.2 -1.7M78.5 165 l-0.1 -3.6M82.4 160.8 l2.9 -1.5M81.3 160.1 l-0.1 -3.3M85.2 155.9 l2.6 -1.4M84.1 155.2 l-0.1 -3M88.1 151 l2.4 -1.3M87 150.3 l-0.1 -2.7" stroke="#3c3c3c" stroke-width=".8" fill="none" stroke-linecap="round"/><path d="M102.8 204.1 C114.8 189.8 114.8 168.4 102.8 153.1 C90.8 168.4 90.8 189.8 102.8 204.1 Z" fill="#969696"/><path d="M102.8 202.1 q1.5 3 -1 5" stroke="#969696" stroke-width="1" fill="none"/><path d="M102.8 199 L102.8 160.2M103.4 191.8 l2.4 -3.9M102.2 191.8 l-2.4 -3.9M103.4 185.2 l2.2 -3.6M102.2 185.2 l-2.2 -3.6M103.4 178.6 l2 -3.3M102.2 178.6 l-2 -3.3M103.4 171.9 l1.8 -3M102.2 171.9 l-1.8 -3M103.4 165.3 l1.7 -2.6M102.2 165.3 l-1.7 -2.6" stroke="#3c3c3c" stroke-width=".8" fill="none" stroke-linecap="round"/><path d="M131.8 175.3 C135.1 159.7 126.5 143.6 111.3 136.9 C108.4 153.2 117 169.3 131.8 175.3 Z" fill="#aaa"/><path d="M130.8 173.5 q2.7 1.9 1.5 4.9" stroke="#aaa" stroke-width="1" fill="none"/><path d="M129.7 171.4 L114.2 142.2M127.4 165.6 l0.3 -3.9M126.2 166.2 l-3.4 -2M124.7 160.6 l0.3 -3.6M123.6 161.2 l-3.1 -1.8M122 155.6 l0.2 -3.3M120.9 156.2 l-2.8 -1.6M119.4 150.6 l0.2 -3M118.3 151.2 l-2.6 -1.5M116.7 145.6 l0.2 -2.7M115.6 146.2 l-2.3 -1.3" stroke="#3c3c3c" stroke-width=".8" fill="none" stroke-linecap="round"/><path d="M144.4 187.6 C157.4 178.5 162.2 160.8 155.7 145.5 C142.5 155.5 137.7 173.2 144.4 187.6 Z" fill="#fff"/><path d="M144.9 185.7 q0.7 3.3 -2.3 4.6" stroke="#fff" stroke-width="1" fill="none"/><path d="M145.6 183.4 L154.1 151.4M147.8 177.5 l2.9 -2.7M146.6 177.2 l-1.1 -3.7M149.2 172.1 l2.6 -2.5M148 171.7 l-1.1 -3.4M150.7 166.6 l2.4 -2.2M149.5 166.3 l-1 -3.1M152.2 161.1 l2.2 -2M150.9 160.8 l-0.9 -2.8M153.6 155.7 l1.9 -1.8M152.4 155.3 l-0.8 -2.5" stroke="#3c3c3c" stroke-width=".8" fill="none" stroke-linecap="round"/><path d="M161.9 201.3 C176.3 194.6 184 178 180.3 161.9 C165.5 169.4 157.8 185.9 161.9 201.3 Z" fill="#c6c6c6"/><path d="M162.7 199.5 q0.1 3.4 -3 4.1" stroke="#c6c6c6" stroke-width="1" fill="none"/><path d="M163.7 197.3 L177.7 167.4M166.9 192 l3.3 -2.1M165.8 191.4 l-0.5 -3.9M169.3 186.8 l3 -2M168.2 186.3 l-0.4 -3.6M171.7 181.7 l2.8 -1.8M170.6 181.2 l-0.4 -3.3M174.1 176.6 l2.5 -1.6M172.9 176 l-0.4 -3M176.5 171.5 l2.2 -1.5M175.3 170.9 l-0.3 -2.6" stroke="#3c3c3c" stroke-width=".8" fill="none" stroke-linecap="round"/><path d="M25.2 197.9 C26.6 182.1 16.1 167.1 0.3 162.2 C-0.6 178.8 9.9 193.8 25.2 197.9 Z" fill="#c6c6c6"/><path d="M24.1 196.3 q2.9 1.6 2 4.7" stroke="#c6c6c6" stroke-width="1" fill="none"/><path d="M22.7 194.3 L3.8 167.2M19.7 188.9 l-0.2 -3.9M18.6 189.6 l-3.6 -1.5M16.4 184.2 l-0.2 -3.6M15.4 185 l-3.3 -1.4M13.2 179.6 l-0.2 -3.3M12.1 180.3 l-3 -1.3M9.9 175 l-0.2 -3M8.9 175.7 l-2.7 -1.2M6.7 170.3 l-0.1 -2.7M5.7 171 l-2.5 -1" stroke="#3c3c3c" stroke-width=".8" fill="none" stroke-linecap="round"/><path d="M66.5 212 C81.6 207.1 91.3 191.6 89.6 175.1 C74 180.8 64.3 196.3 66.5 212 Z" fill="#aaa"/><path d="M67.6 210.3 q-0.3 3.3 -3.5 3.7" stroke="#aaa" stroke-width="1" fill="none"/><path d="M68.8 208.3 L86.3 180.3M72.7 203.4 l3.5 -1.7M71.6 202.7 l0 -3.9M75.7 198.6 l3.2 -1.6M74.6 197.9 l0 -3.6M78.6 193.8 l3 -1.4M77.6 193.1 l0 -3.3M81.6 189 l2.7 -1.3M80.6 188.3 l0 -3M84.6 184.2 l2.4 -1.2M83.6 183.5 l0 -2.7" stroke="#3c3c3c" stroke-width=".8" fill="none" stroke-linecap="round"/><path d="M139.8 216.5 C142 200.8 132.3 185.3 116.8 179.6 C115 196.1 124.7 211.6 139.8 216.5 Z" fill="#c6c6c6"/><path d="M138.8 214.8 q2.9 1.7 1.8 4.8" stroke="#c6c6c6" stroke-width="1" fill="none"/><path d="M137.5 212.8 L120 184.8M134.8 207.2 l0 -3.9M133.7 207.9 l-3.5 -1.7M131.8 202.4 l0 -3.6M130.7 203.1 l-3.2 -1.6M128.8 197.6 l0 -3.3M127.7 198.3 l-3 -1.4M125.8 192.8 l0 -3M124.7 193.5 l-2.7 -1.3M122.8 188 l0 -2.7M121.7 188.7 l-2.4 -1.2" stroke="#3c3c3c" stroke-width=".8" fill="none" stroke-linecap="round"/></g><use href="#t5" x="0" y="-201"/><use href="#t5" x="201" y="-201"/><use href="#t5" x="201" y="0"/><use href="#t5" x="0" y="201"/><use href="#t5" x="201" y="201"/></svg>
<svg style="left:191.4px;top:557.1px;overflow:hidden" width="267.8" height="267.8" viewBox="0 0 267.8 267.8"><rect width="268" height="268" fill="#e6e6e6"/><g id="t6"><circle cx="72" cy="33.8" r="6.8" fill="#aaa"/><g fill="#dcdcdc"><circle cx="71.4" cy="28.9" r="0.5"/><circle cx="73.1" cy="29.3" r="0.5"/><circle cx="74.9" cy="28.9" r="0.5"/><circle cx="71.9" cy="30.5" r="0.5"/><circle cx="73.6" cy="30.9" r="0.5"/><circle cx="75.4" cy="30.5" r="0.5"/><circle cx="77.2" cy="30.9" r="0.5"/><circle cx="72.4" cy="32.1" r="0.5"/><circle cx="74.2" cy="32.5" r="0.5"/><circle cx="75.9" cy="32.1" r="0.5"/><circle cx="77.7" cy="32.5" r="0.5"/><circle cx="73" cy="33.8" r="0.5"/><circle cx="74.7" cy="34.2" r="0.5"/><circle cx="76.5" cy="33.8" r="0.5"/><circle cx="73.5" cy="35.4" r="0.5"/><circle cx="75.3" cy="35.8" r="0.5"/></g><path d="M75 40.7 Q71.2 39.1 69 42.6 Q72.9 44.2 75 40.7 Z" fill="#333"/><path d="M75 40.7 Q78.8 42.2 81 38.7 Q77.2 37.2 75 40.7 Z" fill="#333"/><path d="M75 40.7 Q71.3 41.1 71.1 44.8 Q74.8 44.4 75 40.7 Z" fill="#333"/><path d="M75 40.7 Q77.4 43.5 80.6 41.7 Q78.3 38.8 75 40.7 Z" fill="#333"/><path d="M75 40.7 Q72.6 42.3 73.7 45 Q76.2 43.4 75 40.7 Z" fill="#333"/><path d="M75 40.7 Q75.7 43.5 78.6 43.4 Q78 40.5 75 40.7 Z" fill="#333"/><path d="M75.6 41.6 Q79.8 47.3 80.7 59" stroke="#333" stroke-width="1" fill="none" stroke-linecap="round"/><circle cx="139.6" cy="45" r="6.8" fill="#c8c8c8"/><g fill="#e4e4e4"><circle cx="138.9" cy="40.2" r="0.5"/><circle cx="140.6" cy="40.6" r="0.5"/><circle cx="142.4" cy="40.2" r="0.5"/><circle cx="139.4" cy="41.8" r="0.5"/><circle cx="141.2" cy="42.2" r="0.5"/><circle cx="142.9" cy="41.8" r="0.5"/><circle cx="144.7" cy="42.2" r="0.5"/><circle cx="140" cy="43.4" r="0.5"/><circle cx="141.7" cy="43.8" r="0.5"/><circle cx="143.5" cy="43.4" r="0.5"/><circle cx="145.2" cy="43.8" r="0.5"/><circle cx="140.5" cy="45" r="0.5"/><circle cx="142.3" cy="45.4" r="0.5"/><circle cx="144" cy="45" r="0.5"/><circle cx="141" cy="46.6" r="0.5"/><circle cx="142.8" cy="47" r="0.5"/></g><path d="M142.6 51.9 Q138.7 50.4 136.6 53.9 Q140.4 55.4 142.6 51.9 Z" fill="#333"/><path d="M142.6 51.9 Q146.4 53.5 148.6 50 Q144.7 48.4 142.6 51.9 Z" fill="#333"/><path d="M142.6 51.9 Q138.9 52.3 138.6 56 Q142.3 55.6 142.6 51.9 Z" fill="#333"/><path d="M142.6 51.9 Q144.9 54.8 148.2 52.9 Q145.8 50.1 142.6 51.9 Z" fill="#333"/><path d="M142.6 51.9 Q140.1 53.5 141.2 56.2 Q143.7 54.6 142.6 51.9 Z" fill="#333"/><path d="M142.6 51.9 Q143.2 54.8 146.2 54.6 Q145.5 51.8 142.6 51.9 Z" fill="#333"/><path d="M143.2 52.8 Q147.4 58.5 148.3 70.2" stroke="#333" stroke-width="1" fill="none" stroke-linecap="round"/><circle cx="43.5" cy="72" r="6.8" fill="#fff"/><g fill="#e2e2e2"><circle cx="42.8" cy="67.2" r="0.5"/><circle cx="44.6" cy="67.6" r="0.5"/><circle cx="46.4" cy="67.2" r="0.5"/><circle cx="43.4" cy="68.8" r="0.5"/><circle cx="45.1" cy="69.2" r="0.5"/><circle cx="46.9" cy="68.8" r="0.5"/><circle cx="48.6" cy="69.2" r="0.5"/><circle cx="43.9" cy="70.4" r="0.5"/><circle cx="45.7" cy="70.8" r="0.5"/><circle cx="47.4" cy="70.4" r="0.5"/><circle cx="49.2" cy="70.8" r="0.5"/><circle cx="44.5" cy="72" r="0.5"/><circle cx="46.2" cy="72.4" r="0.5"/><circle cx="48" cy="72" r="0.5"/><circle cx="45" cy="73.6" r="0.5"/><circle cx="46.8" cy="74.1" r="0.5"/></g><path d="M46.5 78.9 Q42.7 77.4 40.5 80.9 Q44.3 82.4 46.5 78.9 Z" fill="#333"/><path d="M46.5 78.9 Q50.3 80.5 52.5 77 Q48.7 75.4 46.5 78.9 Z" fill="#333"/><path d="M46.5 78.9 Q42.8 79.3 42.6 83 Q46.3 82.6 46.5 78.9 Z" fill="#333"/><path d="M46.5 78.9 Q48.9 81.8 52.1 79.9 Q49.7 77.1 46.5 78.9 Z" fill="#333"/><path d="M46.5 78.9 Q44.1 80.5 45.2 83.2 Q47.7 81.6 46.5 78.9 Z" fill="#333"/><path d="M46.5 78.9 Q47.2 81.8 50.1 81.6 Q49.5 78.8 46.5 78.9 Z" fill="#333"/><path d="M47.1 79.8 Q51.3 85.5 52.2 97.2" stroke="#333" stroke-width="1" fill="none" stroke-linecap="round"/><circle cx="164.3" cy="87.8" r="6.8" fill="#c8c8c8"/><g fill="#e4e4e4"><circle cx="163.6" cy="82.9" r="0.5"/><circle cx="165.4" cy="83.3" r="0.5"/><circle cx="167.2" cy="82.9" r="0.5"/><circle cx="164.2" cy="84.5" r="0.5"/><circle cx="165.9" cy="84.9" r="0.5"/><circle cx="167.7" cy="84.5" r="0.5"/><circle cx="169.4" cy="84.9" r="0.5"/><circle cx="164.7" cy="86.2" r="0.5"/><circle cx="166.5" cy="86.6" r="0.5"/><circle cx="168.2" cy="86.2" r="0.5"/><circle cx="170" cy="86.6" r="0.5"/><circle cx="165.3" cy="87.8" r="0.5"/><circle cx="167" cy="88.2" r="0.5"/><circle cx="168.8" cy="87.8" r="0.5"/><circle cx="165.8" cy="89.4" r="0.5"/><circle cx="167.6" cy="89.8" r="0.5"/></g><path d="M167.3 94.7 Q163.5 93.1 161.3 96.6 Q165.1 98.2 167.3 94.7 Z" fill="#333"/><path d="M167.3 94.7 Q171.1 96.2 173.3 92.7 Q169.5 91.2 167.3 94.7 Z" fill="#333"/><path d="M167.3 94.7 Q163.6 95.1 163.4 98.8 Q167.1 98.4 167.3 94.7 Z" fill="#333"/><path d="M167.3 94.7 Q169.7 97.5 172.9 95.7 Q170.5 92.8 167.3 94.7 Z" fill="#333"/><path d="M167.3 94.7 Q164.9 96.3 166 99 Q168.5 97.4 167.3 94.7 Z" fill="#333"/><path d="M167.3 94.7 Q168 97.6 170.9 97.4 Q170.3 94.5 167.3 94.7 Z" fill="#333"/><path d="M167.9 95.6 Q172.1 101.3 173 113" stroke="#333" stroke-width="1" fill="none" stroke-linecap="round"/><circle cx="97.2" cy="123" r="6.8" fill="#c8c8c8"/><g fill="#e4e4e4"><circle cx="96.6" cy="118.2" r="0.5"/><circle cx="98.3" cy="118.6" r="0.5"/><circle cx="100.1" cy="118.2" r="0.5"/><circle cx="97.1" cy="119.8" r="0.5"/><circle cx="98.9" cy="120.2" r="0.5"/><circle cx="100.6" cy="119.8" r="0.5"/><circle cx="102.4" cy="120.2" r="0.5"/><circle cx="97.6" cy="121.4" r="0.5"/><circle cx="99.4" cy="121.8" r="0.5"/><circle cx="101.2" cy="121.4" r="0.5"/><circle cx="102.9" cy="121.8" r="0.5"/><circle cx="98.2" cy="123" r="0.5"/><circle cx="99.9" cy="123.5" r="0.5"/><circle cx="101.7" cy="123" r="0.5"/><circle cx="98.7" cy="124.7" r="0.5"/><circle cx="100.5" cy="125.1" r="0.5"/></g><path d="M100.2 130 Q96.4 128.4 94.2 131.9 Q98.1 133.4 100.2 130 Z" fill="#333"/><path d="M100.2 130 Q104.1 131.5 106.2 128 Q102.4 126.5 100.2 130 Z" fill="#333"/><path d="M100.2 130 Q96.5 130.3 96.3 134.1 Q100 133.7 100.2 130 Z" fill="#333"/><path d="M100.2 130 Q102.6 132.8 105.9 130.9 Q103.5 128.1 100.2 130 Z" fill="#333"/><path d="M100.2 130 Q97.8 131.6 98.9 134.3 Q101.4 132.7 100.2 130 Z" fill="#333"/><path d="M100.2 130 Q100.9 132.8 103.8 132.7 Q103.2 129.8 100.2 130 Z" fill="#333"/><path d="M100.8 130.9 Q105 136.6 105.9 148.3" stroke="#333" stroke-width="1" fill="none" stroke-linecap="round"/><circle cx="197.3" cy="137.3" r="6.8" fill="#9a9a9a"/><g fill="#cfcfcf"><circle cx="196.7" cy="132.4" r="0.5"/><circle cx="198.4" cy="132.8" r="0.5"/><circle cx="200.2" cy="132.4" r="0.5"/><circle cx="197.2" cy="134.1" r="0.5"/><circle cx="198.9" cy="134.5" r="0.5"/><circle cx="200.7" cy="134.1" r="0.5"/><circle cx="202.5" cy="134.5" r="0.5"/><circle cx="197.7" cy="135.7" r="0.5"/><circle cx="199.5" cy="136.1" r="0.5"/><circle cx="201.2" cy="135.7" r="0.5"/><circle cx="203" cy="136.1" r="0.5"/><circle cx="198.3" cy="137.3" r="0.5"/><circle cx="200" cy="137.7" r="0.5"/><circle cx="201.8" cy="137.3" r="0.5"/><circle cx="198.8" cy="138.9" r="0.5"/><circle cx="200.6" cy="139.3" r="0.5"/></g><path d="M200.3 144.2 Q196.5 142.7 194.3 146.2 Q198.2 147.7 200.3 144.2 Z" fill="#333"/><path d="M200.3 144.2 Q204.1 145.8 206.3 142.3 Q202.5 140.7 200.3 144.2 Z" fill="#333"/><path d="M200.3 144.2 Q196.6 144.6 196.4 148.3 Q200.1 147.9 200.3 144.2 Z" fill="#333"/><path d="M200.3 144.2 Q202.7 147.1 205.9 145.2 Q203.6 142.3 200.3 144.2 Z" fill="#333"/><path d="M200.3 144.2 Q197.9 145.8 199 148.5 Q201.5 146.9 200.3 144.2 Z" fill="#333"/><path d="M200.3 144.2 Q201 147.1 203.9 146.9 Q203.3 144.1 200.3 144.2 Z" fill="#333"/><path d="M200.9 145.1 Q205.1 150.8 206 162.5" stroke="#333" stroke-width="1" fill="none" stroke-linecap="round"/><circle cx="96.8" cy="168.8" r="6.8" fill="#fff"/><g fill="#e2e2e2"><circle cx="96.1" cy="164" r="0.5"/><circle cx="97.9" cy="164.4" r="0.5"/><circle cx="99.6" cy="164" r="0.5"/><circle cx="96.7" cy="165.6" r="0.5"/><circle cx="98.4" cy="166" r="0.5"/><circle cx="100.2" cy="165.6" r="0.5"/><circle cx="101.9" cy="166" r="0.5"/><circle cx="97.2" cy="167.2" r="0.5"/><circle cx="98.9" cy="167.6" r="0.5"/><circle cx="100.7" cy="167.2" r="0.5"/><circle cx="102.5" cy="167.6" r="0.5"/><circle cx="97.7" cy="168.8" r="0.5"/><circle cx="99.5" cy="169.2" r="0.5"/><circle cx="101.2" cy="168.8" r="0.5"/><circle cx="98.3" cy="170.4" r="0.5"/><circle cx="100" cy="170.8" r="0.5"/></g><path d="M99.8 175.7 Q96 174.2 93.8 177.7 Q97.6 179.2 99.8 175.7 Z" fill="#333"/><path d="M99.8 175.7 Q103.6 177.3 105.8 173.8 Q102 172.2 99.8 175.7 Z" fill="#333"/><path d="M99.8 175.7 Q96.1 176.1 95.8 179.8 Q99.5 179.4 99.8 175.7 Z" fill="#333"/><path d="M99.8 175.7 Q102.2 178.6 105.4 176.7 Q103 173.9 99.8 175.7 Z" fill="#333"/><path d="M99.8 175.7 Q97.3 177.3 98.5 180 Q100.9 178.4 99.8 175.7 Z" fill="#333"/><path d="M99.8 175.7 Q100.4 178.6 103.4 178.4 Q102.7 175.6 99.8 175.7 Z" fill="#333"/><path d="M100.4 176.6 Q104.6 182.3 105.5 194" stroke="#333" stroke-width="1" fill="none" stroke-linecap="round"/><circle cx="174.1" cy="178.6" r="6.8" fill="#9a9a9a"/><g fill="#cfcfcf"><circle cx="173.4" cy="173.7" r="0.5"/><circle cx="175.2" cy="174.1" r="0.5"/><circle cx="176.9" cy="173.7" r="0.5"/><circle cx="173.9" cy="175.3" r="0.5"/><circle cx="175.7" cy="175.7" r="0.5"/><circle cx="177.4" cy="175.3" r="0.5"/><circle cx="179.2" cy="175.7" r="0.5"/><circle cx="174.5" cy="177" r="0.5"/><circle cx="176.2" cy="177.4" r="0.5"/><circle cx="178" cy="177" r="0.5"/><circle cx="179.7" cy="177.4" r="0.5"/><circle cx="175" cy="178.6" r="0.5"/><circle cx="176.8" cy="179" r="0.5"/><circle cx="178.5" cy="178.6" r="0.5"/><circle cx="175.6" cy="180.2" r="0.5"/><circle cx="177.3" cy="180.6" r="0.5"/></g><path d="M177.1 185.5 Q173.3 183.9 171.1 187.4 Q174.9 189 177.1 185.5 Z" fill="#333"/><path d="M177.1 185.5 Q180.9 187 183.1 183.5 Q179.2 182 177.1 185.5 Z" fill="#333"/><path d="M177.1 185.5 Q173.4 185.9 173.1 189.6 Q176.8 189.2 177.1 185.5 Z" fill="#333"/><path d="M177.1 185.5 Q179.5 188.3 182.7 186.5 Q180.3 183.6 177.1 185.5 Z" fill="#333"/><path d="M177.1 185.5 Q174.6 187.1 175.8 189.8 Q178.2 188.2 177.1 185.5 Z" fill="#333"/><path d="M177.1 185.5 Q177.7 188.3 180.7 188.2 Q180 185.3 177.1 185.5 Z" fill="#333"/><path d="M177.7 186.4 Q181.9 192.1 182.8 203.8" stroke="#333" stroke-width="1" fill="none" stroke-linecap="round"/><circle cx="18" cy="202.6" r="6.8" fill="#c8c8c8"/><g fill="#e4e4e4"><circle cx="17.3" cy="197.7" r="0.5"/><circle cx="19.1" cy="198.1" r="0.5"/><circle cx="20.8" cy="197.7" r="0.5"/><circle cx="17.9" cy="199.3" r="0.5"/><circle cx="19.6" cy="199.7" r="0.5"/><circle cx="21.4" cy="199.3" r="0.5"/><circle cx="23.1" cy="199.7" r="0.5"/><circle cx="18.4" cy="201" r="0.5"/><circle cx="20.2" cy="201.4" r="0.5"/><circle cx="21.9" cy="201" r="0.5"/><circle cx="23.7" cy="201.4" r="0.5"/><circle cx="19" cy="202.6" r="0.5"/><circle cx="20.7" cy="203" r="0.5"/><circle cx="22.5" cy="202.6" r="0.5"/><circle cx="19.5" cy="204.2" r="0.5"/><circle cx="21.2" cy="204.6" r="0.5"/></g><path d="M21 209.5 Q17.2 207.9 15 211.4 Q18.8 213 21 209.5 Z" fill="#333"/><path d="M21 209.5 Q24.8 211 27 207.5 Q23.2 206 21 209.5 Z" fill="#333"/><path d="M21 209.5 Q17.3 209.9 17 213.6 Q20.8 213.2 21 209.5 Z" fill="#333"/><path d="M21 209.5 Q23.4 212.3 26.6 210.5 Q24.2 207.6 21 209.5 Z" fill="#333"/><path d="M21 209.5 Q18.5 211.1 19.7 213.8 Q22.2 212.2 21 209.5 Z" fill="#333"/><path d="M21 209.5 Q21.7 212.3 24.6 212.2 Q23.9 209.3 21 209.5 Z" fill="#333"/><path d="M21.6 210.4 Q25.8 216.1 26.7 227.8" stroke="#333" stroke-width="1" fill="none" stroke-linecap="round"/><circle cx="16.5" cy="63" r="15" fill="#aaa"/><g fill="#dcdcdc"><circle cx="15" cy="52.2" r="1"/><circle cx="18.9" cy="53.1" r="1"/><circle cx="22.8" cy="52.2" r="1"/><circle cx="16.2" cy="55.8" r="1"/><circle cx="20.1" cy="56.7" r="1"/><circle cx="24" cy="55.8" r="1"/><circle cx="27.9" cy="56.7" r="1"/><circle cx="17.4" cy="59.4" r="1"/><circle cx="21.3" cy="60.3" r="1"/><circle cx="25.2" cy="59.4" r="1"/><circle cx="29.1" cy="60.3" r="1"/><circle cx="18.6" cy="63" r="1"/><circle cx="22.5" cy="63.9" r="1"/><circle cx="26.4" cy="63" r="1"/><circle cx="19.8" cy="66.6" r="1"/><circle cx="23.7" cy="67.5" r="1"/></g><path d="M9.6 77.4 Q6.7 68.5 -2.6 69.8 Q0.3 78.7 9.6 77.4 Z" fill="#333"/><path d="M9.6 77.4 Q13.7 85.9 22.8 83.3 Q18.6 74.8 9.6 77.4 Z" fill="#333"/><path d="M9.6 77.4 Q3.7 70.9 -3.8 75.6 Q2.1 82.1 9.6 77.4 Z" fill="#333"/><path d="M9.6 77.4 Q9.9 86.2 18.6 87.5 Q18.3 78.7 9.6 77.4 Z" fill="#333"/><path d="M9.6 77.4 Q3.3 74.6 -0.5 80.3 Q5.8 83.1 9.6 77.4 Z" fill="#333"/><path d="M9.6 77.4 Q7 83.8 12.8 87.4 Q15.4 81.1 9.6 77.4 Z" fill="#333"/><path d="M6.3 81.8 Q-1.2 95.3 -2.3 118.2" stroke="#333" stroke-width="2" fill="none" stroke-linecap="round"/><circle cx="122.3" cy="13.5" r="15" fill="#c8c8c8"/><g fill="#e4e4e4"><circle cx="120.8" cy="2.7" r="1"/><circle cx="124.7" cy="3.6" r="1"/><circle cx="128.6" cy="2.7" r="1"/><circle cx="122" cy="6.3" r="1"/><circle cx="125.9" cy="7.2" r="1"/><circle cx="129.8" cy="6.3" r="1"/><circle cx="133.7" cy="7.2" r="1"/><circle cx="123.2" cy="9.9" r="1"/><circle cx="127.1" cy="10.8" r="1"/><circle cx="131" cy="9.9" r="1"/><circle cx="134.9" cy="10.8" r="1"/><circle cx="124.4" cy="13.5" r="1"/><circle cx="128.3" cy="14.4" r="1"/><circle cx="132.2" cy="13.5" r="1"/><circle cx="125.6" cy="17.1" r="1"/><circle cx="129.5" cy="18" r="1"/></g><path d="M115.4 27.9 Q112.5 19 103.2 20.3 Q106.1 29.2 115.4 27.9 Z" fill="#333"/><path d="M115.4 27.9 Q119.5 36.4 128.6 33.8 Q124.4 25.3 115.4 27.9 Z" fill="#333"/><path d="M115.4 27.9 Q109.5 21.4 102 26 Q107.9 32.6 115.4 27.9 Z" fill="#333"/><path d="M115.4 27.9 Q115.7 36.7 124.4 37.9 Q124.1 29.1 115.4 27.9 Z" fill="#333"/><path d="M115.4 27.9 Q109.1 25.1 105.3 30.8 Q111.6 33.6 115.4 27.9 Z" fill="#333"/><path d="M115.4 27.9 Q112.8 34.3 118.6 37.9 Q121.2 31.5 115.4 27.9 Z" fill="#333"/><path d="M112.1 32.3 Q104.6 45.8 103.5 68.7" stroke="#333" stroke-width="2" fill="none" stroke-linecap="round"/><circle cx="183.8" cy="19.5" r="15" fill="#fff"/><g fill="#e2e2e2"><circle cx="182.3" cy="8.7" r="1"/><circle cx="186.2" cy="9.6" r="1"/><circle cx="190.1" cy="8.7" r="1"/><circle cx="183.5" cy="12.3" r="1"/><circle cx="187.4" cy="13.2" r="1"/><circle cx="191.3" cy="12.3" r="1"/><circle cx="195.2" cy="13.2" r="1"/><circle cx="184.7" cy="15.9" r="1"/><circle cx="188.6" cy="16.8" r="1"/><circle cx="192.5" cy="15.9" r="1"/><circle cx="196.4" cy="16.8" r="1"/><circle cx="185.9" cy="19.5" r="1"/><circle cx="189.8" cy="20.4" r="1"/><circle cx="193.7" cy="19.5" r="1"/><circle cx="187.1" cy="23.1" r="1"/><circle cx="191" cy="24" r="1"/></g><path d="M176.9 33.9 Q174 25 164.7 26.3 Q167.6 35.2 176.9 33.9 Z" fill="#333"/><path d="M176.9 33.9 Q181 42.4 190.1 39.8 Q186 31.3 176.9 33.9 Z" fill="#333"/><path d="M176.9 33.9 Q171 27.4 163.5 32 Q169.4 38.6 176.9 33.9 Z" fill="#333"/><path d="M176.9 33.9 Q177.2 42.7 186 44 Q185.7 35.1 176.9 33.9 Z" fill="#333"/><path d="M176.9 33.9 Q170.7 31.1 166.8 36.8 Q173.1 39.6 176.9 33.9 Z" fill="#333"/><path d="M176.9 33.9 Q174.3 40.3 180.2 43.9 Q182.7 37.5 176.9 33.9 Z" fill="#333"/><path d="M173.6 38.3 Q166.1 51.8 165.1 74.7" stroke="#333" stroke-width="2" fill="none" stroke-linecap="round"/><circle cx="84.8" cy="90" r="15" fill="#fff"/><g fill="#e2e2e2"><circle cx="83.3" cy="79.2" r="1"/><circle cx="87.2" cy="80.1" r="1"/><circle cx="91.1" cy="79.2" r="1"/><circle cx="84.5" cy="82.8" r="1"/><circle cx="88.4" cy="83.7" r="1"/><circle cx="92.3" cy="82.8" r="1"/><circle cx="96.2" cy="83.7" r="1"/><circle cx="85.7" cy="86.4" r="1"/><circle cx="89.6" cy="87.3" r="1"/><circle cx="93.5" cy="86.4" r="1"/><circle cx="97.4" cy="87.3" r="1"/><circle cx="86.9" cy="90" r="1"/><circle cx="90.8" cy="90.9" r="1"/><circle cx="94.7" cy="90" r="1"/><circle cx="88.1" cy="93.6" r="1"/><circle cx="92" cy="94.5" r="1"/></g><path d="M77.9 104.4 Q75 95.5 65.7 96.8 Q68.6 105.8 77.9 104.4 Z" fill="#333"/><path d="M77.9 104.4 Q82 112.9 91 110.3 Q86.9 101.8 77.9 104.4 Z" fill="#333"/><path d="M77.9 104.4 Q72 97.9 64.5 102.6 Q70.4 109.1 77.9 104.4 Z" fill="#333"/><path d="M77.9 104.4 Q78.2 113.3 86.9 114.5 Q86.6 105.7 77.9 104.4 Z" fill="#333"/><path d="M77.9 104.4 Q71.6 101.6 67.8 107.3 Q74 110.1 77.9 104.4 Z" fill="#333"/><path d="M77.9 104.4 Q75.3 110.8 81.1 114.4 Q83.7 108.1 77.9 104.4 Z" fill="#333"/><path d="M74.6 108.8 Q67.1 122.3 66 145.3" stroke="#333" stroke-width="2" fill="none" stroke-linecap="round"/><circle cx="135.1" cy="105" r="15" fill="#aaa"/><g fill="#dcdcdc"><circle cx="133.6" cy="94.2" r="1"/><circle cx="137.5" cy="95.1" r="1"/><circle cx="141.4" cy="94.2" r="1"/><circle cx="134.8" cy="97.8" r="1"/><circle cx="138.7" cy="98.7" r="1"/><circle cx="142.6" cy="97.8" r="1"/><circle cx="146.5" cy="98.7" r="1"/><circle cx="136" cy="101.4" r="1"/><circle cx="139.9" cy="102.3" r="1"/><circle cx="143.8" cy="101.4" r="1"/><circle cx="147.7" cy="102.3" r="1"/><circle cx="137.2" cy="105" r="1"/><circle cx="141.1" cy="105.9" r="1"/><circle cx="145" cy="105" r="1"/><circle cx="138.4" cy="108.6" r="1"/><circle cx="142.3" cy="109.5" r="1"/></g><path d="M128.2 119.4 Q125.2 110.5 115.9 111.8 Q118.8 120.8 128.2 119.4 Z" fill="#333"/><path d="M128.2 119.4 Q132.3 127.9 141.3 125.3 Q137.2 116.9 128.2 119.4 Z" fill="#333"/><path d="M128.2 119.4 Q122.3 112.9 114.8 117.6 Q120.7 124.1 128.2 119.4 Z" fill="#333"/><path d="M128.2 119.4 Q128.5 128.3 137.2 129.5 Q136.9 120.7 128.2 119.4 Z" fill="#333"/><path d="M128.2 119.4 Q121.9 116.7 118.1 122.3 Q124.3 125.1 128.2 119.4 Z" fill="#333"/><path d="M128.2 119.4 Q125.6 125.8 131.4 129.4 Q134 123.1 128.2 119.4 Z" fill="#333"/><path d="M124.8 123.8 Q117.3 137.3 116.3 160.3" stroke="#333" stroke-width="2" fill="none" stroke-linecap="round"/><circle cx="35.3" cy="128.3" r="15" fill="#c8c8c8"/><g fill="#e4e4e4"><circle cx="33.8" cy="117.5" r="1"/><circle cx="37.7" cy="118.4" r="1"/><circle cx="41.6" cy="117.5" r="1"/><circle cx="35" cy="121.1" r="1"/><circle cx="38.9" cy="122" r="1"/><circle cx="42.8" cy="121.1" r="1"/><circle cx="46.7" cy="122" r="1"/><circle cx="36.2" cy="124.7" r="1"/><circle cx="40.1" cy="125.6" r="1"/><circle cx="44" cy="124.7" r="1"/><circle cx="47.9" cy="125.6" r="1"/><circle cx="37.4" cy="128.3" r="1"/><circle cx="41.3" cy="129.2" r="1"/><circle cx="45.2" cy="128.3" r="1"/><circle cx="38.6" cy="131.9" r="1"/><circle cx="42.5" cy="132.8" r="1"/></g><path d="M28.4 142.7 Q25.5 133.8 16.1 135.1 Q19 144 28.4 142.7 Z" fill="#333"/><path d="M28.4 142.7 Q32.5 151.2 41.5 148.6 Q37.4 140.1 28.4 142.7 Z" fill="#333"/><path d="M28.4 142.7 Q22.5 136.2 15 140.8 Q20.9 147.4 28.4 142.7 Z" fill="#333"/><path d="M28.4 142.7 Q28.7 151.5 37.4 152.7 Q37.1 143.9 28.4 142.7 Z" fill="#333"/><path d="M28.4 142.7 Q22.1 139.9 18.3 145.6 Q24.5 148.4 28.4 142.7 Z" fill="#333"/><path d="M28.4 142.7 Q25.8 149.1 31.6 152.7 Q34.2 146.3 28.4 142.7 Z" fill="#333"/><path d="M25.1 147.1 Q17.6 160.6 16.5 183.5" stroke="#333" stroke-width="2" fill="none" stroke-linecap="round"/><circle cx="167.3" cy="141.8" r="15" fill="#c8c8c8"/><g fill="#e4e4e4"><circle cx="165.8" cy="131" r="1"/><circle cx="169.7" cy="131.9" r="1"/><circle cx="173.6" cy="131" r="1"/><circle cx="167" cy="134.6" r="1"/><circle cx="170.9" cy="135.5" r="1"/><circle cx="174.8" cy="134.6" r="1"/><circle cx="178.7" cy="135.5" r="1"/><circle cx="168.2" cy="138.2" r="1"/><circle cx="172.1" cy="139.1" r="1"/><circle cx="176" cy="138.2" r="1"/><circle cx="179.9" cy="139.1" r="1"/><circle cx="169.4" cy="141.8" r="1"/><circle cx="173.3" cy="142.7" r="1"/><circle cx="177.2" cy="141.8" r="1"/><circle cx="170.6" cy="145.4" r="1"/><circle cx="174.5" cy="146.3" r="1"/></g><path d="M160.4 156.2 Q157.5 147.3 148.2 148.6 Q151.1 157.5 160.4 156.2 Z" fill="#333"/><path d="M160.4 156.2 Q164.5 164.7 173.6 162.1 Q169.5 153.6 160.4 156.2 Z" fill="#333"/><path d="M160.4 156.2 Q154.5 149.7 147 154.3 Q152.9 160.9 160.4 156.2 Z" fill="#333"/><path d="M160.4 156.2 Q160.7 165 169.5 166.2 Q169.1 157.4 160.4 156.2 Z" fill="#333"/><path d="M160.4 156.2 Q154.1 153.4 150.3 159.1 Q156.6 161.9 160.4 156.2 Z" fill="#333"/><path d="M160.4 156.2 Q157.8 162.6 163.7 166.2 Q166.2 159.8 160.4 156.2 Z" fill="#333"/><path d="M157.1 160.6 Q149.6 174.1 148.6 197" stroke="#333" stroke-width="2" fill="none" stroke-linecap="round"/><circle cx="65.3" cy="185.3" r="15" fill="#c8c8c8"/><g fill="#e4e4e4"><circle cx="63.8" cy="174.5" r="1"/><circle cx="67.7" cy="175.4" r="1"/><circle cx="71.6" cy="174.5" r="1"/><circle cx="65" cy="178.1" r="1"/><circle cx="68.9" cy="179" r="1"/><circle cx="72.8" cy="178.1" r="1"/><circle cx="76.7" cy="179" r="1"/><circle cx="66.2" cy="181.7" r="1"/><circle cx="70.1" cy="182.6" r="1"/><circle cx="74" cy="181.7" r="1"/><circle cx="77.9" cy="182.6" r="1"/><circle cx="67.4" cy="185.3" r="1"/><circle cx="71.3" cy="186.2" r="1"/><circle cx="75.2" cy="185.3" r="1"/><circle cx="68.6" cy="188.9" r="1"/><circle cx="72.5" cy="189.8" r="1"/></g><path d="M58.4 199.7 Q55.5 190.8 46.2 192.1 Q49.1 201 58.4 199.7 Z" fill="#333"/><path d="M58.4 199.7 Q62.5 208.2 71.5 205.6 Q67.4 197.1 58.4 199.7 Z" fill="#333"/><path d="M58.4 199.7 Q52.5 193.2 45 197.9 Q50.9 204.4 58.4 199.7 Z" fill="#333"/><path d="M58.4 199.7 Q58.7 208.5 67.4 209.8 Q67.1 201 58.4 199.7 Z" fill="#333"/><path d="M58.4 199.7 Q52.1 196.9 48.3 202.6 Q54.5 205.4 58.4 199.7 Z" fill="#333"/><path d="M58.4 199.7 Q55.8 206.1 61.6 209.7 Q64.2 203.4 58.4 199.7 Z" fill="#333"/><path d="M55.1 204.1 Q47.6 217.6 46.5 240.5" stroke="#333" stroke-width="2" fill="none" stroke-linecap="round"/></g><use href="#t6" x="-201" y="-201"/><use href="#t6" x="0" y="-201"/><use href="#t6" x="201" y="-201"/><use href="#t6" x="-201" y="0"/><use href="#t6" x="201" y="0"/><use href="#t6" x="-201" y="201"/><use href="#t6" x="0" y="201"/><use href="#t6" x="201" y="201"/></svg>
<svg style="left:472.6px;top:557.1px;overflow:hidden" width="267.8" height="267.8" viewBox="0 0 267.8 267.8"><rect width="268" height="268" fill="#fff"/><g id="t7"><path d="M32.3 8.3 C41.3 7.4 48.2 10.4 48.2 19.1 C48.2 28.1 38.6 40.1 32.3 43.7 C26 40.1 16.4 28.1 16.4 19.7 C16.4 11 23.3 8.9 32.3 8.3 Z" fill="#aaa"/><path d="M38.6 14.6 C30.8 12.8 23 16.5 24.5 21.2 C26 25.1 40.1 24.2 41.6 20.3 C42.2 17.3 32.3 17 30.8 20 C30.5 21.8 35.6 21.8 36.5 20.3" stroke="#fff" stroke-width="1.25" fill="none" stroke-linecap="round"/><path d="M24.6 38.2 Q24.8 45.8 32.1 47.9 Q31.9 40.3 24.6 38.2 Z" fill="#333"/><path d="M40 38.2 Q32.6 40.3 32.4 47.9 Q39.7 45.8 40 38.2 Z" fill="#333"/><path d="M30.5 45.8 L34.1 45.8 L33 63.5 L31.5 63.5 Z" fill="#333"/><path d="M123.8 10.5 C132.8 9.6 139.7 12.6 139.7 21.3 C139.7 30.3 130.1 42.3 123.8 45.9 C117.5 42.3 107.9 30.3 107.9 21.9 C107.9 13.2 114.8 11.1 123.8 10.5 Z" fill="#c8c8c8"/><path d="M130.1 16.8 C122.3 15 114.5 18.8 116 23.4 C117.5 27.3 131.6 26.4 133.1 22.5 C133.7 19.5 123.8 19.2 122.3 22.2 C122 24 127.1 24 128 22.5" stroke="#fff" stroke-width="1.25" fill="none" stroke-linecap="round"/><path d="M116.1 40.5 Q116.4 48.1 123.7 50.2 Q123.4 42.5 116.1 40.5 Z" fill="#333"/><path d="M131.5 40.5 Q124.2 42.5 123.9 50.2 Q131.2 48.1 131.5 40.5 Z" fill="#333"/><path d="M122 48 L125.6 48 L124.5 65.7 L123 65.7 Z" fill="#333"/><path d="M201.8 44.3 C210.8 43.4 217.7 46.4 217.7 55.1 C217.7 64.1 208.1 76.1 201.8 79.7 C195.5 76.1 185.9 64.1 185.9 55.7 C185.9 47 192.8 44.9 201.8 44.3 Z" fill="#e4e4e4"/><path d="M208.1 50.6 C200.3 48.8 192.5 52.5 194 57.2 C195.5 61.1 209.6 60.2 211.1 56.3 C211.7 53.3 201.8 53 200.3 56 C200 57.8 205.1 57.8 206 56.3" stroke="#f6f6f6" stroke-width="1.25" fill="none" stroke-linecap="round"/><path d="M194.1 74.2 Q194.4 81.9 201.7 83.9 Q201.5 76.3 194.1 74.2 Z" fill="#333"/><path d="M209.5 74.2 Q202.2 76.3 201.9 83.9 Q209.3 81.9 209.5 74.2 Z" fill="#333"/><path d="M200 81.8 L203.6 81.8 L202.6 99.5 L201.1 99.5 Z" fill="#333"/><path d="M66.8 45.8 C75.8 44.9 82.7 47.9 82.7 56.6 C82.7 65.6 73.1 77.6 66.8 81.2 C60.5 77.6 50.9 65.6 50.9 57.2 C50.9 48.5 57.8 46.4 66.8 45.8 Z" fill="#c8c8c8"/><path d="M73.1 52.1 C65.3 50.3 57.5 54 59 58.7 C60.5 62.6 74.6 61.7 76.1 57.8 C76.7 54.8 66.8 54.5 65.3 57.5 C65 59.3 70.1 59.3 71 57.8" stroke="#fff" stroke-width="1.25" fill="none" stroke-linecap="round"/><path d="M59.1 75.7 Q59.3 83.4 66.7 85.4 Q66.4 77.8 59.1 75.7 Z" fill="#333"/><path d="M74.5 75.7 Q67.1 77.8 66.9 85.4 Q74.2 83.4 74.5 75.7 Z" fill="#333"/><path d="M65 83.3 L68.6 83.3 L67.5 101 L66 101 Z" fill="#333"/><path d="M162.8 59.3 C171.8 58.4 178.7 61.4 178.7 70.1 C178.7 79.1 169.1 91.1 162.8 94.7 C156.5 91.1 146.9 79.1 146.9 70.7 C146.9 62 153.8 59.9 162.8 59.3 Z" fill="#aaa"/><path d="M169.1 65.6 C161.3 63.8 153.5 67.5 155 72.2 C156.5 76.1 170.6 75.2 172.1 71.3 C172.7 68.3 162.8 68 161.3 71 C161 72.8 166.1 72.8 167 71.3" stroke="#fff" stroke-width="1.25" fill="none" stroke-linecap="round"/><path d="M155.1 89.2 Q155.4 96.9 162.7 98.9 Q162.5 91.3 155.1 89.2 Z" fill="#333"/><path d="M170.5 89.2 Q163.2 91.3 162.9 98.9 Q170.3 96.9 170.5 89.2 Z" fill="#333"/><path d="M161 96.8 L164.6 96.8 L163.6 114.5 L162.1 114.5 Z" fill="#333"/><path d="M110.3 71.3 C119.3 70.4 126.2 73.4 126.2 82.1 C126.2 91.1 116.6 103.1 110.3 106.7 C104 103.1 94.4 91.1 94.4 82.7 C94.4 74 101.3 71.9 110.3 71.3 Z" fill="#aaa"/><path d="M116.6 77.6 C108.8 75.8 101 79.5 102.5 84.2 C104 88.1 118.1 87.2 119.6 83.3 C120.2 80.3 110.3 80 108.8 83 C108.5 84.8 113.6 84.8 114.5 83.3" stroke="#fff" stroke-width="1.25" fill="none" stroke-linecap="round"/><path d="M102.6 101.2 Q102.8 108.9 110.2 110.9 Q109.9 103.3 102.6 101.2 Z" fill="#333"/><path d="M118 101.2 Q110.6 103.3 110.4 110.9 Q117.7 108.9 118 101.2 Z" fill="#333"/><path d="M108.5 108.8 L112.1 108.8 L111 126.5 L109.5 126.5 Z" fill="#333"/><path d="M32.3 77.3 C41.3 76.4 48.2 79.4 48.2 88.1 C48.2 97.1 38.6 109.1 32.3 112.7 C26 109.1 16.4 97.1 16.4 88.7 C16.4 80 23.3 77.9 32.3 77.3 Z" fill="#e4e4e4"/><path d="M38.6 83.6 C30.8 81.8 23 85.5 24.5 90.2 C26 94.1 40.1 93.2 41.6 89.3 C42.2 86.3 32.3 86 30.8 89 C30.5 90.8 35.6 90.8 36.5 89.3" stroke="#f6f6f6" stroke-width="1.25" fill="none" stroke-linecap="round"/><path d="M24.6 107.2 Q24.8 114.9 32.1 116.9 Q31.9 109.3 24.6 107.2 Z" fill="#333"/><path d="M40 107.2 Q32.6 109.3 32.4 116.9 Q39.7 114.9 40 107.2 Z" fill="#333"/><path d="M30.5 114.8 L34.1 114.8 L33 132.5 L31.5 132.5 Z" fill="#333"/><path d="M192.8 111 C201.8 110.1 208.7 113.1 208.7 121.8 C208.7 130.9 199.1 142.9 192.8 146.5 C186.5 142.9 176.9 130.9 176.9 122.4 C176.9 113.7 183.8 111.6 192.8 111 Z" fill="#c8c8c8"/><path d="M199.1 117.3 C191.3 115.5 183.5 119.3 185 123.9 C186.5 127.9 200.6 127 202.1 123 C202.7 120 192.8 119.7 191.3 122.7 C191 124.5 196.1 124.5 197 123" stroke="#fff" stroke-width="1.25" fill="none" stroke-linecap="round"/><path d="M185.1 141 Q185.4 148.6 192.7 150.7 Q192.5 143.1 185.1 141 Z" fill="#333"/><path d="M200.5 141 Q193.2 143.1 192.9 150.7 Q200.3 148.6 200.5 141 Z" fill="#333"/><path d="M191 148.6 L194.6 148.6 L193.6 166.3 L192.1 166.3 Z" fill="#333"/><path d="M78.8 116.3 C87.8 115.4 94.7 118.4 94.7 127.1 C94.7 136.1 85.1 148.1 78.8 151.7 C72.5 148.1 62.9 136.1 62.9 127.7 C62.9 119 69.8 116.9 78.8 116.3 Z" fill="#c8c8c8"/><path d="M85.1 122.6 C77.3 120.8 69.5 124.5 71 129.2 C72.5 133.1 86.6 132.2 88.1 128.3 C88.7 125.3 78.8 125 77.3 128 C77 129.8 82.1 129.8 83 128.3" stroke="#fff" stroke-width="1.25" fill="none" stroke-linecap="round"/><path d="M71.1 146.3 Q71.3 153.9 78.7 156 Q78.4 148.3 71.1 146.3 Z" fill="#333"/><path d="M86.5 146.3 Q79.1 148.3 78.9 156 Q86.2 153.9 86.5 146.3 Z" fill="#333"/><path d="M77 153.8 L80.6 153.8 L79.5 171.5 L78 171.5 Z" fill="#333"/><path d="M155.3 127.6 C164.3 126.7 171.2 129.7 171.2 138.4 C171.2 147.4 161.6 159.4 155.3 163 C149 159.4 139.4 147.4 139.4 139 C139.4 130.3 146.3 128.2 155.3 127.6 Z" fill="#c8c8c8"/><path d="M161.6 133.9 C153.8 132.1 146 135.8 147.5 140.5 C149 144.4 163.1 143.5 164.6 139.6 C165.2 136.6 155.3 136.3 153.8 139.3 C153.5 141.1 158.6 141.1 159.5 139.6" stroke="#fff" stroke-width="1.25" fill="none" stroke-linecap="round"/><path d="M147.6 157.5 Q147.9 165.1 155.2 167.2 Q155 159.6 147.6 157.5 Z" fill="#333"/><path d="M163 157.5 Q155.7 159.6 155.4 167.2 Q162.8 165.1 163 157.5 Z" fill="#333"/><path d="M153.5 165.1 L157.1 165.1 L156.1 182.8 L154.6 182.8 Z" fill="#333"/><path d="M36 146.3 C45 145.4 51.9 148.4 51.9 157.1 C51.9 166.1 42.3 178.1 36 181.7 C29.7 178.1 20.1 166.1 20.1 157.7 C20.1 149 27 146.9 36 146.3 Z" fill="#c8c8c8"/><path d="M42.3 152.6 C34.5 150.8 26.7 154.6 28.2 159.2 C29.7 163.1 43.8 162.2 45.3 158.3 C45.9 155.3 36 155 34.5 158 C34.2 159.8 39.3 159.8 40.2 158.3" stroke="#fff" stroke-width="1.25" fill="none" stroke-linecap="round"/><path d="M28.3 176.3 Q28.6 183.9 35.9 186 Q35.7 178.4 28.3 176.3 Z" fill="#333"/><path d="M43.7 176.3 Q36.4 178.4 36.1 186 Q43.5 183.9 43.7 176.3 Z" fill="#333"/><path d="M34.2 183.8 L37.8 183.8 L36.8 201.5 L35.3 201.5 Z" fill="#333"/><path d="M116.3 147.1 C125.3 146.2 132.2 149.2 132.2 157.9 C132.2 166.9 122.6 178.9 116.3 182.5 C110 178.9 100.4 166.9 100.4 158.5 C100.4 149.8 107.3 147.7 116.3 147.1 Z" fill="#e4e4e4"/><path d="M122.6 153.4 C114.8 151.6 107 155.3 108.5 160 C110 163.9 124.1 163 125.6 159.1 C126.2 156.1 116.3 155.8 114.8 158.8 C114.5 160.6 119.6 160.6 120.5 159.1" stroke="#f6f6f6" stroke-width="1.25" fill="none" stroke-linecap="round"/><path d="M108.6 177 Q108.8 184.6 116.2 186.7 Q115.9 179.1 108.6 177 Z" fill="#333"/><path d="M124 177 Q116.7 179.1 116.4 186.7 Q123.7 184.6 124 177 Z" fill="#333"/><path d="M114.5 184.6 L118.1 184.6 L117 202.3 L115.5 202.3 Z" fill="#333"/><path d="M200.3 169.6 C209.3 168.7 216.2 171.7 216.2 180.4 C216.2 189.4 206.6 201.4 200.3 205 C194 201.4 184.4 189.4 184.4 181 C184.4 172.3 191.3 170.2 200.3 169.6 Z" fill="#aaa"/><path d="M206.6 175.9 C198.8 174.1 191 177.8 192.5 182.5 C194 186.4 208.1 185.5 209.6 181.6 C210.2 178.6 200.3 178.3 198.8 181.3 C198.5 183.1 203.6 183.1 204.5 181.6" stroke="#fff" stroke-width="1.25" fill="none" stroke-linecap="round"/><path d="M192.6 199.5 Q192.9 207.2 200.2 209.2 Q200 201.6 192.6 199.5 Z" fill="#333"/><path d="M208 199.5 Q200.7 201.6 200.4 209.2 Q207.8 207.2 208 199.5 Z" fill="#333"/><path d="M198.5 207.1 L202.1 207.1 L201.1 224.8 L199.6 224.8 Z" fill="#333"/><path d="M75.8 182.3 C84.8 181.4 91.7 184.4 91.7 193.1 C91.7 202.1 82.1 214.1 75.8 217.7 C69.5 214.1 59.9 202.1 59.9 193.7 C59.9 185 66.8 182.9 75.8 182.3 Z" fill="#aaa"/><path d="M82.1 188.6 C74.3 186.8 66.5 190.6 68 195.2 C69.5 199.1 83.6 198.2 85.1 194.3 C85.7 191.3 75.8 191 74.3 194 C74 195.8 79.1 195.8 80 194.3" stroke="#fff" stroke-width="1.25" fill="none" stroke-linecap="round"/><path d="M68.1 212.3 Q68.3 219.9 75.7 222 Q75.4 214.4 68.1 212.3 Z" fill="#333"/><path d="M83.5 212.3 Q76.1 214.4 75.9 222 Q83.2 219.9 83.5 212.3 Z" fill="#333"/><path d="M74 219.8 L77.6 219.8 L76.5 237.5 L75 237.5 Z" fill="#333"/><path d="M163.6 192.8 C172.6 191.9 179.5 194.9 179.5 203.6 C179.5 212.6 169.9 224.6 163.6 228.2 C157.3 224.6 147.7 212.6 147.7 204.2 C147.7 195.5 154.6 193.4 163.6 192.8 Z" fill="#aaa"/><path d="M169.9 199.1 C162.1 197.3 154.3 201.1 155.8 205.7 C157.3 209.6 171.4 208.7 172.9 204.8 C173.5 201.8 163.6 201.5 162.1 204.5 C161.8 206.3 166.9 206.3 167.8 204.8" stroke="#fff" stroke-width="1.25" fill="none" stroke-linecap="round"/><path d="M155.9 222.8 Q156.1 230.4 163.5 232.5 Q163.2 224.9 155.9 222.8 Z" fill="#333"/><path d="M171.3 222.8 Q163.9 224.9 163.7 232.5 Q171 230.4 171.3 222.8 Z" fill="#333"/><path d="M161.8 230.3 L165.4 230.3 L164.3 248 L162.8 248 Z" fill="#333"/></g><use href="#t7" x="-201" y="-201"/><use href="#t7" x="0" y="-201"/><use href="#t7" x="201" y="-201"/><use href="#t7" x="-201" y="0"/><use href="#t7" x="201" y="0"/><use href="#t7" x="-201" y="201"/><use href="#t7" x="0" y="201"/><use href="#t7" x="201" y="201"/></svg>
<svg style="left:753.8px;top:557.1px;overflow:hidden" width="267.8" height="267.8" viewBox="0 0 267.8 267.8"><rect width="268" height="268" fill="#e6e6e6"/><g id="t8"><path d="M143.3 96C141.8 84 135.1 67.5 135.1 49.5C135.1 42 137.3 36 138.8 30C139.9 19.5 141.8 6 143.3 -4.5M143.3 96C135.1 81 123 67.5 111 60C103.5 55.8 96 52.5 90 51C87.8 50.3 86.3 48.8 87.8 46.8M111.8 60.3C106.8 52.5 102.3 45 100.2 39.3M124.5 69.8C118.8 60 115.8 51 118.5 43.8M134 45C129.4 40.8 125.8 34.8 124.8 28.2M138.8 30.8C148.6 25.5 156.1 19.5 159.1 18C165.1 13.8 169.6 8.4 172.6 7.5C178.6 6.3 183.8 6 186.8 3.3M161.3 16.1C164.3 6 162.4 -3 158.8 -8.3M174.1 7.2C175.6 0 176.5 -4.5 177.4 -8.7M144.1 98.3C147.8 93 149.5 87 150.4 82.2M135.5 54C141.1 48 147.8 45 152.5 36.8M140.3 108C138.1 100.8 132.1 93.8 125.8 89.7" stroke="#333" stroke-width="1.9" fill="none" stroke-linecap="round"/><path d="M142.6 12.9 Q148.7 11.3 147.1 5.1 Q140.9 6.8 142.6 12.9 Z" fill="#333"/><path d="M147.9 20 Q154.3 19.4 153.7 13.1 Q147.4 13.6 147.9 20 Z" fill="#333"/><path d="M164.4 13.5 Q169.6 17.2 173.3 12 Q168 8.3 164.4 13.5 Z" fill="#333"/><path d="M142.6 45.4 Q147.5 49.5 151.5 44.6 Q146.7 40.5 142.6 45.4 Z" fill="#333"/><path d="M111 49.7 Q112.7 43.5 106.5 41.9 Q104.9 48 111 49.7 Z" fill="#333"/><path d="M136.4 61.2 Q137 54.9 130.7 54.3 Q130.1 60.7 136.4 61.2 Z" fill="#333"/><path d="M120 63 Q114.8 59.3 111.1 64.6 Q116.3 68.2 120 63 Z" fill="#333"/><path d="M132.8 97.9 Q127.9 93.8 123.8 98.7 Q128.7 102.8 132.8 97.9 Z" fill="#333"/><path d="M140.4 115.2 Q146.8 114.7 146.2 108.3 Q139.9 108.9 140.4 115.2 Z" fill="#333"/><path d="M149 90 Q155.2 88.9 154.1 82.6 Q147.9 83.7 149 90 Z" fill="#333"/><path d="M163.5 100.3 Q169.3 97.6 166.6 91.8 Q160.8 94.5 163.5 100.3 Z" fill="#333"/><path d="M109.4 58.2 Q106.2 52.7 100.7 55.9 Q103.9 61.4 109.4 58.2 Z" fill="#333"/><path d="M129.1 41.4 Q130.7 35.3 124.5 33.6 Q122.9 39.8 129.1 41.4 Z" fill="#333"/><path d="M141.5 43.1 Q143.6 37.1 137.7 34.9 Q135.5 40.9 141.5 43.1 Z" fill="#333"/><g transform="translate(87.3 46.2) rotate(-35)"><path d="M-2 0.4 C-5.4 -1.3 -6.1 -5.7 -4.6 -9.6 L-2.2 -7.2 L0 -10.2 L2.2 -7.2 L4.6 -9.6 C6.1 -5.7 5.4 -1.3 2 0.4 Z" fill="#fff"/><path d="M0 1.3 L-2.4 -1.5 M0 1.3 L2.4 -1.5" stroke="#333" stroke-width="1.5" stroke-linecap="round"/></g><g transform="translate(99.8 38.7) rotate(-10)"><path d="M-2.1 0.5 C-5.8 -1.4 -6.5 -6 -4.9 -10.2 L-2.3 -7.7 L0 -10.9 L2.3 -7.7 L4.9 -10.2 C6.5 -6 5.8 -1.4 2.1 0.5 Z" fill="#c6c6c6"/><path d="M0 1.4 L-2.6 -1.6 M0 1.4 L2.6 -1.6" stroke="#333" stroke-width="1.6" stroke-linecap="round"/></g><g transform="translate(118.5 43.2) rotate(15)"><path d="M-1.6 0.4 C-4.5 -1.1 -5 -4.7 -3.8 -7.9 L-1.8 -5.9 L0 -8.5 L1.8 -5.9 L3.8 -7.9 C5 -4.7 4.5 -1.1 1.6 0.4 Z" fill="#aaa"/><path d="M0 1.1 L-2 -1.3 M0 1.1 L2 -1.3" stroke="#333" stroke-width="1.3" stroke-linecap="round"/></g><g transform="translate(124.5 27.6) rotate(-20)"><path d="M-2 0.5 C-5.6 -1.4 -6.3 -5.9 -4.7 -9.9 L-2.3 -7.4 L0 -10.6 L2.3 -7.4 L4.7 -9.9 C6.3 -5.9 5.6 -1.4 2 0.5 Z" fill="#fff"/><path d="M0 1.4 L-2.5 -1.6 M0 1.4 L2.5 -1.6" stroke="#333" stroke-width="1.6" stroke-linecap="round"/></g><g transform="translate(187.6 2.7) rotate(30)"><path d="M-2 0.5 C-5.6 -1.4 -6.3 -5.9 -4.7 -9.9 L-2.3 -7.4 L0 -10.6 L2.3 -7.4 L4.7 -9.9 C6.3 -5.9 5.6 -1.4 2 0.5 Z" fill="#fff"/><path d="M0 1.4 L-2.5 -1.6 M0 1.4 L2.5 -1.6" stroke="#333" stroke-width="1.6" stroke-linecap="round"/></g><g transform="translate(158.5 91.8) rotate(-30)"><path d="M-1.7 0.4 C-4.7 -1.1 -5.3 -4.9 -3.9 -8.3 L-1.9 -6.2 L0 -8.8 L1.9 -6.2 L3.9 -8.3 C5.3 -4.9 4.7 -1.1 1.7 0.4 Z" fill="#aaa"/><path d="M0 1.1 L-2.1 -1.3 M0 1.1 L2.1 -1.3" stroke="#333" stroke-width="1.3" stroke-linecap="round"/></g><g transform="translate(177.5 91.5) rotate(8)"><path d="M-2 0.5 C-5.6 -1.4 -6.3 -5.9 -4.7 -9.9 L-2.3 -7.4 L0 -10.6 L2.3 -7.4 L4.7 -9.9 C6.3 -5.9 5.6 -1.4 2 0.5 Z" fill="#c6c6c6"/><path d="M0 1.4 L-2.5 -1.6 M0 1.4 L2.5 -1.6" stroke="#333" stroke-width="1.6" stroke-linecap="round"/></g><g transform="translate(150.7 81.8) rotate(25)"><path d="M-2 0.5 C-5.6 -1.4 -6.3 -5.9 -4.7 -9.9 L-2.3 -7.4 L0 -10.6 L2.3 -7.4 L4.7 -9.9 C6.3 -5.9 5.6 -1.4 2 0.5 Z" fill="#fff"/><path d="M0 1.4 L-2.5 -1.6 M0 1.4 L2.5 -1.6" stroke="#333" stroke-width="1.6" stroke-linecap="round"/></g><g transform="translate(153.1 36) rotate(38)"><path d="M-2.4 0.5 C-6.8 -1.6 -7.6 -7 -5.7 -11.9 L-2.7 -8.9 L0 -12.7 L2.7 -8.9 L5.7 -11.9 C7.6 -7 6.8 -1.6 2.4 0.5 Z" fill="#aaa"/><path d="M0 1.6 L-3 -1.9 M0 1.6 L3 -1.9" stroke="#333" stroke-width="1.9" stroke-linecap="round"/></g><g transform="translate(125.3 89.4) rotate(-52)"><path d="M-2.4 0.5 C-6.8 -1.6 -7.6 -7 -5.7 -11.9 L-2.7 -8.9 L0 -12.7 L2.7 -8.9 L5.7 -11.9 C7.6 -7 6.8 -1.6 2.4 0.5 Z" fill="#aaa"/><path d="M0 1.6 L-3 -1.9 M0 1.6 L3 -1.9" stroke="#333" stroke-width="1.9" stroke-linecap="round"/></g></g><use href="#t8" x="-201" y="-201"/><use href="#t8" x="-100.5" y="-201"/><use href="#t8" x="0" y="-201"/><use href="#t8" x="100.5" y="-201"/><use href="#t8" x="201" y="-201"/><use href="#t8" x="-201" y="-100.5"/><use href="#t8" x="-100.5" y="-100.5"/><use href="#t8" x="0" y="-100.5"/><use href="#t8" x="100.5" y="-100.5"/><use href="#t8" x="201" y="-100.5"/><use href="#t8" x="-201" y="0"/><use href="#t8" x="-100.5" y="0"/><use href="#t8" x="100.5" y="0"/><use href="#t8" x="201" y="0"/><use href="#t8" x="-201" y="100.5"/><use href="#t8" x="-100.5" y="100.5"/><use href="#t8" x="0" y="100.5"/><use href="#t8" x="100.5" y="100.5"/><use href="#t8" x="201" y="100.5"/><use href="#t8" x="-201" y="201"/><use href="#t8" x="-100.5" y="201"/><use href="#t8" x="0" y="201"/><use href="#t8" x="100.5" y="201"/><use href="#t8" x="201" y="201"/></svg>
<svg style="left:1035px;top:557.1px;overflow:hidden" width="267.8" height="267.8" viewBox="0 0 267.8 267.8"><defs><g id="hA" fill="currentColor" stroke="currentColor" stroke-width=".3"><path d="M9 61.5 Q12.8 39 24.8 18 M24.8 18 L24 14.3 M24.8 18 L33.3 15 M18.3 31.5 L15 28.5 M18.3 31.5 L27 29.3 M12.8 46.5 L9 45 M12.8 46.5 L20.3 43.5" fill="none" stroke-width=".9"/><g transform="translate(23.3 9.3) rotate(-22)"><path d="M0 6.5 C-5.8 1.9 -8.4 -3.5 -4 -6.3 C-1.6 -7.7 0 -4.8 0 -2.9 C0 -4.8 1.6 -7.7 4 -6.3 C8.4 -3.5 5.8 1.9 0 6.5 Z"/><g fill="#9c9c9c" stroke="none"><circle cx="-3.2" cy="-2.9" r=".75"/><circle cx="0" cy="-1.3" r=".75"/><circle cx="3.2" cy="-2.9" r=".75"/><circle cx="-1.6" cy="1" r=".75"/><circle cx="1.8" cy="0.8" r=".75"/><circle cx="0" cy="3.2" r=".75"/><circle cx="-3.5" cy="-0.3" r=".75"/><circle cx="3.5" cy="-0.3" r=".75"/></g></g><g transform="translate(35.7 10.8) rotate(40)"><path d="M0 6.5 C-5.8 1.9 -8.4 -3.5 -4 -6.3 C-1.6 -7.7 0 -4.8 0 -2.9 C0 -4.8 1.6 -7.7 4 -6.3 C8.4 -3.5 5.8 1.9 0 6.5 Z"/><g fill="#9c9c9c" stroke="none"><circle cx="-3.2" cy="-2.9" r=".75"/><circle cx="0" cy="-1.3" r=".75"/><circle cx="3.2" cy="-2.9" r=".75"/><circle cx="-1.6" cy="1" r=".75"/><circle cx="1.8" cy="0.8" r=".75"/><circle cx="0" cy="3.2" r=".75"/><circle cx="-3.5" cy="-0.3" r=".75"/><circle cx="3.5" cy="-0.3" r=".75"/></g></g><g transform="translate(11 24.8) rotate(-55)"><path d="M0 6.5 C-5.8 1.9 -8.4 -3.5 -4 -6.3 C-1.6 -7.7 0 -4.8 0 -2.9 C0 -4.8 1.6 -7.7 4 -6.3 C8.4 -3.5 5.8 1.9 0 6.5 Z"/><g fill="#9c9c9c" stroke="none"><circle cx="-3.2" cy="-2.9" r=".75"/><circle cx="0" cy="-1.3" r=".75"/><circle cx="3.2" cy="-2.9" r=".75"/><circle cx="-1.6" cy="1" r=".75"/><circle cx="1.8" cy="0.8" r=".75"/><circle cx="0" cy="3.2" r=".75"/><circle cx="-3.5" cy="-0.3" r=".75"/><circle cx="3.5" cy="-0.3" r=".75"/></g></g><g transform="translate(30.5 25.8) rotate(55)"><path d="M0 6.5 C-5.8 1.9 -8.4 -3.5 -4 -6.3 C-1.6 -7.7 0 -4.8 0 -2.9 C0 -4.8 1.6 -7.7 4 -6.3 C8.4 -3.5 5.8 1.9 0 6.5 Z"/><g fill="#9c9c9c" stroke="none"><circle cx="-3.2" cy="-2.9" r=".75"/><circle cx="0" cy="-1.3" r=".75"/><circle cx="3.2" cy="-2.9" r=".75"/><circle cx="-1.6" cy="1" r=".75"/><circle cx="1.8" cy="0.8" r=".75"/><circle cx="0" cy="3.2" r=".75"/><circle cx="-3.5" cy="-0.3" r=".75"/><circle cx="3.5" cy="-0.3" r=".75"/></g></g><g transform="translate(5 41.6) rotate(-55)"><path d="M0 6.5 C-5.8 1.9 -8.4 -3.5 -4 -6.3 C-1.6 -7.7 0 -4.8 0 -2.9 C0 -4.8 1.6 -7.7 4 -6.3 C8.4 -3.5 5.8 1.9 0 6.5 Z"/><g fill="#9c9c9c" stroke="none"><circle cx="-3.2" cy="-2.9" r=".75"/><circle cx="0" cy="-1.3" r=".75"/><circle cx="3.2" cy="-2.9" r=".75"/><circle cx="-1.6" cy="1" r=".75"/><circle cx="1.8" cy="0.8" r=".75"/><circle cx="0" cy="3.2" r=".75"/><circle cx="-3.5" cy="-0.3" r=".75"/><circle cx="3.5" cy="-0.3" r=".75"/></g></g><g transform="translate(22.8 40.2) rotate(55)"><path d="M0 6.5 C-5.8 1.9 -8.4 -3.5 -4 -6.3 C-1.6 -7.7 0 -4.8 0 -2.9 C0 -4.8 1.6 -7.7 4 -6.3 C8.4 -3.5 5.8 1.9 0 6.5 Z"/><g fill="#9c9c9c" stroke="none"><circle cx="-3.2" cy="-2.9" r=".75"/><circle cx="0" cy="-1.3" r=".75"/><circle cx="3.2" cy="-2.9" r=".75"/><circle cx="-1.6" cy="1" r=".75"/><circle cx="1.8" cy="0.8" r=".75"/><circle cx="0" cy="3.2" r=".75"/><circle cx="-3.5" cy="-0.3" r=".75"/><circle cx="3.5" cy="-0.3" r=".75"/></g></g></g><g id="hB" fill="currentColor" stroke="currentColor" stroke-width=".3"><path d="M57.3 11.3 L55.8 24.8 Q50.3 43.5 39.3 59.3 M55.8 24.8 L59.3 27.8 M54 30.8 L45.8 30.8 M50.3 42.8 L54 45 M48.3 46.5 L39.8 45 M42.8 55.5 L45.8 59.3" fill="none" stroke-width=".9"/><g transform="translate(43.8 34.2) rotate(-140)"><path d="M0 6.5 C-5.8 1.9 -8.4 -3.5 -4 -6.3 C-1.6 -7.7 0 -4.8 0 -2.9 C0 -4.8 1.6 -7.7 4 -6.3 C8.4 -3.5 5.8 1.9 0 6.5 Z"/><g fill="#9c9c9c" stroke="none"><circle cx="-3.2" cy="-2.9" r=".75"/><circle cx="0" cy="-1.3" r=".75"/><circle cx="3.2" cy="-2.9" r=".75"/><circle cx="-1.6" cy="1" r=".75"/><circle cx="1.8" cy="0.8" r=".75"/><circle cx="0" cy="3.2" r=".75"/><circle cx="-3.5" cy="-0.3" r=".75"/><circle cx="3.5" cy="-0.3" r=".75"/></g></g><g transform="translate(60 31.8) rotate(165)"><path d="M0 6.5 C-5.8 1.9 -8.4 -3.5 -4 -6.3 C-1.6 -7.7 0 -4.8 0 -2.9 C0 -4.8 1.6 -7.7 4 -6.3 C8.4 -3.5 5.8 1.9 0 6.5 Z"/><g fill="#9c9c9c" stroke="none"><circle cx="-3.2" cy="-2.9" r=".75"/><circle cx="0" cy="-1.3" r=".75"/><circle cx="3.2" cy="-2.9" r=".75"/><circle cx="-1.6" cy="1" r=".75"/><circle cx="1.8" cy="0.8" r=".75"/><circle cx="0" cy="3.2" r=".75"/><circle cx="-3.5" cy="-0.3" r=".75"/><circle cx="3.5" cy="-0.3" r=".75"/></g></g><g transform="translate(37.5 48.3) rotate(-140)"><path d="M0 6.5 C-5.8 1.9 -8.4 -3.5 -4 -6.3 C-1.6 -7.7 0 -4.8 0 -2.9 C0 -4.8 1.6 -7.7 4 -6.3 C8.4 -3.5 5.8 1.9 0 6.5 Z"/><g fill="#9c9c9c" stroke="none"><circle cx="-3.2" cy="-2.9" r=".75"/><circle cx="0" cy="-1.3" r=".75"/><circle cx="3.2" cy="-2.9" r=".75"/><circle cx="-1.6" cy="1" r=".75"/><circle cx="1.8" cy="0.8" r=".75"/><circle cx="0" cy="3.2" r=".75"/><circle cx="-3.5" cy="-0.3" r=".75"/><circle cx="3.5" cy="-0.3" r=".75"/></g></g><g transform="translate(54.9 49.2) rotate(150)"><path d="M0 6.5 C-5.8 1.9 -8.4 -3.5 -4 -6.3 C-1.6 -7.7 0 -4.8 0 -2.9 C0 -4.8 1.6 -7.7 4 -6.3 C8.4 -3.5 5.8 1.9 0 6.5 Z"/><g fill="#9c9c9c" stroke="none"><circle cx="-3.2" cy="-2.9" r=".75"/><circle cx="0" cy="-1.3" r=".75"/><circle cx="3.2" cy="-2.9" r=".75"/><circle cx="-1.6" cy="1" r=".75"/><circle cx="1.8" cy="0.8" r=".75"/><circle cx="0" cy="3.2" r=".75"/><circle cx="-3.5" cy="-0.3" r=".75"/><circle cx="3.5" cy="-0.3" r=".75"/></g></g><g transform="translate(32.6 64.8) rotate(-165)"><path d="M0 6.5 C-5.8 1.9 -8.4 -3.5 -4 -6.3 C-1.6 -7.7 0 -4.8 0 -2.9 C0 -4.8 1.6 -7.7 4 -6.3 C8.4 -3.5 5.8 1.9 0 6.5 Z"/><g fill="#9c9c9c" stroke="none"><circle cx="-3.2" cy="-2.9" r=".75"/><circle cx="0" cy="-1.3" r=".75"/><circle cx="3.2" cy="-2.9" r=".75"/><circle cx="-1.6" cy="1" r=".75"/><circle cx="1.8" cy="0.8" r=".75"/><circle cx="0" cy="3.2" r=".75"/><circle cx="-3.5" cy="-0.3" r=".75"/><circle cx="3.5" cy="-0.3" r=".75"/></g></g><g transform="translate(45.3 64.2) rotate(170)"><path d="M0 6.5 C-5.8 1.9 -8.4 -3.5 -4 -6.3 C-1.6 -7.7 0 -4.8 0 -2.9 C0 -4.8 1.6 -7.7 4 -6.3 C8.4 -3.5 5.8 1.9 0 6.5 Z"/><g fill="#9c9c9c" stroke="none"><circle cx="-3.2" cy="-2.9" r=".75"/><circle cx="0" cy="-1.3" r=".75"/><circle cx="3.2" cy="-2.9" r=".75"/><circle cx="-1.6" cy="1" r=".75"/><circle cx="1.8" cy="0.8" r=".75"/><circle cx="0" cy="3.2" r=".75"/><circle cx="-3.5" cy="-0.3" r=".75"/><circle cx="3.5" cy="-0.3" r=".75"/></g></g></g></defs><rect width="268" height="268" fill="#e4e4e4"/><use href="#hA" x="-67" y="-67" style="color:#6e6e6e"/><use href="#hB" x="-67" y="-67" style="color:#fff"/><use href="#hA" x="0" y="-67" style="color:#fff"/><use href="#hB" x="0" y="-67" style="color:#6e6e6e"/><use href="#hA" x="67" y="-67" style="color:#333"/><use href="#hB" x="67" y="-67" style="color:#fff"/><use href="#hA" x="134.1" y="-67" style="color:#6e6e6e"/><use href="#hB" x="134.1" y="-67" style="color:#fff"/><use href="#hA" x="201.1" y="-67" style="color:#fff"/><use href="#hB" x="201.1" y="-67" style="color:#6e6e6e"/><use href="#hA" x="268.1" y="-67" style="color:#333"/><use href="#hB" x="268.1" y="-67" style="color:#fff"/><use href="#hA" x="-67" y="0" style="color:#fff"/><use href="#hB" x="-67" y="0" style="color:#333"/><use href="#hA" x="0" y="0" style="color:#6e6e6e"/><use href="#hB" x="0" y="0" style="color:#333"/><use href="#hA" x="67" y="0" style="color:#fff"/><use href="#hB" x="67" y="0" style="color:#6e6e6e"/><use href="#hA" x="134.1" y="0" style="color:#fff"/><use href="#hB" x="134.1" y="0" style="color:#333"/><use href="#hA" x="201.1" y="0" style="color:#6e6e6e"/><use href="#hB" x="201.1" y="0" style="color:#333"/><use href="#hA" x="268.1" y="0" style="color:#fff"/><use href="#hB" x="268.1" y="0" style="color:#6e6e6e"/><use href="#hA" x="-67" y="67" style="color:#333"/><use href="#hB" x="-67" y="67" style="color:#6e6e6e"/><use href="#hA" x="0" y="67" style="color:#333"/><use href="#hB" x="0" y="67" style="color:#fff"/><use href="#hA" x="67" y="67" style="color:#6e6e6e"/><use href="#hB" x="67" y="67" style="color:#333"/><use href="#hA" x="134.1" y="67" style="color:#333"/><use href="#hB" x="134.1" y="67" style="color:#6e6e6e"/><use href="#hA" x="201.1" y="67" style="color:#333"/><use href="#hB" x="201.1" y="67" style="color:#fff"/><use href="#hA" x="268.1" y="67" style="color:#6e6e6e"/><use href="#hB" x="268.1" y="67" style="color:#333"/><use href="#hA" x="-67" y="134.1" style="color:#6e6e6e"/><use href="#hB" x="-67" y="134.1" style="color:#fff"/><use href="#hA" x="0" y="134.1" style="color:#fff"/><use href="#hB" x="0" y="134.1" style="color:#6e6e6e"/><use href="#hA" x="67" y="134.1" style="color:#333"/><use href="#hB" x="67" y="134.1" style="color:#fff"/><use href="#hA" x="134.1" y="134.1" style="color:#6e6e6e"/><use href="#hB" x="134.1" y="134.1" style="color:#fff"/><use href="#hA" x="201.1" y="134.1" style="color:#fff"/><use href="#hB" x="201.1" y="134.1" style="color:#6e6e6e"/><use href="#hA" x="268.1" y="134.1" style="color:#333"/><use href="#hB" x="268.1" y="134.1" style="color:#fff"/><use href="#hA" x="-67" y="201.1" style="color:#fff"/><use href="#hB" x="-67" y="201.1" style="color:#333"/><use href="#hA" x="0" y="201.1" style="color:#6e6e6e"/><use href="#hB" x="0" y="201.1" style="color:#333"/><use href="#hA" x="67" y="201.1" style="color:#fff"/><use href="#hB" x="67" y="201.1" style="color:#6e6e6e"/><use href="#hA" x="134.1" y="201.1" style="color:#fff"/><use href="#hB" x="134.1" y="201.1" style="color:#333"/><use href="#hA" x="201.1" y="201.1" style="color:#6e6e6e"/><use href="#hB" x="201.1" y="201.1" style="color:#333"/><use href="#hA" x="268.1" y="201.1" style="color:#fff"/><use href="#hB" x="268.1" y="201.1" style="color:#6e6e6e"/><use href="#hA" x="-67" y="268.1" style="color:#333"/><use href="#hB" x="-67" y="268.1" style="color:#6e6e6e"/><use href="#hA" x="0" y="268.1" style="color:#333"/><use href="#hB" x="0" y="268.1" style="color:#fff"/><use href="#hA" x="67" y="268.1" style="color:#6e6e6e"/><use href="#hB" x="67" y="268.1" style="color:#333"/><use href="#hA" x="134.1" y="268.1" style="color:#333"/><use href="#hB" x="134.1" y="268.1" style="color:#6e6e6e"/><use href="#hA" x="201.1" y="268.1" style="color:#333"/><use href="#hB" x="201.1" y="268.1" style="color:#fff"/><use href="#hA" x="268.1" y="268.1" style="color:#6e6e6e"/><use href="#hB" x="268.1" y="268.1" style="color:#333"/></svg>
<svg style="left:1316.2px;top:557.1px;overflow:hidden" width="267.8" height="267.8" viewBox="0 0 267.8 267.8"><defs><g id="m10"><path d="M-4.5 -0.3 C-6.8 -12 -16.5 -19.5 -27.3 -34.8 C-31.8 -18 -25.2 -3.3 -6.8 1.2 Z" fill="#c8c8c8"/><path d="M-3.8 0 C-15 -7.8 -30 -10.8 -45.3 -9 C-36 1.8 -19.5 7.8 -3.8 0 Z" fill="#aaa"/><path d="M4.5 -0.3 C6.8 -12 16.5 -19.5 27.3 -34.8 C31.8 -18 25.2 -3.3 6.8 1.2 Z" fill="#c8c8c8"/><path d="M3.8 0 C15 -7.8 30 -10.8 45.3 -9 C36 1.8 19.5 7.8 3.8 0 Z" fill="#aaa"/><circle cx="1.5" cy="-48" r="3" fill="#484848"/><circle cx="12.8" cy="-45" r="2" fill="#484848"/><circle cx="-10.5" cy="-43.5" r="3" fill="#c4c4c4"/><circle cx="-10.5" cy="-43.5" r="1.7" fill="#484848"/><circle cx="-1.5" cy="-41" r="1.8" fill="#484848"/><circle cx="6" cy="-38.3" r="2.9" fill="#c4c4c4"/><circle cx="6" cy="-38.3" r="1.5" fill="#484848"/><circle cx="16.5" cy="-37.5" r="2.1" fill="#484848"/><circle cx="-16.5" cy="-34.5" r="2.1" fill="#484848"/><circle cx="-6.8" cy="-35.3" r="3" fill="#484848"/><circle cx="5.3" cy="-30" r="3" fill="#484848"/><circle cx="15" cy="-30" r="1.7" fill="#484848"/><circle cx="-12.8" cy="-27" r="2.9" fill="#c4c4c4"/><circle cx="-12.8" cy="-27" r="1.5" fill="#484848"/><circle cx="-4.5" cy="-25.5" r="1.8" fill="#484848"/><circle cx="6" cy="-22.5" r="1.5" fill="#484848"/><circle cx="-1.5" cy="-16.5" r="3.2" fill="#c4c4c4"/><circle cx="-1.5" cy="-16.5" r="1.8" fill="#484848"/></g></defs><rect width="268" height="268" fill="#fff"/><use href="#m10" x="12" y="-50.3"/><use href="#m10" x="-38.3" y="0"/><use href="#m10" x="112.5" y="-50.3"/><use href="#m10" x="62.3" y="0"/><use href="#m10" x="213.1" y="-50.3"/><use href="#m10" x="162.8" y="0"/><use href="#m10" x="313.6" y="-50.3"/><use href="#m10" x="263.4" y="0"/><use href="#m10" x="12" y="50.3"/><use href="#m10" x="-38.3" y="100.5"/><use href="#m10" x="112.5" y="50.3"/><use href="#m10" x="62.3" y="100.5"/><use href="#m10" x="213.1" y="50.3"/><use href="#m10" x="162.8" y="100.5"/><use href="#m10" x="313.6" y="50.3"/><use href="#m10" x="263.4" y="100.5"/><use href="#m10" x="12" y="150.8"/><use href="#m10" x="-38.3" y="201.1"/><use href="#m10" x="112.5" y="150.8"/><use href="#m10" x="62.3" y="201.1"/><use href="#m10" x="213.1" y="150.8"/><use href="#m10" x="162.8" y="201.1"/><use href="#m10" x="313.6" y="150.8"/><use href="#m10" x="263.4" y="201.1"/><use href="#m10" x="12" y="251.4"/><use href="#m10" x="-38.3" y="301.6"/><use href="#m10" x="112.5" y="251.4"/><use href="#m10" x="62.3" y="301.6"/><use href="#m10" x="213.1" y="251.4"/><use href="#m10" x="162.8" y="301.6"/><use href="#m10" x="313.6" y="251.4"/><use href="#m10" x="263.4" y="301.6"/><use href="#m10" x="12" y="351.9"/><use href="#m10" x="-38.3" y="402.2"/><use href="#m10" x="112.5" y="351.9"/><use href="#m10" x="62.3" y="402.2"/><use href="#m10" x="213.1" y="351.9"/><use href="#m10" x="162.8" y="402.2"/><use href="#m10" x="313.6" y="351.9"/><use href="#m10" x="263.4" y="402.2"/></svg>
<svg style="left:0;top:0" width="2048" height="1786" viewBox="0 0 2048 1786"><rect x="191.4" y="257.1" width="267.8" height="267.8" fill="none" stroke="#4f80ff" stroke-width="1.3"/><rect x="188.4" y="254.1" width="6" height="6" fill="#4f80ff"/><rect x="456.2" y="254.1" width="6" height="6" fill="#4f80ff"/><rect x="188.4" y="521.9" width="6" height="6" fill="#4f80ff"/><rect x="456.2" y="521.9" width="6" height="6" fill="#4f80ff"/><rect x="322.3" y="388.0" width="6" height="6" fill="#4f80ff"/><circle cx="208.7" cy="274.4" r="3.9" fill="#fff" stroke="#4f80ff" stroke-width="1.2"/><circle cx="208.7" cy="274.4" r="1.7" fill="#4f80ff"/><circle cx="441.9" cy="274.4" r="3.9" fill="#fff" stroke="#4f80ff" stroke-width="1.2"/><circle cx="441.9" cy="274.4" r="1.7" fill="#4f80ff"/><circle cx="208.7" cy="507.6" r="3.9" fill="#fff" stroke="#4f80ff" stroke-width="1.2"/><circle cx="208.7" cy="507.6" r="1.7" fill="#4f80ff"/><circle cx="441.9" cy="507.6" r="3.9" fill="#fff" stroke="#4f80ff" stroke-width="1.2"/><circle cx="441.9" cy="507.6" r="1.7" fill="#4f80ff"/><rect x="472.6" y="257.1" width="267.8" height="267.8" fill="none" stroke="#4f80ff" stroke-width="1.3"/><rect x="469.6" y="254.1" width="6" height="6" fill="#4f80ff"/><rect x="737.4" y="254.1" width="6" height="6" fill="#4f80ff"/><rect x="469.6" y="521.9" width="6" height="6" fill="#4f80ff"/><rect x="737.4" y="521.9" width="6" height="6" fill="#4f80ff"/><rect x="603.5" y="388.0" width="6" height="6" fill="#4f80ff"/><circle cx="489.9" cy="274.4" r="3.9" fill="#fff" stroke="#4f80ff" stroke-width="1.2"/><circle cx="489.9" cy="274.4" r="1.7" fill="#4f80ff"/><circle cx="723.1" cy="274.4" r="3.9" fill="#fff" stroke="#4f80ff" stroke-width="1.2"/><circle cx="723.1" cy="274.4" r="1.7" fill="#4f80ff"/><circle cx="489.9" cy="507.6" r="3.9" fill="#fff" stroke="#4f80ff" stroke-width="1.2"/><circle cx="489.9" cy="507.6" r="1.7" fill="#4f80ff"/><circle cx="723.1" cy="507.6" r="3.9" fill="#fff" stroke="#4f80ff" stroke-width="1.2"/><circle cx="723.1" cy="507.6" r="1.7" fill="#4f80ff"/><rect x="753.8" y="257.1" width="267.8" height="267.8" fill="none" stroke="#4f80ff" stroke-width="1.3"/><rect x="750.8" y="254.1" width="6" height="6" fill="#4f80ff"/><rect x="1018.6" y="254.1" width="6" height="6" fill="#4f80ff"/><rect x="750.8" y="521.9" width="6" height="6" fill="#4f80ff"/><rect x="1018.6" y="521.9" width="6" height="6" fill="#4f80ff"/><rect x="884.7" y="388.0" width="6" height="6" fill="#4f80ff"/><circle cx="771.1" cy="274.4" r="3.9" fill="#fff" stroke="#4f80ff" stroke-width="1.2"/><circle cx="771.1" cy="274.4" r="1.7" fill="#4f80ff"/><circle cx="1004.3" cy="274.4" r="3.9" fill="#fff" stroke="#4f80ff" stroke-width="1.2"/><circle cx="1004.3" cy="274.4" r="1.7" fill="#4f80ff"/><circle cx="771.1" cy="507.6" r="3.9" fill="#fff" stroke="#4f80ff" stroke-width="1.2"/><circle cx="771.1" cy="507.6" r="1.7" fill="#4f80ff"/><circle cx="1004.3" cy="507.6" r="3.9" fill="#fff" stroke="#4f80ff" stroke-width="1.2"/><circle cx="1004.3" cy="507.6" r="1.7" fill="#4f80ff"/><rect x="1035.0" y="257.1" width="267.8" height="267.8" fill="none" stroke="#4f80ff" stroke-width="1.3"/><rect x="1032.0" y="254.1" width="6" height="6" fill="#4f80ff"/><rect x="1299.8" y="254.1" width="6" height="6" fill="#4f80ff"/><rect x="1032.0" y="521.9" width="6" height="6" fill="#4f80ff"/><rect x="1299.8" y="521.9" width="6" height="6" fill="#4f80ff"/><rect x="1165.9" y="388.0" width="6" height="6" fill="#4f80ff"/><circle cx="1052.3" cy="274.4" r="3.9" fill="#fff" stroke="#4f80ff" stroke-width="1.2"/><circle cx="1052.3" cy="274.4" r="1.7" fill="#4f80ff"/><circle cx="1285.5" cy="274.4" r="3.9" fill="#fff" stroke="#4f80ff" stroke-width="1.2"/><circle cx="1285.5" cy="274.4" r="1.7" fill="#4f80ff"/><circle cx="1052.3" cy="507.6" r="3.9" fill="#fff" stroke="#4f80ff" stroke-width="1.2"/><circle cx="1052.3" cy="507.6" r="1.7" fill="#4f80ff"/><circle cx="1285.5" cy="507.6" r="3.9" fill="#fff" stroke="#4f80ff" stroke-width="1.2"/><circle cx="1285.5" cy="507.6" r="1.7" fill="#4f80ff"/><rect x="1316.2" y="257.1" width="267.8" height="267.8" fill="none" stroke="#4f80ff" stroke-width="1.3"/><rect x="1313.2" y="254.1" width="6" height="6" fill="#4f80ff"/><rect x="1581.0" y="254.1" width="6" height="6" fill="#4f80ff"/><rect x="1313.2" y="521.9" width="6" height="6" fill="#4f80ff"/><rect x="1581.0" y="521.9" width="6" height="6" fill="#4f80ff"/><rect x="1447.1" y="388.0" width="6" height="6" fill="#4f80ff"/><circle cx="1333.5" cy="274.4" r="3.9" fill="#fff" stroke="#4f80ff" stroke-width="1.2"/><circle cx="1333.5" cy="274.4" r="1.7" fill="#4f80ff"/><circle cx="1566.7" cy="274.4" r="3.9" fill="#fff" stroke="#4f80ff" stroke-width="1.2"/><circle cx="1566.7" cy="274.4" r="1.7" fill="#4f80ff"/><circle cx="1333.5" cy="507.6" r="3.9" fill="#fff" stroke="#4f80ff" stroke-width="1.2"/><circle cx="1333.5" cy="507.6" r="1.7" fill="#4f80ff"/><circle cx="1566.7" cy="507.6" r="3.9" fill="#fff" stroke="#4f80ff" stroke-width="1.2"/><circle cx="1566.7" cy="507.6" r="1.7" fill="#4f80ff"/><rect x="191.4" y="557.1" width="267.8" height="267.8" fill="none" stroke="#4f80ff" stroke-width="1.3"/><rect x="188.4" y="554.1" width="6" height="6" fill="#4f80ff"/><rect x="456.2" y="554.1" width="6" height="6" fill="#4f80ff"/><rect x="188.4" y="821.9" width="6" height="6" fill="#4f80ff"/><rect x="456.2" y="821.9" width="6" height="6" fill="#4f80ff"/><rect x="322.3" y="688.0" width="6" height="6" fill="#4f80ff"/><circle cx="208.7" cy="574.4" r="3.9" fill="#fff" stroke="#4f80ff" stroke-width="1.2"/><circle cx="208.7" cy="574.4" r="1.7" fill="#4f80ff"/><circle cx="441.9" cy="574.4" r="3.9" fill="#fff" stroke="#4f80ff" stroke-width="1.2"/><circle cx="441.9" cy="574.4" r="1.7" fill="#4f80ff"/><circle cx="208.7" cy="807.6" r="3.9" fill="#fff" stroke="#4f80ff" stroke-width="1.2"/><circle cx="208.7" cy="807.6" r="1.7" fill="#4f80ff"/><circle cx="441.9" cy="807.6" r="3.9" fill="#fff" stroke="#4f80ff" stroke-width="1.2"/><circle cx="441.9" cy="807.6" r="1.7" fill="#4f80ff"/><rect x="472.6" y="557.1" width="267.8" height="267.8" fill="none" stroke="#4f80ff" stroke-width="1.3"/><rect x="469.6" y="554.1" width="6" height="6" fill="#4f80ff"/><rect x="737.4" y="554.1" width="6" height="6" fill="#4f80ff"/><rect x="469.6" y="821.9" width="6" height="6" fill="#4f80ff"/><rect x="737.4" y="821.9" width="6" height="6" fill="#4f80ff"/><rect x="603.5" y="688.0" width="6" height="6" fill="#4f80ff"/><circle cx="489.9" cy="574.4" r="3.9" fill="#fff" stroke="#4f80ff" stroke-width="1.2"/><circle cx="489.9" cy="574.4" r="1.7" fill="#4f80ff"/><circle cx="723.1" cy="574.4" r="3.9" fill="#fff" stroke="#4f80ff" stroke-width="1.2"/><circle cx="723.1" cy="574.4" r="1.7" fill="#4f80ff"/><circle cx="489.9" cy="807.6" r="3.9" fill="#fff" stroke="#4f80ff" stroke-width="1.2"/><circle cx="489.9" cy="807.6" r="1.7" fill="#4f80ff"/><circle cx="723.1" cy="807.6" r="3.9" fill="#fff" stroke="#4f80ff" stroke-width="1.2"/><circle cx="723.1" cy="807.6" r="1.7" fill="#4f80ff"/><rect x="753.8" y="557.1" width="267.8" height="267.8" fill="none" stroke="#4f80ff" stroke-width="1.3"/><rect x="750.8" y="554.1" width="6" height="6" fill="#4f80ff"/><rect x="1018.6" y="554.1" width="6" height="6" fill="#4f80ff"/><rect x="750.8" y="821.9" width="6" height="6" fill="#4f80ff"/><rect x="1018.6" y="821.9" width="6" height="6" fill="#4f80ff"/><rect x="884.7" y="688.0" width="6" height="6" fill="#4f80ff"/><circle cx="771.1" cy="574.4" r="3.9" fill="#fff" stroke="#4f80ff" stroke-width="1.2"/><circle cx="771.1" cy="574.4" r="1.7" fill="#4f80ff"/><circle cx="1004.3" cy="574.4" r="3.9" fill="#fff" stroke="#4f80ff" stroke-width="1.2"/><circle cx="1004.3" cy="574.4" r="1.7" fill="#4f80ff"/><circle cx="771.1" cy="807.6" r="3.9" fill="#fff" stroke="#4f80ff" stroke-width="1.2"/><circle cx="771.1" cy="807.6" r="1.7" fill="#4f80ff"/><circle cx="1004.3" cy="807.6" r="3.9" fill="#fff" stroke="#4f80ff" stroke-width="1.2"/><circle cx="1004.3" cy="807.6" r="1.7" fill="#4f80ff"/><rect x="1035.0" y="557.1" width="267.8" height="267.8" fill="none" stroke="#4f80ff" stroke-width="1.3"/><rect x="1032.0" y="554.1" width="6" height="6" fill="#4f80ff"/><rect x="1299.8" y="554.1" width="6" height="6" fill="#4f80ff"/><rect x="1032.0" y="821.9" width="6" height="6" fill="#4f80ff"/><rect x="1299.8" y="821.9" width="6" height="6" fill="#4f80ff"/><rect x="1165.9" y="688.0" width="6" height="6" fill="#4f80ff"/><circle cx="1052.3" cy="574.4" r="3.9" fill="#fff" stroke="#4f80ff" stroke-width="1.2"/><circle cx="1052.3" cy="574.4" r="1.7" fill="#4f80ff"/><circle cx="1285.5" cy="574.4" r="3.9" fill="#fff" stroke="#4f80ff" stroke-width="1.2"/><circle cx="1285.5" cy="574.4" r="1.7" fill="#4f80ff"/><circle cx="1052.3" cy="807.6" r="3.9" fill="#fff" stroke="#4f80ff" stroke-width="1.2"/><circle cx="1052.3" cy="807.6" r="1.7" fill="#4f80ff"/><circle cx="1285.5" cy="807.6" r="3.9" fill="#fff" stroke="#4f80ff" stroke-width="1.2"/><circle cx="1285.5" cy="807.6" r="1.7" fill="#4f80ff"/><rect x="1316.2" y="557.1" width="267.8" height="267.8" fill="none" stroke="#4f80ff" stroke-width="1.3"/><rect x="1313.2" y="554.1" width="6" height="6" fill="#4f80ff"/><rect x="1581.0" y="554.1" width="6" height="6" fill="#4f80ff"/><rect x="1313.2" y="821.9" width="6" height="6" fill="#4f80ff"/><rect x="1581.0" y="821.9" width="6" height="6" fill="#4f80ff"/><rect x="1447.1" y="688.0" width="6" height="6" fill="#4f80ff"/><circle cx="1333.5" cy="574.4" r="3.9" fill="#fff" stroke="#4f80ff" stroke-width="1.2"/><circle cx="1333.5" cy="574.4" r="1.7" fill="#4f80ff"/><circle cx="1566.7" cy="574.4" r="3.9" fill="#fff" stroke="#4f80ff" stroke-width="1.2"/><circle cx="1566.7" cy="574.4" r="1.7" fill="#4f80ff"/><circle cx="1333.5" cy="807.6" r="3.9" fill="#fff" stroke="#4f80ff" stroke-width="1.2"/><circle cx="1333.5" cy="807.6" r="1.7" fill="#4f80ff"/><circle cx="1566.7" cy="807.6" r="3.9" fill="#fff" stroke="#4f80ff" stroke-width="1.2"/><circle cx="1566.7" cy="807.6" r="1.7" fill="#4f80ff"/></svg>
</div></div>

</body></html>
